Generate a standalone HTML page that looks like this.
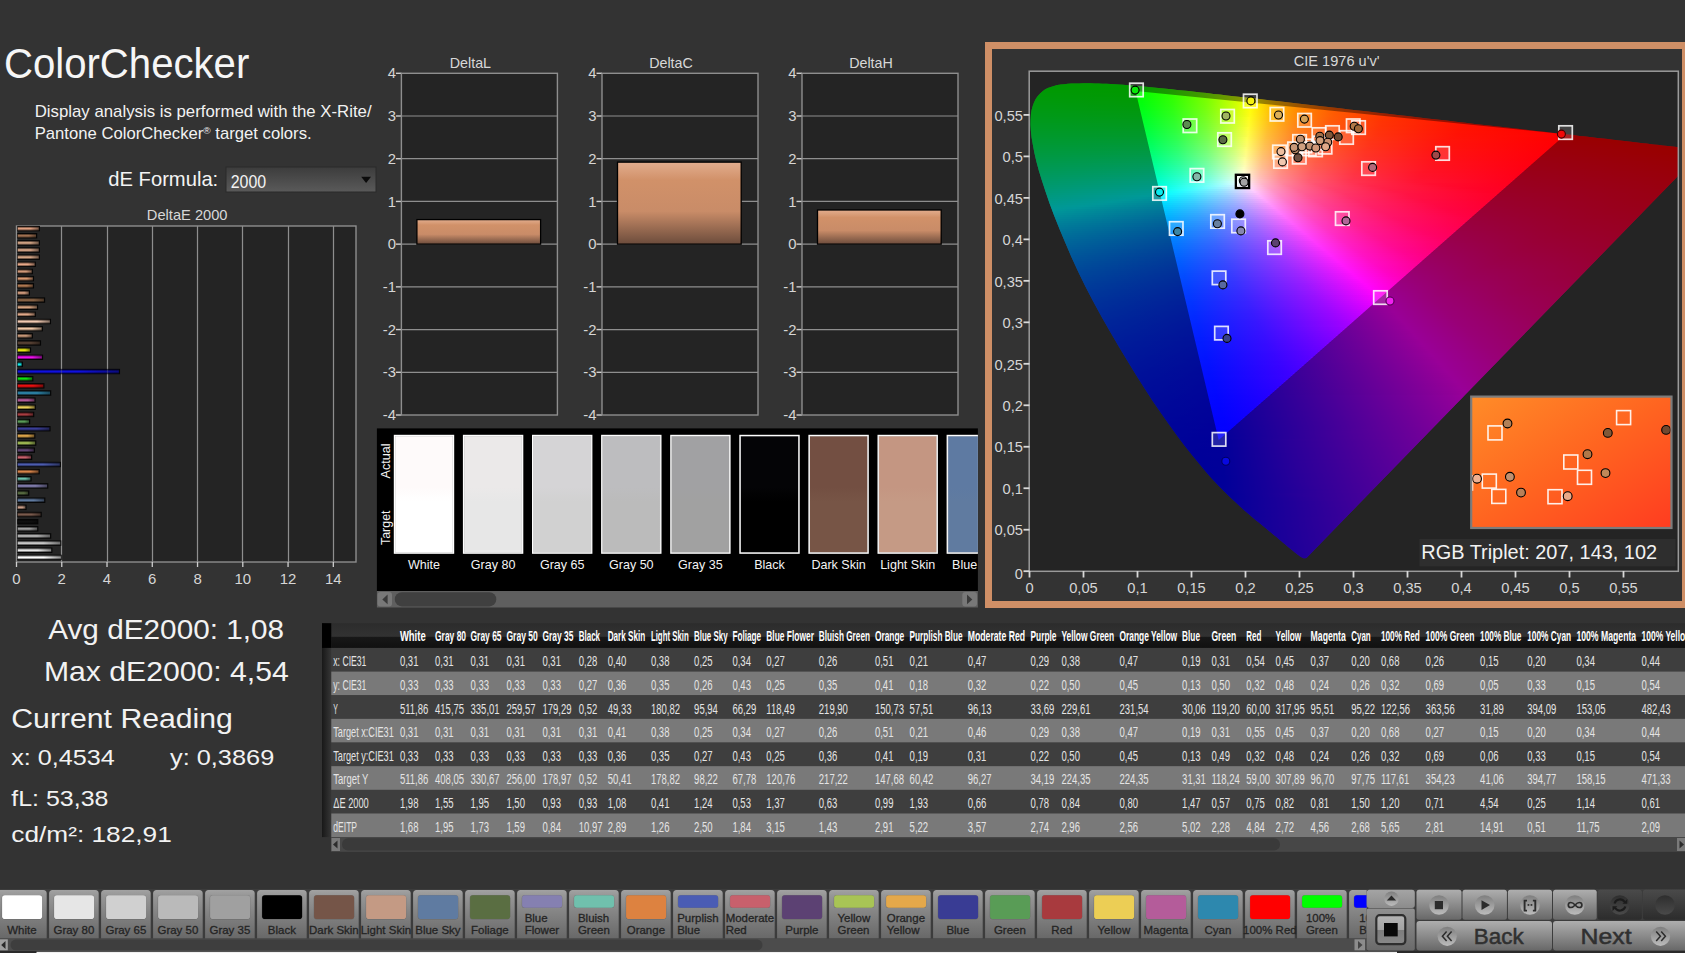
<!DOCTYPE html>
<html><head><meta charset="utf-8"><title>ColorChecker</title>
<style>html,body{margin:0;padding:0;background:#333333;overflow:hidden}svg{display:block}text{font-family:"Liberation Sans",sans-serif}</style>
</head><body>
<svg width="1685" height="953" viewBox="0 0 1685 953">
<defs><linearGradient id="dd" x1="0" y1="0" x2="0" y2="1"><stop offset="0" stop-color="#3c3c3c"/><stop offset="1" stop-color="#5a5a5a"/></linearGradient>
<linearGradient id="cyl" x1="0" y1="0" x2="0" y2="1"><stop offset="0" stop-color="#000" stop-opacity="0.6"/><stop offset="0.42" stop-color="#000" stop-opacity="0"/><stop offset="0.58" stop-color="#000" stop-opacity="0"/><stop offset="1" stop-color="#000" stop-opacity="0.6"/></linearGradient>
<linearGradient id="b0" x1="0" y1="0" x2="1" y2="0"><stop offset="0" stop-color="#ffffff"/><stop offset="0.6" stop-color="#ffffff"/><stop offset="1" stop-color="#ffffff" stop-opacity="0.55"/></linearGradient>
<linearGradient id="b1" x1="0" y1="0" x2="1" y2="0"><stop offset="0" stop-color="#e8e8e8"/><stop offset="0.6" stop-color="#e8e8e8"/><stop offset="1" stop-color="#e8e8e8" stop-opacity="0.55"/></linearGradient>
<linearGradient id="b2" x1="0" y1="0" x2="1" y2="0"><stop offset="0" stop-color="#d2d2d2"/><stop offset="0.6" stop-color="#d2d2d2"/><stop offset="1" stop-color="#d2d2d2" stop-opacity="0.55"/></linearGradient>
<linearGradient id="b3" x1="0" y1="0" x2="1" y2="0"><stop offset="0" stop-color="#bcbcbc"/><stop offset="0.6" stop-color="#bcbcbc"/><stop offset="1" stop-color="#bcbcbc" stop-opacity="0.55"/></linearGradient>
<linearGradient id="b4" x1="0" y1="0" x2="1" y2="0"><stop offset="0" stop-color="#a2a2a2"/><stop offset="0.6" stop-color="#a2a2a2"/><stop offset="1" stop-color="#a2a2a2" stop-opacity="0.55"/></linearGradient>
<linearGradient id="b5" x1="0" y1="0" x2="1" y2="0"><stop offset="0" stop-color="#101010"/><stop offset="0.6" stop-color="#101010"/><stop offset="1" stop-color="#101010" stop-opacity="0.55"/></linearGradient>
<linearGradient id="b6" x1="0" y1="0" x2="1" y2="0"><stop offset="0" stop-color="#7a5a4c"/><stop offset="0.6" stop-color="#7a5a4c"/><stop offset="1" stop-color="#7a5a4c" stop-opacity="0.55"/></linearGradient>
<linearGradient id="b7" x1="0" y1="0" x2="1" y2="0"><stop offset="0" stop-color="#c89c86"/><stop offset="0.6" stop-color="#c89c86"/><stop offset="1" stop-color="#c89c86" stop-opacity="0.55"/></linearGradient>
<linearGradient id="b8" x1="0" y1="0" x2="1" y2="0"><stop offset="0" stop-color="#607aa0"/><stop offset="0.6" stop-color="#607aa0"/><stop offset="1" stop-color="#607aa0" stop-opacity="0.55"/></linearGradient>
<linearGradient id="b9" x1="0" y1="0" x2="1" y2="0"><stop offset="0" stop-color="#5c7044"/><stop offset="0.6" stop-color="#5c7044"/><stop offset="1" stop-color="#5c7044" stop-opacity="0.55"/></linearGradient>
<linearGradient id="b10" x1="0" y1="0" x2="1" y2="0"><stop offset="0" stop-color="#8682b4"/><stop offset="0.6" stop-color="#8682b4"/><stop offset="1" stop-color="#8682b4" stop-opacity="0.55"/></linearGradient>
<linearGradient id="b11" x1="0" y1="0" x2="1" y2="0"><stop offset="0" stop-color="#6cc0ac"/><stop offset="0.6" stop-color="#6cc0ac"/><stop offset="1" stop-color="#6cc0ac" stop-opacity="0.55"/></linearGradient>
<linearGradient id="b12" x1="0" y1="0" x2="1" y2="0"><stop offset="0" stop-color="#d8844a"/><stop offset="0.6" stop-color="#d8844a"/><stop offset="1" stop-color="#d8844a" stop-opacity="0.55"/></linearGradient>
<linearGradient id="b13" x1="0" y1="0" x2="1" y2="0"><stop offset="0" stop-color="#4c5cb0"/><stop offset="0.6" stop-color="#4c5cb0"/><stop offset="1" stop-color="#4c5cb0" stop-opacity="0.55"/></linearGradient>
<linearGradient id="b14" x1="0" y1="0" x2="1" y2="0"><stop offset="0" stop-color="#c8606c"/><stop offset="0.6" stop-color="#c8606c"/><stop offset="1" stop-color="#c8606c" stop-opacity="0.55"/></linearGradient>
<linearGradient id="b15" x1="0" y1="0" x2="1" y2="0"><stop offset="0" stop-color="#644878"/><stop offset="0.6" stop-color="#644878"/><stop offset="1" stop-color="#644878" stop-opacity="0.55"/></linearGradient>
<linearGradient id="b16" x1="0" y1="0" x2="1" y2="0"><stop offset="0" stop-color="#a8c458"/><stop offset="0.6" stop-color="#a8c458"/><stop offset="1" stop-color="#a8c458" stop-opacity="0.55"/></linearGradient>
<linearGradient id="b17" x1="0" y1="0" x2="1" y2="0"><stop offset="0" stop-color="#e4aa4c"/><stop offset="0.6" stop-color="#e4aa4c"/><stop offset="1" stop-color="#e4aa4c" stop-opacity="0.55"/></linearGradient>
<linearGradient id="b18" x1="0" y1="0" x2="1" y2="0"><stop offset="0" stop-color="#3a3e98"/><stop offset="0.6" stop-color="#3a3e98"/><stop offset="1" stop-color="#3a3e98" stop-opacity="0.55"/></linearGradient>
<linearGradient id="b19" x1="0" y1="0" x2="1" y2="0"><stop offset="0" stop-color="#5a9c58"/><stop offset="0.6" stop-color="#5a9c58"/><stop offset="1" stop-color="#5a9c58" stop-opacity="0.55"/></linearGradient>
<linearGradient id="b20" x1="0" y1="0" x2="1" y2="0"><stop offset="0" stop-color="#a83c40"/><stop offset="0.6" stop-color="#a83c40"/><stop offset="1" stop-color="#a83c40" stop-opacity="0.55"/></linearGradient>
<linearGradient id="b21" x1="0" y1="0" x2="1" y2="0"><stop offset="0" stop-color="#ecd058"/><stop offset="0.6" stop-color="#ecd058"/><stop offset="1" stop-color="#ecd058" stop-opacity="0.55"/></linearGradient>
<linearGradient id="b22" x1="0" y1="0" x2="1" y2="0"><stop offset="0" stop-color="#b85c9c"/><stop offset="0.6" stop-color="#b85c9c"/><stop offset="1" stop-color="#b85c9c" stop-opacity="0.55"/></linearGradient>
<linearGradient id="b23" x1="0" y1="0" x2="1" y2="0"><stop offset="0" stop-color="#2e8ab0"/><stop offset="0.6" stop-color="#2e8ab0"/><stop offset="1" stop-color="#2e8ab0" stop-opacity="0.55"/></linearGradient>
<linearGradient id="b24" x1="0" y1="0" x2="1" y2="0"><stop offset="0" stop-color="#f01010"/><stop offset="0.6" stop-color="#f01010"/><stop offset="1" stop-color="#f01010" stop-opacity="0.55"/></linearGradient>
<linearGradient id="b25" x1="0" y1="0" x2="1" y2="0"><stop offset="0" stop-color="#10e010"/><stop offset="0.6" stop-color="#10e010"/><stop offset="1" stop-color="#10e010" stop-opacity="0.55"/></linearGradient>
<linearGradient id="b26" x1="0" y1="0" x2="1" y2="0"><stop offset="0" stop-color="#1010e0"/><stop offset="0.6" stop-color="#1010e0"/><stop offset="1" stop-color="#1010e0" stop-opacity="0.55"/></linearGradient>
<linearGradient id="b27" x1="0" y1="0" x2="1" y2="0"><stop offset="0" stop-color="#10f0f0"/><stop offset="0.6" stop-color="#10f0f0"/><stop offset="1" stop-color="#10f0f0" stop-opacity="0.55"/></linearGradient>
<linearGradient id="b28" x1="0" y1="0" x2="1" y2="0"><stop offset="0" stop-color="#f010f0"/><stop offset="0.6" stop-color="#f010f0"/><stop offset="1" stop-color="#f010f0" stop-opacity="0.55"/></linearGradient>
<linearGradient id="b29" x1="0" y1="0" x2="1" y2="0"><stop offset="0" stop-color="#f0f010"/><stop offset="0.6" stop-color="#f0f010"/><stop offset="1" stop-color="#f0f010" stop-opacity="0.55"/></linearGradient>
<linearGradient id="b30" x1="0" y1="0" x2="1" y2="0"><stop offset="0" stop-color="#5c4436"/><stop offset="0.6" stop-color="#5c4436"/><stop offset="1" stop-color="#5c4436" stop-opacity="0.55"/></linearGradient>
<linearGradient id="b31" x1="0" y1="0" x2="1" y2="0"><stop offset="0" stop-color="#c89878"/><stop offset="0.6" stop-color="#c89878"/><stop offset="1" stop-color="#c89878" stop-opacity="0.55"/></linearGradient>
<linearGradient id="b32" x1="0" y1="0" x2="1" y2="0"><stop offset="0" stop-color="#f0c8a8"/><stop offset="0.6" stop-color="#f0c8a8"/><stop offset="1" stop-color="#f0c8a8" stop-opacity="0.55"/></linearGradient>
<linearGradient id="b33" x1="0" y1="0" x2="1" y2="0"><stop offset="0" stop-color="#f2cab2"/><stop offset="0.6" stop-color="#f2cab2"/><stop offset="1" stop-color="#f2cab2" stop-opacity="0.55"/></linearGradient>
<linearGradient id="b34" x1="0" y1="0" x2="1" y2="0"><stop offset="0" stop-color="#e0a888"/><stop offset="0.6" stop-color="#e0a888"/><stop offset="1" stop-color="#e0a888" stop-opacity="0.55"/></linearGradient>
<linearGradient id="b35" x1="0" y1="0" x2="1" y2="0"><stop offset="0" stop-color="#d8a480"/><stop offset="0.6" stop-color="#d8a480"/><stop offset="1" stop-color="#d8a480" stop-opacity="0.55"/></linearGradient>
<linearGradient id="b36" x1="0" y1="0" x2="1" y2="0"><stop offset="0" stop-color="#906848"/><stop offset="0.6" stop-color="#906848"/><stop offset="1" stop-color="#906848" stop-opacity="0.55"/></linearGradient>
<linearGradient id="b37" x1="0" y1="0" x2="1" y2="0"><stop offset="0" stop-color="#d8a080"/><stop offset="0.6" stop-color="#d8a080"/><stop offset="1" stop-color="#d8a080" stop-opacity="0.55"/></linearGradient>
<linearGradient id="b38" x1="0" y1="0" x2="1" y2="0"><stop offset="0" stop-color="#b07850"/><stop offset="0.6" stop-color="#b07850"/><stop offset="1" stop-color="#b07850" stop-opacity="0.55"/></linearGradient>
<linearGradient id="b39" x1="0" y1="0" x2="1" y2="0"><stop offset="0" stop-color="#d89870"/><stop offset="0.6" stop-color="#d89870"/><stop offset="1" stop-color="#d89870" stop-opacity="0.55"/></linearGradient>
<linearGradient id="b40" x1="0" y1="0" x2="1" y2="0"><stop offset="0" stop-color="#d09878"/><stop offset="0.6" stop-color="#d09878"/><stop offset="1" stop-color="#d09878" stop-opacity="0.55"/></linearGradient>
<linearGradient id="b41" x1="0" y1="0" x2="1" y2="0"><stop offset="0" stop-color="#e8a888"/><stop offset="0.6" stop-color="#e8a888"/><stop offset="1" stop-color="#e8a888" stop-opacity="0.55"/></linearGradient>
<linearGradient id="b42" x1="0" y1="0" x2="1" y2="0"><stop offset="0" stop-color="#d8a888"/><stop offset="0.6" stop-color="#d8a888"/><stop offset="1" stop-color="#d8a888" stop-opacity="0.55"/></linearGradient>
<linearGradient id="b43" x1="0" y1="0" x2="1" y2="0"><stop offset="0" stop-color="#dcaa8c"/><stop offset="0.6" stop-color="#dcaa8c"/><stop offset="1" stop-color="#dcaa8c" stop-opacity="0.55"/></linearGradient>
<linearGradient id="b44" x1="0" y1="0" x2="1" y2="0"><stop offset="0" stop-color="#d8a888"/><stop offset="0.6" stop-color="#d8a888"/><stop offset="1" stop-color="#d8a888" stop-opacity="0.55"/></linearGradient>
<linearGradient id="b45" x1="0" y1="0" x2="1" y2="0"><stop offset="0" stop-color="#a07050"/><stop offset="0.6" stop-color="#a07050"/><stop offset="1" stop-color="#a07050" stop-opacity="0.55"/></linearGradient>
<linearGradient id="b46" x1="0" y1="0" x2="1" y2="0"><stop offset="0" stop-color="#e0a080"/><stop offset="0.6" stop-color="#e0a080"/><stop offset="1" stop-color="#e0a080" stop-opacity="0.55"/></linearGradient>
<linearGradient id="sal" x1="0" y1="0" x2="0" y2="1"><stop offset="0" stop-color="#e2ad8e"/><stop offset="0.22" stop-color="#d19169"/><stop offset="0.6" stop-color="#c98c68"/><stop offset="1" stop-color="#6c4c3c"/></linearGradient>
<linearGradient id="sw0" x1="0" y1="0" x2="0" y2="1"><stop offset="0.44" stop-color="#fefafa"/><stop offset="0.56" stop-color="#ffffff"/></linearGradient>
<linearGradient id="sw1" x1="0" y1="0" x2="0" y2="1"><stop offset="0.44" stop-color="#ebe9e9"/><stop offset="0.56" stop-color="#e7e7e7"/></linearGradient>
<linearGradient id="sw2" x1="0" y1="0" x2="0" y2="1"><stop offset="0.44" stop-color="#d5d4d6"/><stop offset="0.56" stop-color="#d1d1d1"/></linearGradient>
<linearGradient id="sw3" x1="0" y1="0" x2="0" y2="1"><stop offset="0.44" stop-color="#bdbdbf"/><stop offset="0.56" stop-color="#bbbbbb"/></linearGradient>
<linearGradient id="sw4" x1="0" y1="0" x2="0" y2="1"><stop offset="0.44" stop-color="#a1a1a3"/><stop offset="0.56" stop-color="#a1a1a1"/></linearGradient>
<linearGradient id="sw5" x1="0" y1="0" x2="0" y2="1"><stop offset="0.44" stop-color="#040406"/><stop offset="0.56" stop-color="#000000"/></linearGradient>
<linearGradient id="sw6" x1="0" y1="0" x2="0" y2="1"><stop offset="0.44" stop-color="#734f42"/><stop offset="0.56" stop-color="#775546"/></linearGradient>
<linearGradient id="sw7" x1="0" y1="0" x2="0" y2="1"><stop offset="0.44" stop-color="#c49682"/><stop offset="0.56" stop-color="#c59a85"/></linearGradient>
<linearGradient id="sw8" x1="0" y1="0" x2="0" y2="1"><stop offset="0.44" stop-color="#5e7aa2"/><stop offset="0.56" stop-color="#607ba0"/></linearGradient>
<clipPath id="loc"><path d="M1306.7 557.7 L1306.7 557.7 L1306.7 557.7 L1306.6 557.7 L1306.6 557.7 L1306.5 557.7 L1306.4 557.8 L1306.4 557.9 L1306.3 558.0 L1306.2 558.0 L1306.1 558.0 L1306.1 558.0 L1306.0 558.0 L1305.9 558.0 L1305.8 558.1 L1305.7 558.2 L1305.5 558.2 L1305.4 558.3 L1305.3 558.3 L1305.1 558.3 L1305.0 558.2 L1304.8 558.2 L1304.7 558.2 L1304.5 558.2 L1304.3 558.2 L1304.1 558.3 L1303.9 558.3 L1303.7 558.3 L1303.4 558.3 L1303.1 558.1 L1302.7 558.0 L1302.3 557.7 L1301.8 557.5 L1301.2 557.1 L1300.5 556.7 L1299.8 556.2 L1299.0 555.6 L1298.1 555.0 L1297.2 554.3 L1296.3 553.5 L1295.2 552.7 L1294.0 551.7 L1292.6 550.6 L1291.2 549.5 L1289.7 548.2 L1288.1 546.9 L1286.5 545.5 L1284.7 544.0 L1282.8 542.4 L1280.8 540.7 L1278.7 539.0 L1276.5 537.1 L1274.1 535.2 L1271.5 533.0 L1268.7 530.7 L1265.8 528.3 L1262.7 525.8 L1259.5 523.1 L1256.1 520.4 L1252.6 517.5 L1248.9 514.3 L1245.0 510.9 L1240.9 507.2 L1236.6 503.3 L1232.0 499.0 L1227.3 494.5 L1222.5 489.8 L1217.4 484.5 L1211.7 478.4 L1205.6 471.4 L1199.0 463.6 L1192.0 455.1 L1184.8 445.9 L1177.3 435.9 L1169.4 425.1 L1161.3 413.6 L1153.0 401.5 L1144.6 388.5 L1135.9 374.8 L1127.2 360.6 L1118.6 346.2 L1110.0 331.5 L1101.4 316.4 L1093.1 301.3 L1085.4 286.4 L1078.2 271.7 L1071.4 257.0 L1065.2 242.6 L1059.5 229.0 L1054.3 216.0 L1049.6 203.4 L1045.5 191.6 L1041.9 180.6 L1038.8 170.5 L1036.3 161.2 L1034.3 152.6 L1032.8 144.6 L1031.6 137.4 L1030.9 130.9 L1030.5 125.0 L1030.6 119.6 L1030.9 114.6 L1031.6 110.1 L1032.7 106.1 L1034.0 102.4 L1035.7 99.1 L1037.6 96.2 L1039.9 93.7 L1042.3 91.5 L1044.9 89.6 L1047.8 88.1 L1050.8 86.9 L1054.0 85.9 L1057.3 85.1 L1060.8 84.5 L1064.3 84.2 L1067.9 83.8 L1071.6 83.6 L1075.4 83.4 L1079.3 83.4 L1083.1 83.3 L1087.0 83.3 L1090.8 83.3 L1094.7 83.4 L1098.6 83.5 L1102.5 83.7 L1106.5 83.8 L1110.6 84.0 L1114.7 84.3 L1118.9 84.5 L1123.2 84.8 L1127.6 85.2 L1132.0 85.5 L1136.6 85.9 L1141.2 86.3 L1146.0 86.8 L1150.9 87.2 L1155.9 87.7 L1161.0 88.2 L1166.2 88.8 L1171.6 89.3 L1177.1 89.9 L1182.8 90.5 L1188.6 91.1 L1194.6 91.8 L1200.7 92.5 L1207.0 93.1 L1213.4 93.9 L1220.0 94.6 L1226.8 95.4 L1233.7 96.2 L1240.8 97.0 L1248.1 97.8 L1255.6 98.6 L1263.2 99.5 L1271.0 100.4 L1279.0 101.3 L1287.2 102.3 L1295.5 103.2 L1304.0 104.2 L1312.7 105.2 L1321.6 106.2 L1330.6 107.3 L1339.8 108.3 L1349.1 109.4 L1358.5 110.5 L1368.1 111.6 L1377.8 112.7 L1387.5 113.8 L1397.4 114.9 L1407.3 116.1 L1417.2 117.2 L1427.1 118.4 L1436.7 119.5 L1446.3 120.6 L1455.9 121.7 L1465.4 122.8 L1474.8 123.9 L1484.3 124.9 L1493.6 126.0 L1502.6 127.1 L1511.4 128.1 L1520.0 129.0 L1528.3 130.0 L1536.4 130.9 L1544.2 131.8 L1551.9 132.7 L1559.2 133.5 L1566.3 134.4 L1573.0 135.1 L1579.5 135.9 L1585.7 136.6 L1591.7 137.3 L1597.3 137.9 L1602.8 138.6 L1607.9 139.1 L1612.9 139.7 L1617.7 140.3 L1622.2 140.8 L1626.6 141.3 L1630.9 141.8 L1635.0 142.3 L1638.9 142.7 L1642.7 143.2 L1646.4 143.6 L1649.9 144.0 L1653.3 144.4 L1656.5 144.7 L1659.6 145.1 L1662.4 145.4 L1665.2 145.7 L1667.8 146.0 L1670.2 146.3 L1672.5 146.5 L1674.6 146.8 L1676.6 147.0 L1678.4 147.2 L1680.2 147.4 L1681.9 147.6 L1683.4 147.8 L1684.9 148.0 L1686.2 148.1 L1687.5 148.3 L1688.6 148.4 L1689.7 148.5 L1690.6 148.6 L1691.4 148.7 L1692.1 148.8 L1692.8 148.9 L1693.5 149.0 L1694.2 149.1 L1694.8 149.1 L1695.4 149.2 L1695.9 149.3 L1696.4 149.3 L1696.9 149.4 L1697.4 149.4 L1697.9 149.5 L1698.4 149.5 L1698.9 149.6 L1699.4 149.7 L1699.9 149.7 L1700.3 149.8 L1700.8 149.8 L1701.2 149.9 L1701.5 149.9 L1701.8 149.9 L1702.1 150.0 L1702.3 150.0 L1702.5 150.0 L1702.7 150.0 L1702.8 150.1 L1702.9 150.1 L1703.0 150.1 L1703.1 150.1 L1703.2 150.1 L1703.2 150.1Z"/></clipPath><clipPath id="plot"><rect x="1029.5" y="71.5" width="648.5" height="499.5"/></clipPath><linearGradient id="g0" gradientUnits="userSpaceOnUse" x1="1056" x2="1127" y1="0" y2="0"><stop offset="0" stop-color="#00ff01"/><stop offset="1" stop-color="#00ff00"/></linearGradient><linearGradient id="g1" gradientUnits="userSpaceOnUse" x1="1049" x2="1150" y1="0" y2="0"><stop offset="0" stop-color="#00ff03"/><stop offset="0.8812" stop-color="#03ff00"/><stop offset="1" stop-color="#11ff00"/></linearGradient><linearGradient id="g2" gradientUnits="userSpaceOnUse" x1="1045" x2="1170" y1="0" y2="0"><stop offset="0" stop-color="#00ff05"/><stop offset="0.744" stop-color="#02ff00"/><stop offset="0.992" stop-color="#2dff00"/><stop offset="1" stop-color="#2fff00"/></linearGradient><linearGradient id="g3" gradientUnits="userSpaceOnUse" x1="1041" x2="1189" y1="0" y2="0"><stop offset="0" stop-color="#00ff07"/><stop offset="0.6622" stop-color="#03ff00"/><stop offset="0.8784" stop-color="#31ff00"/><stop offset="1" stop-color="#53ff00"/></linearGradient><linearGradient id="g4" gradientUnits="userSpaceOnUse" x1="1039" x2="1207" y1="0" y2="0"><stop offset="0" stop-color="#00ff09"/><stop offset="0.5952" stop-color="#02ff01"/><stop offset="0.7798" stop-color="#2eff00"/><stop offset="0.9881" stop-color="#77ff00"/><stop offset="1" stop-color="#7cff00"/></linearGradient><linearGradient id="g5" gradientUnits="userSpaceOnUse" x1="1037" x2="1225" y1="0" y2="0"><stop offset="0" stop-color="#00ff0c"/><stop offset="0.5479" stop-color="#03ff02"/><stop offset="0.7128" stop-color="#30ff00"/><stop offset="0.8989" stop-color="#79ff00"/><stop offset="1" stop-color="#acff00"/></linearGradient><linearGradient id="g6" gradientUnits="userSpaceOnUse" x1="1036" x2="1243" y1="0" y2="0"><stop offset="0" stop-color="#00ff0e"/><stop offset="0.5024" stop-color="#02ff04"/><stop offset="0.6522" stop-color="#2fff01"/><stop offset="0.8213" stop-color="#79ff00"/><stop offset="0.9758" stop-color="#d3ff00"/><stop offset="1" stop-color="#e4ff00"/></linearGradient><linearGradient id="g7" gradientUnits="userSpaceOnUse" x1="1034" x2="1260" y1="0" y2="0"><stop offset="0" stop-color="#00ff10"/><stop offset="0.4735" stop-color="#03ff07"/><stop offset="0.6106" stop-color="#30ff03"/><stop offset="0.7611" stop-color="#79ff00"/><stop offset="0.9027" stop-color="#d4ff00"/><stop offset="0.9602" stop-color="#fffe00"/><stop offset="1" stop-color="#ffe100"/></linearGradient><linearGradient id="g8" gradientUnits="userSpaceOnUse" x1="1033" x2="1278" y1="0" y2="0"><stop offset="0" stop-color="#00ff13"/><stop offset="0.4408" stop-color="#03ff09"/><stop offset="0.5673" stop-color="#30ff06"/><stop offset="0.7061" stop-color="#79ff02"/><stop offset="0.8367" stop-color="#d4ff00"/><stop offset="0.8898" stop-color="#fffe00"/><stop offset="0.9755" stop-color="#ffc000"/><stop offset="1" stop-color="#ffb200"/></linearGradient><linearGradient id="g9" gradientUnits="userSpaceOnUse" x1="1032" x2="1295" y1="0" y2="0"><stop offset="0" stop-color="#00ff15"/><stop offset="0.4183" stop-color="#03ff0c"/><stop offset="0.5361" stop-color="#31ff08"/><stop offset="0.6654" stop-color="#7bff04"/><stop offset="0.7833" stop-color="#d4ff01"/><stop offset="0.8327" stop-color="#fffd00"/><stop offset="0.9125" stop-color="#ffbf00"/><stop offset="1" stop-color="#ff9100"/></linearGradient><linearGradient id="g10" gradientUnits="userSpaceOnUse" x1="1032" x2="1312" y1="0" y2="0"><stop offset="0" stop-color="#00ff18"/><stop offset="0.3929" stop-color="#03ff0e"/><stop offset="0.5" stop-color="#2fff0b"/><stop offset="0.6214" stop-color="#78ff07"/><stop offset="0.7321" stop-color="#d2ff03"/><stop offset="0.7821" stop-color="#fffc02"/><stop offset="0.8536" stop-color="#ffc100"/><stop offset="0.95" stop-color="#ff8b00"/><stop offset="1" stop-color="#ff7700"/></linearGradient><linearGradient id="g11" gradientUnits="userSpaceOnUse" x1="1031" x2="1330" y1="0" y2="0"><stop offset="0" stop-color="#00ff1b"/><stop offset="0.3712" stop-color="#02ff11"/><stop offset="0.4716" stop-color="#2eff0e"/><stop offset="0.5853" stop-color="#78ff0a"/><stop offset="0.689" stop-color="#d2ff06"/><stop offset="0.7324" stop-color="#ffff05"/><stop offset="0.8027" stop-color="#ffc001"/><stop offset="0.893" stop-color="#ff8b00"/><stop offset="1" stop-color="#ff6100"/></linearGradient><linearGradient id="g12" gradientUnits="userSpaceOnUse" x1="1030" x2="1347" y1="0" y2="0"><stop offset="0" stop-color="#00ff1d"/><stop offset="0.3565" stop-color="#03ff14"/><stop offset="0.4511" stop-color="#30ff11"/><stop offset="0.5552" stop-color="#78ff0d"/><stop offset="0.653" stop-color="#d2ff0a"/><stop offset="0.694" stop-color="#ffff08"/><stop offset="0.7571" stop-color="#ffc204"/><stop offset="0.8423" stop-color="#ff8c01"/><stop offset="0.959" stop-color="#ff5c00"/><stop offset="1" stop-color="#ff5000"/></linearGradient><linearGradient id="g13" gradientUnits="userSpaceOnUse" x1="1030" x2="1365" y1="0" y2="0"><stop offset="0" stop-color="#00ff20"/><stop offset="0.3373" stop-color="#02ff17"/><stop offset="0.4239" stop-color="#2dff15"/><stop offset="0.5224" stop-color="#75ff11"/><stop offset="0.6149" stop-color="#cfff0d"/><stop offset="0.6567" stop-color="#fffe0b"/><stop offset="0.7164" stop-color="#ffc106"/><stop offset="0.797" stop-color="#ff8b02"/><stop offset="0.9075" stop-color="#ff5c00"/><stop offset="1" stop-color="#ff4200"/></linearGradient><linearGradient id="g14" gradientUnits="userSpaceOnUse" x1="1030" x2="1382" y1="0" y2="0"><stop offset="0" stop-color="#00ff23"/><stop offset="0.3239" stop-color="#03ff1b"/><stop offset="0.4091" stop-color="#31ff18"/><stop offset="0.5028" stop-color="#7aff14"/><stop offset="0.5881" stop-color="#d3ff11"/><stop offset="0.625" stop-color="#fffd0f"/><stop offset="0.6818" stop-color="#ffc009"/><stop offset="0.7585" stop-color="#ff8a04"/><stop offset="0.8636" stop-color="#ff5b01"/><stop offset="1" stop-color="#ff3600"/></linearGradient><linearGradient id="g15" gradientUnits="userSpaceOnUse" x1="1029" x2="1399" y1="0" y2="0"><stop offset="0" stop-color="#00ff26"/><stop offset="0.3108" stop-color="#02ff1e"/><stop offset="0.3892" stop-color="#2eff1b"/><stop offset="0.4784" stop-color="#77ff18"/><stop offset="0.5595" stop-color="#d0ff15"/><stop offset="0.5973" stop-color="#fffc13"/><stop offset="0.6514" stop-color="#ffc00c"/><stop offset="0.7243" stop-color="#ff8907"/><stop offset="0.8243" stop-color="#ff5a02"/><stop offset="0.9703" stop-color="#ff3200"/><stop offset="1" stop-color="#ff2d00"/></linearGradient><linearGradient id="g16" gradientUnits="userSpaceOnUse" x1="1029" x2="1417" y1="0" y2="0"><stop offset="0" stop-color="#00ff28"/><stop offset="0.299" stop-color="#03ff21"/><stop offset="0.3737" stop-color="#2fff1f"/><stop offset="0.4588" stop-color="#7aff1c"/><stop offset="0.5361" stop-color="#d4ff19"/><stop offset="0.5696" stop-color="#fffc17"/><stop offset="0.6211" stop-color="#ffbf0f"/><stop offset="0.6907" stop-color="#ff8809"/><stop offset="0.7861" stop-color="#ff5a04"/><stop offset="0.9253" stop-color="#ff3200"/><stop offset="1" stop-color="#ff2400"/></linearGradient><linearGradient id="g17" gradientUnits="userSpaceOnUse" x1="1029" x2="1434" y1="0" y2="0"><stop offset="0" stop-color="#00ff2b"/><stop offset="0.2864" stop-color="#02ff25"/><stop offset="0.358" stop-color="#2fff23"/><stop offset="0.437" stop-color="#77ff20"/><stop offset="0.5111" stop-color="#d1ff1d"/><stop offset="0.5432" stop-color="#ffff1c"/><stop offset="0.5901" stop-color="#ffc313"/><stop offset="0.6543" stop-color="#ff8d0c"/><stop offset="0.7432" stop-color="#ff5d06"/><stop offset="0.8716" stop-color="#ff3501"/><stop offset="1" stop-color="#ff1d00"/></linearGradient><linearGradient id="g18" gradientUnits="userSpaceOnUse" x1="1029" x2="1451" y1="0" y2="0"><stop offset="0" stop-color="#00ff2e"/><stop offset="0.2773" stop-color="#03ff29"/><stop offset="0.346" stop-color="#30ff27"/><stop offset="0.4218" stop-color="#7aff24"/><stop offset="0.4929" stop-color="#d4ff21"/><stop offset="0.5213" stop-color="#fffe20"/><stop offset="0.5664" stop-color="#ffc217"/><stop offset="0.628" stop-color="#ff8c0f"/><stop offset="0.7133" stop-color="#ff5c08"/><stop offset="0.8365" stop-color="#ff3402"/><stop offset="1" stop-color="#ff1700"/></linearGradient><linearGradient id="g19" gradientUnits="userSpaceOnUse" x1="1029" x2="1469" y1="0" y2="0"><stop offset="0" stop-color="#00ff31"/><stop offset="0.2659" stop-color="#03ff2c"/><stop offset="0.3318" stop-color="#30ff2b"/><stop offset="0.4045" stop-color="#79ff28"/><stop offset="0.4727" stop-color="#d5ff26"/><stop offset="0.5" stop-color="#fffd25"/><stop offset="0.5432" stop-color="#ffc21b"/><stop offset="0.6023" stop-color="#ff8b12"/><stop offset="0.6841" stop-color="#ff5b0a"/><stop offset="0.8023" stop-color="#ff3304"/><stop offset="0.9864" stop-color="#ff1300"/><stop offset="1" stop-color="#ff1200"/></linearGradient><linearGradient id="g20" gradientUnits="userSpaceOnUse" x1="1029" x2="1486" y1="0" y2="0"><stop offset="0" stop-color="#00ff35"/><stop offset="0.2582" stop-color="#03ff30"/><stop offset="0.3217" stop-color="#31ff2f"/><stop offset="0.3917" stop-color="#7cff2d"/><stop offset="0.4551" stop-color="#d5ff2b"/><stop offset="0.4814" stop-color="#fffd29"/><stop offset="0.523" stop-color="#ffc11e"/><stop offset="0.5799" stop-color="#ff8a14"/><stop offset="0.6586" stop-color="#ff5b0c"/><stop offset="0.7724" stop-color="#ff3305"/><stop offset="0.9497" stop-color="#ff1300"/><stop offset="1" stop-color="#ff0d00"/></linearGradient><linearGradient id="g21" gradientUnits="userSpaceOnUse" x1="1029" x2="1504" y1="0" y2="0"><stop offset="0" stop-color="#00ff38"/><stop offset="0.2484" stop-color="#03ff34"/><stop offset="0.3074" stop-color="#2fff33"/><stop offset="0.3747" stop-color="#79ff31"/><stop offset="0.4358" stop-color="#d2ff30"/><stop offset="0.4632" stop-color="#fffc2e"/><stop offset="0.5032" stop-color="#ffc022"/><stop offset="0.5579" stop-color="#ff8917"/><stop offset="0.6337" stop-color="#ff5a0e"/><stop offset="0.7432" stop-color="#ff3206"/><stop offset="0.9137" stop-color="#ff1201"/><stop offset="1" stop-color="#ff0900"/></linearGradient><linearGradient id="g22" gradientUnits="userSpaceOnUse" x1="1029" x2="1521" y1="0" y2="0"><stop offset="0" stop-color="#00ff3b"/><stop offset="0.2398" stop-color="#02ff38"/><stop offset="0.2967" stop-color="#2eff37"/><stop offset="0.3598" stop-color="#76ff36"/><stop offset="0.4187" stop-color="#cfff35"/><stop offset="0.4451" stop-color="#ffff34"/><stop offset="0.4837" stop-color="#ffc227"/><stop offset="0.5346" stop-color="#ff8c1b"/><stop offset="0.6057" stop-color="#ff5c11"/><stop offset="0.7093" stop-color="#ff3408"/><stop offset="0.8699" stop-color="#ff1402"/><stop offset="1" stop-color="#ff0600"/></linearGradient><linearGradient id="g23" gradientUnits="userSpaceOnUse" x1="1029" x2="1539" y1="0" y2="0"><stop offset="0" stop-color="#00ff3e"/><stop offset="0.2333" stop-color="#03ff3c"/><stop offset="0.2882" stop-color="#30ff3c"/><stop offset="0.349" stop-color="#79ff3b"/><stop offset="0.4059" stop-color="#d3ff3a"/><stop offset="0.4294" stop-color="#fffe39"/><stop offset="0.4667" stop-color="#ffc12b"/><stop offset="0.5157" stop-color="#ff8b1e"/><stop offset="0.5843" stop-color="#ff5c13"/><stop offset="0.6843" stop-color="#ff330a"/><stop offset="0.8392" stop-color="#ff1303"/><stop offset="1" stop-color="#ff0300"/></linearGradient><linearGradient id="g24" gradientUnits="userSpaceOnUse" x1="1029" x2="1556" y1="0" y2="0"><stop offset="0" stop-color="#00ff42"/><stop offset="0.2258" stop-color="#02ff41"/><stop offset="0.277" stop-color="#2dff40"/><stop offset="0.3359" stop-color="#76ff40"/><stop offset="0.3909" stop-color="#d0ff3f"/><stop offset="0.4156" stop-color="#fffe3f"/><stop offset="0.4516" stop-color="#ffc02f"/><stop offset="0.4991" stop-color="#ff8a22"/><stop offset="0.5655" stop-color="#ff5b16"/><stop offset="0.6622" stop-color="#ff330c"/><stop offset="0.8121" stop-color="#ff1304"/><stop offset="1" stop-color="#ff0100"/></linearGradient><linearGradient id="g25" gradientUnits="userSpaceOnUse" x1="1030" x2="1573" y1="0" y2="0"><stop offset="0" stop-color="#00ff45"/><stop offset="0.2192" stop-color="#03ff45"/><stop offset="0.2707" stop-color="#31ff45"/><stop offset="0.3278" stop-color="#7bff45"/><stop offset="0.3794" stop-color="#d4ff45"/><stop offset="0.4015" stop-color="#fffd44"/><stop offset="0.4365" stop-color="#ffbf34"/><stop offset="0.4825" stop-color="#ff8a25"/><stop offset="0.547" stop-color="#ff5a18"/><stop offset="0.6409" stop-color="#ff320d"/><stop offset="0.7864" stop-color="#ff1205"/><stop offset="0.9945" stop-color="#ff0000"/><stop offset="1" stop-color="#ff0000"/></linearGradient><linearGradient id="g26" gradientUnits="userSpaceOnUse" x1="1030" x2="1591" y1="0" y2="0"><stop offset="0" stop-color="#00ff48"/><stop offset="0.2121" stop-color="#02ff49"/><stop offset="0.2602" stop-color="#2eff4a"/><stop offset="0.3155" stop-color="#78ff4a"/><stop offset="0.3654" stop-color="#d1ff4a"/><stop offset="0.3886" stop-color="#fffc4a"/><stop offset="0.4225" stop-color="#ffbe38"/><stop offset="0.467" stop-color="#ff8928"/><stop offset="0.5294" stop-color="#ff591b"/><stop offset="0.6203" stop-color="#ff320f"/><stop offset="0.7611" stop-color="#ff1206"/><stop offset="0.9608" stop-color="#ff0002"/><stop offset="1" stop-color="#ff0000"/></linearGradient><linearGradient id="g27" gradientUnits="userSpaceOnUse" x1="1030" x2="1608" y1="0" y2="0"><stop offset="0" stop-color="#00ff4c"/><stop offset="0.2076" stop-color="#03ff4e"/><stop offset="0.2543" stop-color="#2fff4e"/><stop offset="0.3062" stop-color="#78ff4f"/><stop offset="0.3547" stop-color="#d1ff50"/><stop offset="0.3754" stop-color="#ffff51"/><stop offset="0.4083" stop-color="#ffc03d"/><stop offset="0.4516" stop-color="#ff8a2c"/><stop offset="0.5104" stop-color="#ff5b1e"/><stop offset="0.5969" stop-color="#ff3312"/><stop offset="0.7301" stop-color="#ff1308"/><stop offset="0.9187" stop-color="#ff0001"/><stop offset="0.9239" stop-color="#ff0005"/><stop offset="1" stop-color="#ff0000"/></linearGradient><linearGradient id="g28" gradientUnits="userSpaceOnUse" x1="1030" x2="1626" y1="0" y2="0"><stop offset="0" stop-color="#00ff50"/><stop offset="0.2013" stop-color="#02ff53"/><stop offset="0.2466" stop-color="#2fff53"/><stop offset="0.297" stop-color="#77ff55"/><stop offset="0.344" stop-color="#d1ff56"/><stop offset="0.3641" stop-color="#ffff57"/><stop offset="0.3943" stop-color="#ffc243"/><stop offset="0.4346" stop-color="#ff8c31"/><stop offset="0.4899" stop-color="#ff5d22"/><stop offset="0.5705" stop-color="#ff3514"/><stop offset="0.6946" stop-color="#ff150a"/><stop offset="0.8842" stop-color="#ff0002"/><stop offset="0.8876" stop-color="#ff0002"/><stop offset="0.8893" stop-color="#ff0008"/><stop offset="1" stop-color="#ff0000"/></linearGradient><linearGradient id="g29" gradientUnits="userSpaceOnUse" x1="1031" x2="1643" y1="0" y2="0"><stop offset="0" stop-color="#00ff53"/><stop offset="0.1961" stop-color="#03ff57"/><stop offset="0.2402" stop-color="#30ff59"/><stop offset="0.2892" stop-color="#7aff5a"/><stop offset="0.335" stop-color="#d5ff5c"/><stop offset="0.3529" stop-color="#fffe5d"/><stop offset="0.3824" stop-color="#ffc148"/><stop offset="0.4216" stop-color="#ff8b35"/><stop offset="0.4755" stop-color="#ff5d25"/><stop offset="0.5539" stop-color="#ff3517"/><stop offset="0.6765" stop-color="#ff140b"/><stop offset="0.8595" stop-color="#ff0003"/><stop offset="0.8611" stop-color="#ff000a"/><stop offset="0.9886" stop-color="#ff0000"/><stop offset="1" stop-color="#ff0000"/></linearGradient><linearGradient id="g30" gradientUnits="userSpaceOnUse" x1="1031" x2="1660" y1="0" y2="0"><stop offset="0" stop-color="#00ff57"/><stop offset="0.1908" stop-color="#02ff5c"/><stop offset="0.2337" stop-color="#30ff5e"/><stop offset="0.2814" stop-color="#7aff60"/><stop offset="0.3243" stop-color="#d2ff62"/><stop offset="0.3434" stop-color="#fffd63"/><stop offset="0.372" stop-color="#ffc04d"/><stop offset="0.4102" stop-color="#ff8b39"/><stop offset="0.4626" stop-color="#ff5c27"/><stop offset="0.5405" stop-color="#ff3318"/><stop offset="0.6598" stop-color="#ff130c"/><stop offset="0.8315" stop-color="#ff0004"/><stop offset="0.8331" stop-color="#ff000c"/><stop offset="0.9793" stop-color="#ff0000"/><stop offset="1" stop-color="#ff0000"/></linearGradient><linearGradient id="g31" gradientUnits="userSpaceOnUse" x1="1031" x2="1678" y1="0" y2="0"><stop offset="0" stop-color="#00ff5b"/><stop offset="0.1855" stop-color="#02ff61"/><stop offset="0.2257" stop-color="#2dff63"/><stop offset="0.272" stop-color="#77ff66"/><stop offset="0.3138" stop-color="#cfff69"/><stop offset="0.3338" stop-color="#fffc69"/><stop offset="0.3617" stop-color="#ffc052"/><stop offset="0.3988" stop-color="#ff8a3d"/><stop offset="0.4498" stop-color="#ff5b2a"/><stop offset="0.5255" stop-color="#ff331a"/><stop offset="0.6414" stop-color="#ff130d"/><stop offset="0.8053" stop-color="#ff0005"/><stop offset="0.8068" stop-color="#ff000f"/><stop offset="0.9691" stop-color="#ff0000"/><stop offset="1" stop-color="#ff0000"/></linearGradient><linearGradient id="g32" gradientUnits="userSpaceOnUse" x1="1032" x2="1679" y1="0" y2="0"><stop offset="0" stop-color="#00ff5f"/><stop offset="0.1855" stop-color="#03ff66"/><stop offset="0.2257" stop-color="#2fff69"/><stop offset="0.2705" stop-color="#77ff6c"/><stop offset="0.3122" stop-color="#cfff6f"/><stop offset="0.3308" stop-color="#feff71"/><stop offset="0.3586" stop-color="#ffc258"/><stop offset="0.3957" stop-color="#ff8b41"/><stop offset="0.4467" stop-color="#ff5b2e"/><stop offset="0.5209" stop-color="#ff331d"/><stop offset="0.6352" stop-color="#ff130f"/><stop offset="0.8006" stop-color="#ff0006"/><stop offset="0.8022" stop-color="#ff0011"/><stop offset="0.9861" stop-color="#ff0000"/><stop offset="1" stop-color="#ff0000"/></linearGradient><linearGradient id="g33" gradientUnits="userSpaceOnUse" x1="1032" x2="1679" y1="0" y2="0"><stop offset="0" stop-color="#00ff62"/><stop offset="0.1855" stop-color="#02ff6b"/><stop offset="0.2257" stop-color="#2eff6e"/><stop offset="0.2705" stop-color="#76ff72"/><stop offset="0.3122" stop-color="#d0ff76"/><stop offset="0.3308" stop-color="#ffff78"/><stop offset="0.357" stop-color="#ffc45e"/><stop offset="0.3926" stop-color="#ff8e47"/><stop offset="0.442" stop-color="#ff5e32"/><stop offset="0.5147" stop-color="#ff3520"/><stop offset="0.626" stop-color="#ff1511"/><stop offset="0.796" stop-color="#ff0007"/><stop offset="0.7975" stop-color="#ff0013"/><stop offset="1" stop-color="#ff0000"/></linearGradient><linearGradient id="g34" gradientUnits="userSpaceOnUse" x1="1033" x2="1679" y1="0" y2="0"><stop offset="0" stop-color="#00ff66"/><stop offset="0.1858" stop-color="#03ff71"/><stop offset="0.226" stop-color="#30ff74"/><stop offset="0.2709" stop-color="#79ff78"/><stop offset="0.3127" stop-color="#d4ff7d"/><stop offset="0.3297" stop-color="#fffe7f"/><stop offset="0.356" stop-color="#ffc364"/><stop offset="0.3916" stop-color="#ff8d4b"/><stop offset="0.4412" stop-color="#ff5d35"/><stop offset="0.5139" stop-color="#ff3523"/><stop offset="0.6254" stop-color="#ff1413"/><stop offset="0.7926" stop-color="#ff0008"/><stop offset="0.7941" stop-color="#ff0015"/><stop offset="1" stop-color="#ff0000"/></linearGradient><linearGradient id="g35" gradientUnits="userSpaceOnUse" x1="1033" x2="1679" y1="0" y2="0"><stop offset="0" stop-color="#00ff6a"/><stop offset="0.1858" stop-color="#02ff76"/><stop offset="0.2245" stop-color="#2dff7a"/><stop offset="0.2693" stop-color="#76ff7f"/><stop offset="0.3111" stop-color="#d0ff84"/><stop offset="0.3297" stop-color="#fffd85"/><stop offset="0.356" stop-color="#ffc269"/><stop offset="0.3916" stop-color="#ff8c50"/><stop offset="0.4412" stop-color="#ff5c39"/><stop offset="0.5139" stop-color="#ff3425"/><stop offset="0.6254" stop-color="#ff1414"/><stop offset="0.7895" stop-color="#ff0009"/><stop offset="0.791" stop-color="#ff0017"/><stop offset="1" stop-color="#ff0001"/></linearGradient><linearGradient id="g36" gradientUnits="userSpaceOnUse" x1="1033" x2="1679" y1="0" y2="0"><stop offset="0" stop-color="#00ff6e"/><stop offset="0.1873" stop-color="#03ff7c"/><stop offset="0.2276" stop-color="#31ff80"/><stop offset="0.2724" stop-color="#7cff85"/><stop offset="0.3127" stop-color="#d5ff8b"/><stop offset="0.3297" stop-color="#fffc8c"/><stop offset="0.356" stop-color="#ffc16f"/><stop offset="0.3916" stop-color="#ff8b54"/><stop offset="0.4412" stop-color="#ff5c3c"/><stop offset="0.5139" stop-color="#ff3327"/><stop offset="0.6254" stop-color="#ff1316"/><stop offset="0.7864" stop-color="#ff000a"/><stop offset="0.7879" stop-color="#ff0019"/><stop offset="1" stop-color="#ff0003"/></linearGradient><linearGradient id="g37" gradientUnits="userSpaceOnUse" x1="1034" x2="1679" y1="0" y2="0"><stop offset="0" stop-color="#00ff73"/><stop offset="0.186" stop-color="#02ff82"/><stop offset="0.2248" stop-color="#2eff86"/><stop offset="0.2682" stop-color="#75ff8c"/><stop offset="0.3085" stop-color="#cdff92"/><stop offset="0.3271" stop-color="#feff95"/><stop offset="0.355" stop-color="#ffc075"/><stop offset="0.3907" stop-color="#ff8a58"/><stop offset="0.4403" stop-color="#ff5b3f"/><stop offset="0.5132" stop-color="#ff332a"/><stop offset="0.6248" stop-color="#ff1318"/><stop offset="0.7814" stop-color="#ff000b"/><stop offset="0.7829" stop-color="#ff001c"/><stop offset="1" stop-color="#ff0005"/></linearGradient><linearGradient id="g38" gradientUnits="userSpaceOnUse" x1="1034" x2="1679" y1="0" y2="0"><stop offset="0" stop-color="#00ff77"/><stop offset="0.1876" stop-color="#03ff87"/><stop offset="0.2264" stop-color="#2fff8c"/><stop offset="0.2698" stop-color="#78ff93"/><stop offset="0.3101" stop-color="#d2ff9a"/><stop offset="0.3271" stop-color="#ffff9d"/><stop offset="0.3535" stop-color="#ffc27c"/><stop offset="0.3891" stop-color="#ff8b5e"/><stop offset="0.4388" stop-color="#ff5b43"/><stop offset="0.5101" stop-color="#ff332d"/><stop offset="0.6202" stop-color="#ff131a"/><stop offset="0.7783" stop-color="#ff000c"/><stop offset="0.7798" stop-color="#ff001e"/><stop offset="1" stop-color="#ff0006"/></linearGradient><linearGradient id="g39" gradientUnits="userSpaceOnUse" x1="1035" x2="1679" y1="0" y2="0"><stop offset="0" stop-color="#00ff7b"/><stop offset="0.1863" stop-color="#02ff8d"/><stop offset="0.2252" stop-color="#2fff93"/><stop offset="0.2686" stop-color="#78ff9a"/><stop offset="0.309" stop-color="#d2ffa2"/><stop offset="0.3261" stop-color="#fffea5"/><stop offset="0.3525" stop-color="#ffc182"/><stop offset="0.3882" stop-color="#ff8a62"/><stop offset="0.4363" stop-color="#ff5b47"/><stop offset="0.5078" stop-color="#ff332f"/><stop offset="0.618" stop-color="#ff131c"/><stop offset="0.7748" stop-color="#ff000e"/><stop offset="0.7764" stop-color="#ff0020"/><stop offset="1" stop-color="#ff0008"/></linearGradient><linearGradient id="g40" gradientUnits="userSpaceOnUse" x1="1035" x2="1679" y1="0" y2="0"><stop offset="0" stop-color="#00ff80"/><stop offset="0.1879" stop-color="#03ff94"/><stop offset="0.2267" stop-color="#30ff99"/><stop offset="0.2702" stop-color="#7bffa1"/><stop offset="0.3106" stop-color="#d7ffaa"/><stop offset="0.3261" stop-color="#fffdac"/><stop offset="0.3525" stop-color="#ffc088"/><stop offset="0.3866" stop-color="#ff8b68"/><stop offset="0.4348" stop-color="#ff5c4c"/><stop offset="0.5047" stop-color="#ff3433"/><stop offset="0.6134" stop-color="#ff141e"/><stop offset="0.7717" stop-color="#ff000f"/><stop offset="0.7733" stop-color="#ff0022"/><stop offset="1" stop-color="#ff0009"/></linearGradient><linearGradient id="g41" gradientUnits="userSpaceOnUse" x1="1036" x2="1679" y1="0" y2="0"><stop offset="0" stop-color="#00ff84"/><stop offset="0.1866" stop-color="#02ff9a"/><stop offset="0.224" stop-color="#2dffa0"/><stop offset="0.2675" stop-color="#77ffa8"/><stop offset="0.3064" stop-color="#cfffb1"/><stop offset="0.325" stop-color="#fffdb4"/><stop offset="0.3515" stop-color="#ffbf8e"/><stop offset="0.3857" stop-color="#ff8a6d"/><stop offset="0.4339" stop-color="#ff5b4f"/><stop offset="0.5039" stop-color="#ff3335"/><stop offset="0.6128" stop-color="#ff1320"/><stop offset="0.7667" stop-color="#ff0010"/><stop offset="0.7683" stop-color="#ff0024"/><stop offset="1" stop-color="#ff000b"/></linearGradient><linearGradient id="g42" gradientUnits="userSpaceOnUse" x1="1036" x2="1679" y1="0" y2="0"><stop offset="0" stop-color="#00ff89"/><stop offset="0.1866" stop-color="#02ffa0"/><stop offset="0.224" stop-color="#2dffa7"/><stop offset="0.2659" stop-color="#74ffaf"/><stop offset="0.3048" stop-color="#cbffb9"/><stop offset="0.3235" stop-color="#feffbe"/><stop offset="0.3515" stop-color="#ffbe94"/><stop offset="0.3857" stop-color="#ff8972"/><stop offset="0.4339" stop-color="#ff5a53"/><stop offset="0.5039" stop-color="#ff3238"/><stop offset="0.6128" stop-color="#ff1321"/><stop offset="0.7636" stop-color="#ff0012"/><stop offset="0.7652" stop-color="#ff0026"/><stop offset="1" stop-color="#ff000c"/></linearGradient><linearGradient id="g43" gradientUnits="userSpaceOnUse" x1="1037" x2="1679" y1="0" y2="0"><stop offset="0" stop-color="#00ff8d"/><stop offset="0.1869" stop-color="#03ffa6"/><stop offset="0.2243" stop-color="#2effae"/><stop offset="0.2664" stop-color="#77ffb7"/><stop offset="0.3053" stop-color="#d0ffc2"/><stop offset="0.3224" stop-color="#ffffc7"/><stop offset="0.3489" stop-color="#ffc09d"/><stop offset="0.3832" stop-color="#ff8a78"/><stop offset="0.4315" stop-color="#ff5b57"/><stop offset="0.5016" stop-color="#ff323b"/><stop offset="0.609" stop-color="#ff1324"/><stop offset="0.7601" stop-color="#ff0013"/><stop offset="0.7617" stop-color="#ff0028"/><stop offset="1" stop-color="#ff000d"/></linearGradient><linearGradient id="g44" gradientUnits="userSpaceOnUse" x1="1037" x2="1679" y1="0" y2="0"><stop offset="0" stop-color="#00ff92"/><stop offset="0.1869" stop-color="#02ffad"/><stop offset="0.2243" stop-color="#2effb5"/><stop offset="0.2664" stop-color="#77ffbf"/><stop offset="0.3053" stop-color="#d0ffca"/><stop offset="0.3224" stop-color="#fffed0"/><stop offset="0.3474" stop-color="#ffc2a6"/><stop offset="0.3816" stop-color="#ff8b7f"/><stop offset="0.4283" stop-color="#ff5c5d"/><stop offset="0.4969" stop-color="#ff343f"/><stop offset="0.6028" stop-color="#ff1326"/><stop offset="0.7555" stop-color="#ff0015"/><stop offset="0.757" stop-color="#ff002b"/><stop offset="1" stop-color="#ff000f"/></linearGradient><linearGradient id="g45" gradientUnits="userSpaceOnUse" x1="1038" x2="1679" y1="0" y2="0"><stop offset="0" stop-color="#00ff97"/><stop offset="0.1872" stop-color="#03ffb4"/><stop offset="0.2246" stop-color="#2fffbc"/><stop offset="0.2668" stop-color="#7affc7"/><stop offset="0.3058" stop-color="#d5ffd4"/><stop offset="0.3214" stop-color="#fffed8"/><stop offset="0.3463" stop-color="#ffc1ac"/><stop offset="0.3791" stop-color="#ff8c85"/><stop offset="0.4259" stop-color="#ff5c62"/><stop offset="0.493" stop-color="#ff3443"/><stop offset="0.5975" stop-color="#ff1429"/><stop offset="0.752" stop-color="#ff0016"/><stop offset="0.7535" stop-color="#ff002d"/><stop offset="1" stop-color="#ff0010"/></linearGradient><linearGradient id="g46" gradientUnits="userSpaceOnUse" x1="1039" x2="1679" y1="0" y2="0"><stop offset="0" stop-color="#00ff9c"/><stop offset="0.1859" stop-color="#02ffbb"/><stop offset="0.2219" stop-color="#2dffc3"/><stop offset="0.2641" stop-color="#76ffcf"/><stop offset="0.3031" stop-color="#d1ffdc"/><stop offset="0.3203" stop-color="#fffde1"/><stop offset="0.3453" stop-color="#ffc0b3"/><stop offset="0.3781" stop-color="#ff8b8b"/><stop offset="0.425" stop-color="#ff5c66"/><stop offset="0.4922" stop-color="#ff3446"/><stop offset="0.5969" stop-color="#ff132b"/><stop offset="0.7484" stop-color="#ff0018"/><stop offset="0.75" stop-color="#ff002f"/><stop offset="1" stop-color="#ff0011"/></linearGradient><linearGradient id="g47" gradientUnits="userSpaceOnUse" x1="1039" x2="1679" y1="0" y2="0"><stop offset="0" stop-color="#00ffa1"/><stop offset="0.1875" stop-color="#03ffc2"/><stop offset="0.225" stop-color="#31ffcc"/><stop offset="0.2656" stop-color="#79ffd8"/><stop offset="0.3031" stop-color="#d2ffe5"/><stop offset="0.3203" stop-color="#fffcea"/><stop offset="0.3453" stop-color="#ffbfba"/><stop offset="0.3781" stop-color="#ff8a90"/><stop offset="0.425" stop-color="#ff5b6a"/><stop offset="0.4922" stop-color="#ff3349"/><stop offset="0.5969" stop-color="#ff132d"/><stop offset="0.7453" stop-color="#ff0019"/><stop offset="0.7469" stop-color="#ff0031"/><stop offset="1" stop-color="#ff0013"/></linearGradient><linearGradient id="g48" gradientUnits="userSpaceOnUse" x1="1040" x2="1677" y1="0" y2="0"><stop offset="0" stop-color="#00ffa6"/><stop offset="0.1868" stop-color="#02ffc9"/><stop offset="0.2229" stop-color="#2effd3"/><stop offset="0.2637" stop-color="#76ffe0"/><stop offset="0.3014" stop-color="#ceffee"/><stop offset="0.3187" stop-color="#fefff6"/><stop offset="0.3438" stop-color="#ffc2c4"/><stop offset="0.3768" stop-color="#ff8c97"/><stop offset="0.4223" stop-color="#ff5c70"/><stop offset="0.4882" stop-color="#ff344e"/><stop offset="0.5903" stop-color="#ff1431"/><stop offset="0.7425" stop-color="#ff001b"/><stop offset="0.7441" stop-color="#ff0034"/><stop offset="1" stop-color="#ff0014"/></linearGradient><linearGradient id="g49" gradientUnits="userSpaceOnUse" x1="1040" x2="1675" y1="0" y2="0"><stop offset="0" stop-color="#00ffab"/><stop offset="0.189" stop-color="#03ffd1"/><stop offset="0.2252" stop-color="#2fffdb"/><stop offset="0.2661" stop-color="#79ffe9"/><stop offset="0.3039" stop-color="#d3fff8"/><stop offset="0.3197" stop-color="#fffeff"/><stop offset="0.3449" stop-color="#ffc1cb"/><stop offset="0.378" stop-color="#ff8b9d"/><stop offset="0.4236" stop-color="#ff5c74"/><stop offset="0.4898" stop-color="#ff3451"/><stop offset="0.5921" stop-color="#ff1433"/><stop offset="0.7417" stop-color="#ff001c"/><stop offset="0.7433" stop-color="#ff0036"/><stop offset="1" stop-color="#ff0016"/></linearGradient><linearGradient id="g50" gradientUnits="userSpaceOnUse" x1="1041" x2="1673" y1="0" y2="0"><stop offset="0" stop-color="#00ffb0"/><stop offset="0.1867" stop-color="#01ffd7"/><stop offset="0.2215" stop-color="#2affe2"/><stop offset="0.2627" stop-color="#72fff1"/><stop offset="0.3038" stop-color="#d0fcff"/><stop offset="0.3244" stop-color="#fff0fd"/><stop offset="0.3497" stop-color="#ffb6ca"/><stop offset="0.3845" stop-color="#ff829b"/><stop offset="0.4335" stop-color="#ff5372"/><stop offset="0.5047" stop-color="#ff2d4e"/><stop offset="0.6171" stop-color="#ff0e30"/><stop offset="0.7405" stop-color="#ff001e"/><stop offset="0.7421" stop-color="#ff0038"/><stop offset="1" stop-color="#ff0017"/></linearGradient><linearGradient id="g51" gradientUnits="userSpaceOnUse" x1="1042" x2="1671" y1="0" y2="0"><stop offset="0" stop-color="#00ffb6"/><stop offset="0.1812" stop-color="#00ffdd"/><stop offset="0.2003" stop-color="#0effe3"/><stop offset="0.2401" stop-color="#48fff1"/><stop offset="0.283" stop-color="#9dfbff"/><stop offset="0.3275" stop-color="#ffe7fe"/><stop offset="0.3545" stop-color="#ffadca"/><stop offset="0.3911" stop-color="#ff799a"/><stop offset="0.4436" stop-color="#ff4c70"/><stop offset="0.5215" stop-color="#ff264b"/><stop offset="0.6439" stop-color="#ff0a2d"/><stop offset="0.7393" stop-color="#ff0020"/><stop offset="0.7409" stop-color="#ff003a"/><stop offset="1" stop-color="#ff0019"/></linearGradient><linearGradient id="g52" gradientUnits="userSpaceOnUse" x1="1042" x2="1669" y1="0" y2="0"><stop offset="0" stop-color="#00ffbb"/><stop offset="0.177" stop-color="#00ffe3"/><stop offset="0.193" stop-color="#05ffe8"/><stop offset="0.2297" stop-color="#35fff5"/><stop offset="0.2632" stop-color="#70fbff"/><stop offset="0.3206" stop-color="#e5e2ff"/><stop offset="0.3333" stop-color="#ffdafc"/><stop offset="0.362" stop-color="#ffa1c6"/><stop offset="0.4019" stop-color="#ff6e96"/><stop offset="0.4577" stop-color="#ff436c"/><stop offset="0.5423" stop-color="#ff2047"/><stop offset="0.6762" stop-color="#ff052a"/><stop offset="0.7368" stop-color="#ff0022"/><stop offset="0.7384" stop-color="#ff003d"/><stop offset="1" stop-color="#ff001a"/></linearGradient><linearGradient id="g53" gradientUnits="userSpaceOnUse" x1="1043" x2="1667" y1="0" y2="0"><stop offset="0" stop-color="#00ffc1"/><stop offset="0.1731" stop-color="#00ffea"/><stop offset="0.1907" stop-color="#03fff0"/><stop offset="0.2276" stop-color="#31fffd"/><stop offset="0.2853" stop-color="#95e9ff"/><stop offset="0.3365" stop-color="#ffd1fd"/><stop offset="0.367" stop-color="#ff98c6"/><stop offset="0.4087" stop-color="#ff6794"/><stop offset="0.4679" stop-color="#ff3d6a"/><stop offset="0.5577" stop-color="#ff1b45"/><stop offset="0.7003" stop-color="#ff0328"/><stop offset="0.7356" stop-color="#ff0024"/><stop offset="0.7372" stop-color="#ff003f"/><stop offset="0.9936" stop-color="#ff001d"/><stop offset="1" stop-color="#ff001c"/></linearGradient><linearGradient id="g54" gradientUnits="userSpaceOnUse" x1="1044" x2="1665" y1="0" y2="0"><stop offset="0" stop-color="#00ffc6"/><stop offset="0.1707" stop-color="#00fff1"/><stop offset="0.1916" stop-color="#04fff8"/><stop offset="0.2222" stop-color="#29faff"/><stop offset="0.2786" stop-color="#84e3ff"/><stop offset="0.3398" stop-color="#ffc9ff"/><stop offset="0.3704" stop-color="#ff93c8"/><stop offset="0.4122" stop-color="#ff6396"/><stop offset="0.4734" stop-color="#ff3a6b"/><stop offset="0.5668" stop-color="#ff1846"/><stop offset="0.7134" stop-color="#ff0128"/><stop offset="0.7343" stop-color="#ff0025"/><stop offset="0.7359" stop-color="#ff0041"/><stop offset="0.9887" stop-color="#ff001f"/><stop offset="1" stop-color="#ff001d"/></linearGradient><linearGradient id="g55" gradientUnits="userSpaceOnUse" x1="1044" x2="1663" y1="0" y2="0"><stop offset="0" stop-color="#00ffcc"/><stop offset="0.1664" stop-color="#00fff7"/><stop offset="0.1922" stop-color="#03feff"/><stop offset="0.2359" stop-color="#39edff"/><stop offset="0.294" stop-color="#9ad6ff"/><stop offset="0.3457" stop-color="#ffbefc"/><stop offset="0.378" stop-color="#ff89c5"/><stop offset="0.4233" stop-color="#ff5a92"/><stop offset="0.4879" stop-color="#ff3367"/><stop offset="0.588" stop-color="#ff1343"/><stop offset="0.7334" stop-color="#ff0027"/><stop offset="0.7351" stop-color="#ff0044"/><stop offset="0.9838" stop-color="#ff0021"/><stop offset="1" stop-color="#ff001f"/></linearGradient><linearGradient id="g56" gradientUnits="userSpaceOnUse" x1="1045" x2="1661" y1="0" y2="0"><stop offset="0" stop-color="#00ffd2"/><stop offset="0.164" stop-color="#00fffe"/><stop offset="0.1916" stop-color="#03f6ff"/><stop offset="0.2354" stop-color="#36e5ff"/><stop offset="0.2955" stop-color="#97ceff"/><stop offset="0.349" stop-color="#ffb6fe"/><stop offset="0.3815" stop-color="#ff84c6"/><stop offset="0.4269" stop-color="#ff5694"/><stop offset="0.4919" stop-color="#ff3169"/><stop offset="0.5925" stop-color="#ff1244"/><stop offset="0.7305" stop-color="#ff0029"/><stop offset="0.7321" stop-color="#ff0046"/><stop offset="0.9756" stop-color="#ff0023"/><stop offset="1" stop-color="#ff0021"/></linearGradient><linearGradient id="g57" gradientUnits="userSpaceOnUse" x1="1046" x2="1659" y1="0" y2="0"><stop offset="0" stop-color="#00ffd8"/><stop offset="0.1517" stop-color="#00fcff"/><stop offset="0.1925" stop-color="#03edff"/><stop offset="0.2382" stop-color="#38ddff"/><stop offset="0.3002" stop-color="#9bc5ff"/><stop offset="0.3524" stop-color="#ffafff"/><stop offset="0.385" stop-color="#ff7ec8"/><stop offset="0.4307" stop-color="#ff5396"/><stop offset="0.4959" stop-color="#ff2e6b"/><stop offset="0.5971" stop-color="#ff1145"/><stop offset="0.7292" stop-color="#ff002b"/><stop offset="0.7308" stop-color="#ff0049"/><stop offset="0.969" stop-color="#ff0025"/><stop offset="1" stop-color="#ff0022"/></linearGradient><linearGradient id="g58" gradientUnits="userSpaceOnUse" x1="1047" x2="1657" y1="0" y2="0"><stop offset="0" stop-color="#00ffde"/><stop offset="0.1279" stop-color="#00fcff"/><stop offset="0.1918" stop-color="#02e6ff"/><stop offset="0.2377" stop-color="#36d6ff"/><stop offset="0.3" stop-color="#96beff"/><stop offset="0.3574" stop-color="#ffa5fd"/><stop offset="0.3918" stop-color="#ff76c5"/><stop offset="0.4393" stop-color="#ff4c94"/><stop offset="0.5082" stop-color="#ff2968"/><stop offset="0.6148" stop-color="#ff0d43"/><stop offset="0.7279" stop-color="#ff002d"/><stop offset="0.7295" stop-color="#ff004b"/><stop offset="0.9656" stop-color="#ff0027"/><stop offset="1" stop-color="#ff0024"/></linearGradient><linearGradient id="g59" gradientUnits="userSpaceOnUse" x1="1047" x2="1655" y1="0" y2="0"><stop offset="0" stop-color="#00ffe4"/><stop offset="0.1069" stop-color="#00fcff"/><stop offset="0.1941" stop-color="#03dfff"/><stop offset="0.2418" stop-color="#38ceff"/><stop offset="0.3059" stop-color="#99b6ff"/><stop offset="0.3618" stop-color="#ff9ffe"/><stop offset="0.3964" stop-color="#ff71c7"/><stop offset="0.4441" stop-color="#ff4995"/><stop offset="0.5132" stop-color="#ff276a"/><stop offset="0.6201" stop-color="#ff0c45"/><stop offset="0.7253" stop-color="#ff0030"/><stop offset="0.727" stop-color="#ff004e"/><stop offset="0.9572" stop-color="#ff002a"/><stop offset="1" stop-color="#ff0025"/></linearGradient><linearGradient id="g60" gradientUnits="userSpaceOnUse" x1="1048" x2="1653" y1="0" y2="0"><stop offset="0" stop-color="#00ffea"/><stop offset="0.0843" stop-color="#00fcff"/><stop offset="0.1934" stop-color="#02d8ff"/><stop offset="0.2413" stop-color="#36c7ff"/><stop offset="0.3074" stop-color="#97afff"/><stop offset="0.3669" stop-color="#ff96fc"/><stop offset="0.4033" stop-color="#ff69c4"/><stop offset="0.4529" stop-color="#ff4393"/><stop offset="0.5256" stop-color="#ff2368"/><stop offset="0.638" stop-color="#ff0943"/><stop offset="0.724" stop-color="#ff0032"/><stop offset="0.7256" stop-color="#ff0050"/><stop offset="0.9521" stop-color="#ff002c"/><stop offset="1" stop-color="#ff0027"/></linearGradient><linearGradient id="g61" gradientUnits="userSpaceOnUse" x1="1049" x2="1651" y1="0" y2="0"><stop offset="0" stop-color="#00fff1"/><stop offset="0.06146" stop-color="#00fcff"/><stop offset="0.1944" stop-color="#03d1ff"/><stop offset="0.2442" stop-color="#38c0ff"/><stop offset="0.3123" stop-color="#9ba7ff"/><stop offset="0.3704" stop-color="#ff90fd"/><stop offset="0.407" stop-color="#ff65c6"/><stop offset="0.4585" stop-color="#ff3f93"/><stop offset="0.5316" stop-color="#ff2068"/><stop offset="0.6445" stop-color="#ff0844"/><stop offset="0.7226" stop-color="#ff0034"/><stop offset="0.7243" stop-color="#ff0052"/><stop offset="0.9468" stop-color="#ff002e"/><stop offset="1" stop-color="#ff0028"/></linearGradient><linearGradient id="g62" gradientUnits="userSpaceOnUse" x1="1049" x2="1649" y1="0" y2="0"><stop offset="0" stop-color="#00fff7"/><stop offset="0.04333" stop-color="#00faff"/><stop offset="0.195" stop-color="#02cbff"/><stop offset="0.245" stop-color="#36baff"/><stop offset="0.3133" stop-color="#96a2ff"/><stop offset="0.375" stop-color="#ff8afe"/><stop offset="0.4133" stop-color="#ff60c5"/><stop offset="0.465" stop-color="#ff3c94"/><stop offset="0.54" stop-color="#ff1e68"/><stop offset="0.655" stop-color="#ff0644"/><stop offset="0.7217" stop-color="#ff0036"/><stop offset="0.7233" stop-color="#ff0055"/><stop offset="0.9433" stop-color="#ff0030"/><stop offset="1" stop-color="#ff002a"/></linearGradient><linearGradient id="g63" gradientUnits="userSpaceOnUse" x1="1050" x2="1647" y1="0" y2="0"><stop offset="0" stop-color="#00fffe"/><stop offset="0.196" stop-color="#03c4ff"/><stop offset="0.2479" stop-color="#38b3ff"/><stop offset="0.3183" stop-color="#999aff"/><stop offset="0.3802" stop-color="#ff82fc"/><stop offset="0.4188" stop-color="#ff5ac5"/><stop offset="0.4724" stop-color="#ff3793"/><stop offset="0.5494" stop-color="#ff1b68"/><stop offset="0.6683" stop-color="#ff0443"/><stop offset="0.7186" stop-color="#ff0039"/><stop offset="0.7203" stop-color="#ff0058"/><stop offset="0.9347" stop-color="#ff0033"/><stop offset="1" stop-color="#ff002b"/></linearGradient><linearGradient id="g64" gradientUnits="userSpaceOnUse" x1="1051" x2="1645" y1="0" y2="0"><stop offset="0" stop-color="#00f9ff"/><stop offset="0.1953" stop-color="#02bfff"/><stop offset="0.2475" stop-color="#36aeff"/><stop offset="0.3199" stop-color="#9895ff"/><stop offset="0.3838" stop-color="#ff7dfe"/><stop offset="0.4226" stop-color="#ff57c6"/><stop offset="0.4764" stop-color="#ff3595"/><stop offset="0.5539" stop-color="#ff1969"/><stop offset="0.6734" stop-color="#ff0444"/><stop offset="0.7172" stop-color="#ff003b"/><stop offset="0.7189" stop-color="#ff005a"/><stop offset="0.931" stop-color="#ff0035"/><stop offset="1" stop-color="#ff002d"/></linearGradient><linearGradient id="g65" gradientUnits="userSpaceOnUse" x1="1052" x2="1644" y1="0" y2="0"><stop offset="0" stop-color="#00f3ff"/><stop offset="0.1959" stop-color="#03b9ff"/><stop offset="0.25" stop-color="#38a7ff"/><stop offset="0.3226" stop-color="#988fff"/><stop offset="0.3868" stop-color="#ff78ff"/><stop offset="0.4274" stop-color="#ff52c6"/><stop offset="0.4831" stop-color="#ff3194"/><stop offset="0.5642" stop-color="#ff1668"/><stop offset="0.6875" stop-color="#ff0243"/><stop offset="0.7145" stop-color="#ff003e"/><stop offset="0.7162" stop-color="#ff005d"/><stop offset="0.924" stop-color="#ff0037"/><stop offset="1" stop-color="#ff002e"/></linearGradient><linearGradient id="g66" gradientUnits="userSpaceOnUse" x1="1052" x2="1642" y1="0" y2="0"><stop offset="0" stop-color="#00edff"/><stop offset="0.1966" stop-color="#02b4ff"/><stop offset="0.2508" stop-color="#36a2ff"/><stop offset="0.3254" stop-color="#968aff"/><stop offset="0.3932" stop-color="#ff71fd"/><stop offset="0.4339" stop-color="#ff4dc5"/><stop offset="0.4898" stop-color="#ff2e94"/><stop offset="0.5712" stop-color="#ff1469"/><stop offset="0.6966" stop-color="#ff0144"/><stop offset="0.7136" stop-color="#ff0040"/><stop offset="0.7153" stop-color="#ff005f"/><stop offset="0.9203" stop-color="#ff003a"/><stop offset="1" stop-color="#ff0030"/></linearGradient><linearGradient id="g67" gradientUnits="userSpaceOnUse" x1="1053" x2="1640" y1="0" y2="0"><stop offset="0" stop-color="#00e7ff"/><stop offset="0.1976" stop-color="#03aeff"/><stop offset="0.2538" stop-color="#379cff"/><stop offset="0.3305" stop-color="#9983ff"/><stop offset="0.3969" stop-color="#ff6cfe"/><stop offset="0.4395" stop-color="#ff49c5"/><stop offset="0.4974" stop-color="#ff2a93"/><stop offset="0.5809" stop-color="#ff1168"/><stop offset="0.7104" stop-color="#ff0043"/><stop offset="0.7121" stop-color="#ff0063"/><stop offset="0.9131" stop-color="#ff003c"/><stop offset="1" stop-color="#ff0031"/></linearGradient><linearGradient id="g68" gradientUnits="userSpaceOnUse" x1="1054" x2="1638" y1="0" y2="0"><stop offset="0" stop-color="#00e1ff"/><stop offset="0.1969" stop-color="#02a9ff"/><stop offset="0.2534" stop-color="#3698ff"/><stop offset="0.3305" stop-color="#957fff"/><stop offset="0.4024" stop-color="#ff66fc"/><stop offset="0.4452" stop-color="#ff44c4"/><stop offset="0.5051" stop-color="#ff2792"/><stop offset="0.5908" stop-color="#ff0f67"/><stop offset="0.7089" stop-color="#ff0046"/><stop offset="0.7106" stop-color="#ff0065"/><stop offset="0.9092" stop-color="#ff003f"/><stop offset="1" stop-color="#ff0033"/></linearGradient><linearGradient id="g69" gradientUnits="userSpaceOnUse" x1="1055" x2="1636" y1="0" y2="0"><stop offset="0" stop-color="#00dbff"/><stop offset="0.1979" stop-color="#03a4ff"/><stop offset="0.2565" stop-color="#3792ff"/><stop offset="0.3356" stop-color="#987aff"/><stop offset="0.4062" stop-color="#ff62fd"/><stop offset="0.4492" stop-color="#ff41c6"/><stop offset="0.5095" stop-color="#ff2594"/><stop offset="0.5972" stop-color="#ff0e68"/><stop offset="0.7074" stop-color="#ff0048"/><stop offset="0.7091" stop-color="#ff0068"/><stop offset="0.9036" stop-color="#ff0041"/><stop offset="1" stop-color="#ff0035"/></linearGradient><linearGradient id="g70" gradientUnits="userSpaceOnUse" x1="1056" x2="1634" y1="0" y2="0"><stop offset="0" stop-color="#00d5ff"/><stop offset="0.1972" stop-color="#029fff"/><stop offset="0.2561" stop-color="#358eff"/><stop offset="0.3374" stop-color="#9775ff"/><stop offset="0.41" stop-color="#ff5efe"/><stop offset="0.455" stop-color="#ff3dc5"/><stop offset="0.5173" stop-color="#ff2293"/><stop offset="0.6073" stop-color="#ff0c67"/><stop offset="0.7042" stop-color="#ff004b"/><stop offset="0.7059" stop-color="#ff006b"/><stop offset="0.8962" stop-color="#ff0044"/><stop offset="1" stop-color="#ff0036"/></linearGradient><linearGradient id="g71" gradientUnits="userSpaceOnUse" x1="1056" x2="1632" y1="0" y2="0"><stop offset="0" stop-color="#00d0ff"/><stop offset="0.1997" stop-color="#039bff"/><stop offset="0.2604" stop-color="#3789ff"/><stop offset="0.3438" stop-color="#9970ff"/><stop offset="0.4167" stop-color="#ff58fc"/><stop offset="0.4618" stop-color="#ff39c5"/><stop offset="0.5243" stop-color="#ff1f93"/><stop offset="0.6146" stop-color="#ff0a68"/><stop offset="0.7031" stop-color="#ff004e"/><stop offset="0.7049" stop-color="#ff006e"/><stop offset="0.8924" stop-color="#ff0047"/><stop offset="1" stop-color="#ff0038"/></linearGradient><linearGradient id="g72" gradientUnits="userSpaceOnUse" x1="1057" x2="1630" y1="0" y2="0"><stop offset="0" stop-color="#00cbff"/><stop offset="0.199" stop-color="#0296ff"/><stop offset="0.26" stop-color="#3585ff"/><stop offset="0.3438" stop-color="#956cff"/><stop offset="0.4206" stop-color="#ff54fd"/><stop offset="0.4677" stop-color="#ff36c4"/><stop offset="0.5323" stop-color="#ff1c93"/><stop offset="0.6248" stop-color="#ff0868"/><stop offset="0.7016" stop-color="#ff0051"/><stop offset="0.7033" stop-color="#ff0071"/><stop offset="0.8883" stop-color="#ff0049"/><stop offset="1" stop-color="#ff0039"/></linearGradient><linearGradient id="g73" gradientUnits="userSpaceOnUse" x1="1058" x2="1628" y1="0" y2="0"><stop offset="0" stop-color="#00c6ff"/><stop offset="0.2" stop-color="#0392ff"/><stop offset="0.2632" stop-color="#3780ff"/><stop offset="0.3491" stop-color="#9867ff"/><stop offset="0.4246" stop-color="#ff50fe"/><stop offset="0.4719" stop-color="#ff33c6"/><stop offset="0.5368" stop-color="#ff1b94"/><stop offset="0.6316" stop-color="#ff0768"/><stop offset="0.7" stop-color="#ff0054"/><stop offset="0.7018" stop-color="#ff0073"/><stop offset="0.8842" stop-color="#ff004b"/><stop offset="1" stop-color="#ff003b"/></linearGradient><linearGradient id="g74" gradientUnits="userSpaceOnUse" x1="1059" x2="1626" y1="0" y2="0"><stop offset="0" stop-color="#00c1ff"/><stop offset="0.1993" stop-color="#028eff"/><stop offset="0.2628" stop-color="#357cff"/><stop offset="0.351" stop-color="#9763ff"/><stop offset="0.4303" stop-color="#ff4bfd"/><stop offset="0.478" stop-color="#ff30c5"/><stop offset="0.545" stop-color="#ff1893"/><stop offset="0.642" stop-color="#ff0568"/><stop offset="0.6966" stop-color="#ff0057"/><stop offset="0.6984" stop-color="#ff0077"/><stop offset="0.8783" stop-color="#ff004e"/><stop offset="1" stop-color="#ff003d"/></linearGradient><linearGradient id="g75" gradientUnits="userSpaceOnUse" x1="1060" x2="1624" y1="0" y2="0"><stop offset="0" stop-color="#00bcff"/><stop offset="0.2004" stop-color="#038aff"/><stop offset="0.266" stop-color="#3778ff"/><stop offset="0.3564" stop-color="#995fff"/><stop offset="0.4344" stop-color="#ff48fe"/><stop offset="0.484" stop-color="#ff2cc5"/><stop offset="0.5514" stop-color="#ff1694"/><stop offset="0.6489" stop-color="#ff0468"/><stop offset="0.695" stop-color="#ff005a"/><stop offset="0.6968" stop-color="#ff007a"/><stop offset="0.8741" stop-color="#ff0051"/><stop offset="1" stop-color="#ff003e"/></linearGradient><linearGradient id="g76" gradientUnits="userSpaceOnUse" x1="1060" x2="1622" y1="0" y2="0"><stop offset="0" stop-color="#00b8ff"/><stop offset="0.2028" stop-color="#0386ff"/><stop offset="0.2705" stop-color="#3974ff"/><stop offset="0.3612" stop-color="#9a5bff"/><stop offset="0.4413" stop-color="#ff43fc"/><stop offset="0.4911" stop-color="#ff29c5"/><stop offset="0.5605" stop-color="#ff1393"/><stop offset="0.6619" stop-color="#ff0367"/><stop offset="0.694" stop-color="#ff005d"/><stop offset="0.6957" stop-color="#ff007d"/><stop offset="0.8701" stop-color="#ff0054"/><stop offset="1" stop-color="#ff0040"/></linearGradient><linearGradient id="g77" gradientUnits="userSpaceOnUse" x1="1061" x2="1620" y1="0" y2="0"><stop offset="0" stop-color="#00b4ff"/><stop offset="0.2021" stop-color="#0382ff"/><stop offset="0.2701" stop-color="#3770ff"/><stop offset="0.3631" stop-color="#9857ff"/><stop offset="0.4454" stop-color="#ff40fd"/><stop offset="0.4973" stop-color="#ff26c4"/><stop offset="0.5689" stop-color="#ff1192"/><stop offset="0.6726" stop-color="#ff0167"/><stop offset="0.6923" stop-color="#ff0061"/><stop offset="0.6941" stop-color="#ff0080"/><stop offset="0.8658" stop-color="#ff0056"/><stop offset="1" stop-color="#ff0042"/></linearGradient><linearGradient id="g78" gradientUnits="userSpaceOnUse" x1="1062" x2="1618" y1="0" y2="0"><stop offset="0" stop-color="#00afff"/><stop offset="0.2032" stop-color="#037eff"/><stop offset="0.2734" stop-color="#386cff"/><stop offset="0.3687" stop-color="#9b53ff"/><stop offset="0.4496" stop-color="#ff3dfe"/><stop offset="0.5018" stop-color="#ff24c5"/><stop offset="0.5737" stop-color="#ff1093"/><stop offset="0.6781" stop-color="#ff0168"/><stop offset="0.6888" stop-color="#ff0064"/><stop offset="0.6906" stop-color="#ff0083"/><stop offset="0.8579" stop-color="#ff005a"/><stop offset="1" stop-color="#ff0043"/></linearGradient><linearGradient id="g79" gradientUnits="userSpaceOnUse" x1="1063" x2="1616" y1="0" y2="0"><stop offset="0" stop-color="#00abff"/><stop offset="0.2025" stop-color="#037bff"/><stop offset="0.2731" stop-color="#3769ff"/><stop offset="0.3689" stop-color="#9750ff"/><stop offset="0.4557" stop-color="#ff39fc"/><stop offset="0.5081" stop-color="#ff21c5"/><stop offset="0.5823" stop-color="#ff0e93"/><stop offset="0.6872" stop-color="#ff0068"/><stop offset="0.689" stop-color="#ff0086"/><stop offset="0.8535" stop-color="#ff005c"/><stop offset="1" stop-color="#ff0045"/></linearGradient><linearGradient id="g80" gradientUnits="userSpaceOnUse" x1="1064" x2="1614" y1="0" y2="0"><stop offset="0" stop-color="#00a7ff"/><stop offset="0.2036" stop-color="#0377ff"/><stop offset="0.2764" stop-color="#3865ff"/><stop offset="0.3745" stop-color="#9a4cff"/><stop offset="0.46" stop-color="#ff36fd"/><stop offset="0.5145" stop-color="#ff1fc5"/><stop offset="0.5891" stop-color="#ff0c93"/><stop offset="0.6855" stop-color="#ff006b"/><stop offset="0.6873" stop-color="#ff008a"/><stop offset="0.8509" stop-color="#ff005f"/><stop offset="1" stop-color="#ff0047"/></linearGradient><linearGradient id="g81" gradientUnits="userSpaceOnUse" x1="1065" x2="1612" y1="0" y2="0"><stop offset="0" stop-color="#00a3ff"/><stop offset="0.2029" stop-color="#0374ff"/><stop offset="0.2761" stop-color="#3762ff"/><stop offset="0.3766" stop-color="#9849ff"/><stop offset="0.4644" stop-color="#ff33fe"/><stop offset="0.5192" stop-color="#ff1dc6"/><stop offset="0.5941" stop-color="#ff0b94"/><stop offset="0.6837" stop-color="#ff006f"/><stop offset="0.6856" stop-color="#ff008d"/><stop offset="0.8464" stop-color="#ff0062"/><stop offset="1" stop-color="#ff0048"/></linearGradient><linearGradient id="g82" gradientUnits="userSpaceOnUse" x1="1066" x2="1610" y1="0" y2="0"><stop offset="0" stop-color="#009fff"/><stop offset="0.204" stop-color="#0371ff"/><stop offset="0.2794" stop-color="#385fff"/><stop offset="0.3824" stop-color="#9b46ff"/><stop offset="0.4706" stop-color="#ff2ffd"/><stop offset="0.5276" stop-color="#ff1ac4"/><stop offset="0.6066" stop-color="#ff0892"/><stop offset="0.6801" stop-color="#ff0073"/><stop offset="0.682" stop-color="#ff0091"/><stop offset="0.8401" stop-color="#ff0065"/><stop offset="1" stop-color="#ff004a"/></linearGradient><linearGradient id="g83" gradientUnits="userSpaceOnUse" x1="1066" x2="1608" y1="0" y2="0"><stop offset="0" stop-color="#009bff"/><stop offset="0.2048" stop-color="#026eff"/><stop offset="0.2804" stop-color="#365cff"/><stop offset="0.3838" stop-color="#9743ff"/><stop offset="0.476" stop-color="#ff2dfd"/><stop offset="0.5332" stop-color="#ff18c5"/><stop offset="0.6125" stop-color="#ff0793"/><stop offset="0.679" stop-color="#ff0077"/><stop offset="0.6808" stop-color="#ff0094"/><stop offset="0.8358" stop-color="#ff0068"/><stop offset="1" stop-color="#ff004c"/></linearGradient><linearGradient id="g84" gradientUnits="userSpaceOnUse" x1="1067" x2="1607" y1="0" y2="0"><stop offset="0" stop-color="#0098ff"/><stop offset="0.2056" stop-color="#036bff"/><stop offset="0.2833" stop-color="#3859ff"/><stop offset="0.3889" stop-color="#9a40ff"/><stop offset="0.4815" stop-color="#ff29fc"/><stop offset="0.5407" stop-color="#ff15c3"/><stop offset="0.6222" stop-color="#ff0591"/><stop offset="0.6759" stop-color="#ff007b"/><stop offset="0.6778" stop-color="#ff0097"/><stop offset="0.8296" stop-color="#ff006b"/><stop offset="1" stop-color="#ff004d"/></linearGradient><linearGradient id="g85" gradientUnits="userSpaceOnUse" x1="1068" x2="1605" y1="0" y2="0"><stop offset="0" stop-color="#0094ff"/><stop offset="0.2048" stop-color="#0268ff"/><stop offset="0.2831" stop-color="#3656ff"/><stop offset="0.3911" stop-color="#983dff"/><stop offset="0.486" stop-color="#ff27fd"/><stop offset="0.5456" stop-color="#ff14c4"/><stop offset="0.6276" stop-color="#ff0493"/><stop offset="0.6723" stop-color="#ff007f"/><stop offset="0.6741" stop-color="#ff009b"/><stop offset="0.8231" stop-color="#ff006f"/><stop offset="1" stop-color="#ff004f"/></linearGradient><linearGradient id="g86" gradientUnits="userSpaceOnUse" x1="1069" x2="1603" y1="0" y2="0"><stop offset="0" stop-color="#0090ff"/><stop offset="0.206" stop-color="#0365ff"/><stop offset="0.2865" stop-color="#3853ff"/><stop offset="0.3951" stop-color="#993aff"/><stop offset="0.4906" stop-color="#ff24fe"/><stop offset="0.5506" stop-color="#ff12c5"/><stop offset="0.633" stop-color="#ff0494"/><stop offset="0.6704" stop-color="#ff0083"/><stop offset="0.6723" stop-color="#ff009f"/><stop offset="0.8184" stop-color="#ff0072"/><stop offset="1" stop-color="#ff0051"/></linearGradient><linearGradient id="g87" gradientUnits="userSpaceOnUse" x1="1070" x2="1601" y1="0" y2="0"><stop offset="0" stop-color="#008dff"/><stop offset="0.2053" stop-color="#0262ff"/><stop offset="0.2863" stop-color="#3651ff"/><stop offset="0.3974" stop-color="#9838ff"/><stop offset="0.4972" stop-color="#ff21fc"/><stop offset="0.5593" stop-color="#ff10c4"/><stop offset="0.6441" stop-color="#ff0292"/><stop offset="0.6685" stop-color="#ff0088"/><stop offset="0.6704" stop-color="#ff00a2"/><stop offset="0.8154" stop-color="#ff0075"/><stop offset="1" stop-color="#ff0053"/></linearGradient><linearGradient id="g88" gradientUnits="userSpaceOnUse" x1="1071" x2="1599" y1="0" y2="0"><stop offset="0" stop-color="#008aff"/><stop offset="0.2064" stop-color="#035fff"/><stop offset="0.2898" stop-color="#384dff"/><stop offset="0.4034" stop-color="#9a35ff"/><stop offset="0.5019" stop-color="#ff1ffd"/><stop offset="0.5644" stop-color="#ff0ec5"/><stop offset="0.6515" stop-color="#ff0192"/><stop offset="0.6667" stop-color="#ff008c"/><stop offset="0.6686" stop-color="#ff00a6"/><stop offset="0.8106" stop-color="#ff0078"/><stop offset="1" stop-color="#ff0054"/></linearGradient><linearGradient id="g89" gradientUnits="userSpaceOnUse" x1="1072" x2="1597" y1="0" y2="0"><stop offset="0" stop-color="#0086ff"/><stop offset="0.2057" stop-color="#025dff"/><stop offset="0.2895" stop-color="#364bff"/><stop offset="0.4038" stop-color="#9733ff"/><stop offset="0.5067" stop-color="#ff1dfe"/><stop offset="0.5695" stop-color="#ff0dc6"/><stop offset="0.6571" stop-color="#ff0094"/><stop offset="0.6629" stop-color="#ff0091"/><stop offset="0.6648" stop-color="#ff00aa"/><stop offset="0.8038" stop-color="#ff007c"/><stop offset="1" stop-color="#ff0056"/></linearGradient><linearGradient id="g90" gradientUnits="userSpaceOnUse" x1="1073" x2="1595" y1="0" y2="0"><stop offset="0" stop-color="#0083ff"/><stop offset="0.2069" stop-color="#035aff"/><stop offset="0.2931" stop-color="#3748ff"/><stop offset="0.41" stop-color="#9930ff"/><stop offset="0.5134" stop-color="#ff1afd"/><stop offset="0.5785" stop-color="#ff0bc4"/><stop offset="0.6609" stop-color="#ff0096"/><stop offset="0.6628" stop-color="#ff00ae"/><stop offset="0.8008" stop-color="#ff007f"/><stop offset="1" stop-color="#ff0058"/></linearGradient><linearGradient id="g91" gradientUnits="userSpaceOnUse" x1="1074" x2="1593" y1="0" y2="0"><stop offset="0" stop-color="#0080ff"/><stop offset="0.2062" stop-color="#0258ff"/><stop offset="0.2929" stop-color="#3646ff"/><stop offset="0.4123" stop-color="#982eff"/><stop offset="0.5183" stop-color="#ff18fd"/><stop offset="0.5838" stop-color="#ff09c5"/><stop offset="0.659" stop-color="#ff009a"/><stop offset="0.6609" stop-color="#ff00b2"/><stop offset="0.7958" stop-color="#ff0083"/><stop offset="1" stop-color="#ff005a"/></linearGradient><linearGradient id="g92" gradientUnits="userSpaceOnUse" x1="1075" x2="1591" y1="0" y2="0"><stop offset="0" stop-color="#007dff"/><stop offset="0.2074" stop-color="#0355ff"/><stop offset="0.2965" stop-color="#3744ff"/><stop offset="0.4186" stop-color="#9a2bff"/><stop offset="0.5252" stop-color="#ff16fc"/><stop offset="0.593" stop-color="#ff07c3"/><stop offset="0.657" stop-color="#ff009f"/><stop offset="0.6589" stop-color="#ff00b6"/><stop offset="0.7926" stop-color="#ff0086"/><stop offset="0.9961" stop-color="#ff005c"/><stop offset="1" stop-color="#ff005c"/></linearGradient><linearGradient id="g93" gradientUnits="userSpaceOnUse" x1="1075" x2="1589" y1="0" y2="0"><stop offset="0" stop-color="#007aff"/><stop offset="0.2101" stop-color="#0353ff"/><stop offset="0.3016" stop-color="#3941ff"/><stop offset="0.4261" stop-color="#9c28ff"/><stop offset="0.5311" stop-color="#ff14fd"/><stop offset="0.5992" stop-color="#ff06c4"/><stop offset="0.6537" stop-color="#ff00a5"/><stop offset="0.6556" stop-color="#ff00ba"/><stop offset="0.786" stop-color="#ff008b"/><stop offset="0.9844" stop-color="#ff0060"/><stop offset="1" stop-color="#ff005e"/></linearGradient><linearGradient id="g94" gradientUnits="userSpaceOnUse" x1="1076" x2="1587" y1="0" y2="0"><stop offset="0" stop-color="#0077ff"/><stop offset="0.2094" stop-color="#0351ff"/><stop offset="0.3014" stop-color="#373fff"/><stop offset="0.4266" stop-color="#9927ff"/><stop offset="0.5362" stop-color="#ff12fe"/><stop offset="0.6047" stop-color="#ff05c5"/><stop offset="0.6517" stop-color="#ff00aa"/><stop offset="0.6536" stop-color="#ff00be"/><stop offset="0.7828" stop-color="#ff008e"/><stop offset="0.9785" stop-color="#ff0063"/><stop offset="1" stop-color="#ff005f"/></linearGradient><linearGradient id="g95" gradientUnits="userSpaceOnUse" x1="1077" x2="1585" y1="0" y2="0"><stop offset="0" stop-color="#0075ff"/><stop offset="0.2106" stop-color="#034eff"/><stop offset="0.3051" stop-color="#393cff"/><stop offset="0.4331" stop-color="#9b24ff"/><stop offset="0.5433" stop-color="#ff10fc"/><stop offset="0.6142" stop-color="#ff03c4"/><stop offset="0.6496" stop-color="#ff00af"/><stop offset="0.6516" stop-color="#ff00c2"/><stop offset="0.7776" stop-color="#ff0092"/><stop offset="0.9685" stop-color="#ff0067"/><stop offset="1" stop-color="#ff0061"/></linearGradient><linearGradient id="g96" gradientUnits="userSpaceOnUse" x1="1078" x2="1583" y1="0" y2="0"><stop offset="0" stop-color="#0072ff"/><stop offset="0.2099" stop-color="#034cff"/><stop offset="0.305" stop-color="#373bff"/><stop offset="0.4356" stop-color="#9a23ff"/><stop offset="0.5485" stop-color="#ff0efd"/><stop offset="0.6198" stop-color="#ff02c5"/><stop offset="0.6455" stop-color="#ff00b5"/><stop offset="0.6475" stop-color="#ff00c8"/><stop offset="0.7703" stop-color="#ff0097"/><stop offset="0.9545" stop-color="#ff006b"/><stop offset="1" stop-color="#ff0063"/></linearGradient><linearGradient id="g97" gradientUnits="userSpaceOnUse" x1="1079" x2="1581" y1="0" y2="0"><stop offset="0" stop-color="#006fff"/><stop offset="0.2112" stop-color="#034aff"/><stop offset="0.3088" stop-color="#3838ff"/><stop offset="0.4402" stop-color="#9a20ff"/><stop offset="0.5538" stop-color="#ff0dfe"/><stop offset="0.6255" stop-color="#ff02c6"/><stop offset="0.6434" stop-color="#ff00bb"/><stop offset="0.6454" stop-color="#ff00cc"/><stop offset="0.7669" stop-color="#ff009a"/><stop offset="0.9482" stop-color="#ff006e"/><stop offset="1" stop-color="#ff0065"/></linearGradient><linearGradient id="g98" gradientUnits="userSpaceOnUse" x1="1080" x2="1579" y1="0" y2="0"><stop offset="0" stop-color="#006dff"/><stop offset="0.2104" stop-color="#0348ff"/><stop offset="0.3086" stop-color="#3737ff"/><stop offset="0.4429" stop-color="#991fff"/><stop offset="0.5611" stop-color="#ff0bfd"/><stop offset="0.6353" stop-color="#ff00c4"/><stop offset="0.6413" stop-color="#ff00c1"/><stop offset="0.6433" stop-color="#ff00d0"/><stop offset="0.7635" stop-color="#ff009e"/><stop offset="0.9419" stop-color="#ff0071"/><stop offset="1" stop-color="#ff0067"/></linearGradient><linearGradient id="g99" gradientUnits="userSpaceOnUse" x1="1081" x2="1577" y1="0" y2="0"><stop offset="0" stop-color="#006aff"/><stop offset="0.2117" stop-color="#0346ff"/><stop offset="0.3125" stop-color="#3834ff"/><stop offset="0.4496" stop-color="#9b1dff"/><stop offset="0.5665" stop-color="#ff09fd"/><stop offset="0.6391" stop-color="#ff00c6"/><stop offset="0.6411" stop-color="#ff00d4"/><stop offset="0.7581" stop-color="#ff00a3"/><stop offset="0.9315" stop-color="#ff0076"/><stop offset="1" stop-color="#ff0069"/></linearGradient><linearGradient id="g100" gradientUnits="userSpaceOnUse" x1="1082" x2="1575" y1="0" y2="0"><stop offset="0" stop-color="#0067ff"/><stop offset="0.211" stop-color="#0344ff"/><stop offset="0.3124" stop-color="#3733ff"/><stop offset="0.4503" stop-color="#981bff"/><stop offset="0.574" stop-color="#ff08fc"/><stop offset="0.6349" stop-color="#ff00ce"/><stop offset="0.6369" stop-color="#ff00da"/><stop offset="0.7525" stop-color="#ff00a7"/><stop offset="0.9229" stop-color="#ff0079"/><stop offset="1" stop-color="#ff006b"/></linearGradient><linearGradient id="g101" gradientUnits="userSpaceOnUse" x1="1083" x2="1573" y1="0" y2="0"><stop offset="0" stop-color="#0065ff"/><stop offset="0.2122" stop-color="#0342ff"/><stop offset="0.3163" stop-color="#3831ff"/><stop offset="0.4571" stop-color="#9a19ff"/><stop offset="0.5796" stop-color="#ff06fd"/><stop offset="0.6327" stop-color="#ff00d4"/><stop offset="0.6347" stop-color="#ff00df"/><stop offset="0.7469" stop-color="#ff00ac"/><stop offset="0.9122" stop-color="#ff007e"/><stop offset="1" stop-color="#ff006d"/></linearGradient><linearGradient id="g102" gradientUnits="userSpaceOnUse" x1="1084" x2="1572" y1="0" y2="0"><stop offset="0" stop-color="#0063ff"/><stop offset="0.2111" stop-color="#0340ff"/><stop offset="0.3156" stop-color="#372fff"/><stop offset="0.459" stop-color="#9918ff"/><stop offset="0.584" stop-color="#ff05fd"/><stop offset="0.6291" stop-color="#ff00da"/><stop offset="0.6311" stop-color="#ff00e3"/><stop offset="0.7418" stop-color="#ff00b0"/><stop offset="0.9037" stop-color="#ff0082"/><stop offset="1" stop-color="#ff006f"/></linearGradient><linearGradient id="g103" gradientUnits="userSpaceOnUse" x1="1085" x2="1570" y1="0" y2="0"><stop offset="0" stop-color="#0060ff"/><stop offset="0.2124" stop-color="#033eff"/><stop offset="0.3196" stop-color="#382dff"/><stop offset="0.466" stop-color="#9b16ff"/><stop offset="0.5918" stop-color="#ff04fc"/><stop offset="0.6268" stop-color="#ff00e1"/><stop offset="0.6289" stop-color="#ff00e8"/><stop offset="0.7381" stop-color="#ff00b4"/><stop offset="0.8969" stop-color="#ff0085"/><stop offset="1" stop-color="#ff0071"/></linearGradient><linearGradient id="g104" gradientUnits="userSpaceOnUse" x1="1086" x2="1568" y1="0" y2="0"><stop offset="0" stop-color="#005eff"/><stop offset="0.2116" stop-color="#033dff"/><stop offset="0.3195" stop-color="#372cff"/><stop offset="0.4668" stop-color="#9815ff"/><stop offset="0.5975" stop-color="#ff03fd"/><stop offset="0.6224" stop-color="#ff00e9"/><stop offset="0.6245" stop-color="#ff00ee"/><stop offset="0.7303" stop-color="#ff00ba"/><stop offset="0.8859" stop-color="#ff008a"/><stop offset="1" stop-color="#ff0073"/></linearGradient><linearGradient id="g105" gradientUnits="userSpaceOnUse" x1="1087" x2="1566" y1="0" y2="0"><stop offset="0" stop-color="#005cff"/><stop offset="0.2129" stop-color="#033bff"/><stop offset="0.3236" stop-color="#382aff"/><stop offset="0.4739" stop-color="#9a13ff"/><stop offset="0.6033" stop-color="#ff02fe"/><stop offset="0.62" stop-color="#ff00f0"/><stop offset="0.6263" stop-color="#ff00f1"/><stop offset="0.7328" stop-color="#ff00bc"/><stop offset="0.8873" stop-color="#ff008c"/><stop offset="1" stop-color="#ff0075"/></linearGradient><linearGradient id="g106" gradientUnits="userSpaceOnUse" x1="1088" x2="1564" y1="0" y2="0"><stop offset="0" stop-color="#005aff"/><stop offset="0.2122" stop-color="#0339ff"/><stop offset="0.3235" stop-color="#3728ff"/><stop offset="0.4769" stop-color="#9911ff"/><stop offset="0.6113" stop-color="#ff00fd"/><stop offset="0.7248" stop-color="#ff00c2"/><stop offset="0.8739" stop-color="#ff0092"/><stop offset="1" stop-color="#ff0077"/></linearGradient><linearGradient id="g107" gradientUnits="userSpaceOnUse" x1="1089" x2="1562" y1="0" y2="0"><stop offset="0" stop-color="#0057ff"/><stop offset="0.2135" stop-color="#0338ff"/><stop offset="0.3277" stop-color="#3826ff"/><stop offset="0.482" stop-color="#9910ff"/><stop offset="0.6173" stop-color="#ff00fe"/><stop offset="0.7188" stop-color="#ff00c8"/><stop offset="0.8647" stop-color="#ff0097"/><stop offset="1" stop-color="#ff0079"/></linearGradient><linearGradient id="g108" gradientUnits="userSpaceOnUse" x1="1090" x2="1560" y1="0" y2="0"><stop offset="0" stop-color="#0055ff"/><stop offset="0.2149" stop-color="#0336ff"/><stop offset="0.3319" stop-color="#3925ff"/><stop offset="0.4894" stop-color="#9b0eff"/><stop offset="0.6234" stop-color="#ff00fd"/><stop offset="0.7277" stop-color="#ff00c7"/><stop offset="0.8766" stop-color="#ff0096"/><stop offset="1" stop-color="#ff007b"/></linearGradient><linearGradient id="g109" gradientUnits="userSpaceOnUse" x1="1091" x2="1558" y1="0" y2="0"><stop offset="0" stop-color="#0053ff"/><stop offset="0.2141" stop-color="#0334ff"/><stop offset="0.3319" stop-color="#3823ff"/><stop offset="0.4925" stop-color="#9a0dff"/><stop offset="0.6081" stop-color="#ef00ff"/><stop offset="0.6124" stop-color="#f600ff"/><stop offset="0.6338" stop-color="#ff00fa"/><stop offset="0.7409" stop-color="#ff00c4"/><stop offset="0.8951" stop-color="#ff0094"/><stop offset="1" stop-color="#ff007d"/></linearGradient><linearGradient id="g110" gradientUnits="userSpaceOnUse" x1="1093" x2="1556" y1="0" y2="0"><stop offset="0" stop-color="#0051ff"/><stop offset="0.2138" stop-color="#0333ff"/><stop offset="0.3348" stop-color="#3922ff"/><stop offset="0.4989" stop-color="#9c0bff"/><stop offset="0.6048" stop-color="#e800ff"/><stop offset="0.6069" stop-color="#f000ff"/><stop offset="0.635" stop-color="#ff00fd"/><stop offset="0.743" stop-color="#ff00c6"/><stop offset="0.8985" stop-color="#ff0095"/><stop offset="1" stop-color="#ff007f"/></linearGradient><linearGradient id="g111" gradientUnits="userSpaceOnUse" x1="1094" x2="1554" y1="0" y2="0"><stop offset="0" stop-color="#004fff"/><stop offset="0.213" stop-color="#0331ff"/><stop offset="0.3348" stop-color="#3821ff"/><stop offset="0.5" stop-color="#990bff"/><stop offset="0.6" stop-color="#df00ff"/><stop offset="0.6022" stop-color="#e900ff"/><stop offset="0.6413" stop-color="#ff00fc"/><stop offset="0.75" stop-color="#ff00c6"/><stop offset="0.9065" stop-color="#ff0096"/><stop offset="1" stop-color="#ff0081"/></linearGradient><linearGradient id="g112" gradientUnits="userSpaceOnUse" x1="1095" x2="1552" y1="0" y2="0"><stop offset="0" stop-color="#004dff"/><stop offset="0.2144" stop-color="#0330ff"/><stop offset="0.3392" stop-color="#391fff"/><stop offset="0.5077" stop-color="#9b09ff"/><stop offset="0.5974" stop-color="#d900ff"/><stop offset="0.5996" stop-color="#e400ff"/><stop offset="0.6477" stop-color="#ff00fc"/><stop offset="0.7593" stop-color="#ff00c6"/><stop offset="0.919" stop-color="#ff0095"/><stop offset="1" stop-color="#ff0083"/></linearGradient><linearGradient id="g113" gradientUnits="userSpaceOnUse" x1="1096" x2="1550" y1="0" y2="0"><stop offset="0" stop-color="#004bff"/><stop offset="0.2137" stop-color="#032fff"/><stop offset="0.3392" stop-color="#371eff"/><stop offset="0.511" stop-color="#9a08ff"/><stop offset="0.5947" stop-color="#d200ff"/><stop offset="0.5969" stop-color="#e000ff"/><stop offset="0.6542" stop-color="#ff00fc"/><stop offset="0.7665" stop-color="#ff00c6"/><stop offset="0.9295" stop-color="#ff0095"/><stop offset="1" stop-color="#ff0086"/></linearGradient><linearGradient id="g114" gradientUnits="userSpaceOnUse" x1="1097" x2="1548" y1="0" y2="0"><stop offset="0" stop-color="#0049ff"/><stop offset="0.2151" stop-color="#032dff"/><stop offset="0.3437" stop-color="#391cff"/><stop offset="0.5188" stop-color="#9c07ff"/><stop offset="0.592" stop-color="#cc00ff"/><stop offset="0.5942" stop-color="#db00ff"/><stop offset="0.6585" stop-color="#ff00fd"/><stop offset="0.7716" stop-color="#ff00c7"/><stop offset="0.9357" stop-color="#ff0096"/><stop offset="1" stop-color="#ff0088"/></linearGradient><linearGradient id="g115" gradientUnits="userSpaceOnUse" x1="1098" x2="1546" y1="0" y2="0"><stop offset="0" stop-color="#0048ff"/><stop offset="0.2143" stop-color="#032cff"/><stop offset="0.3438" stop-color="#371bff"/><stop offset="0.5201" stop-color="#9906ff"/><stop offset="0.5871" stop-color="#c400ff"/><stop offset="0.5893" stop-color="#d500ff"/><stop offset="0.6652" stop-color="#ff00fc"/><stop offset="0.7812" stop-color="#ff00c6"/><stop offset="0.9487" stop-color="#ff0095"/><stop offset="1" stop-color="#ff008a"/></linearGradient><linearGradient id="g116" gradientUnits="userSpaceOnUse" x1="1099" x2="1544" y1="0" y2="0"><stop offset="0" stop-color="#0046ff"/><stop offset="0.2157" stop-color="#032aff"/><stop offset="0.3483" stop-color="#381aff"/><stop offset="0.5281" stop-color="#9b05ff"/><stop offset="0.5843" stop-color="#be00ff"/><stop offset="0.5865" stop-color="#d100ff"/><stop offset="0.6719" stop-color="#ff00fc"/><stop offset="0.7888" stop-color="#ff00c6"/><stop offset="0.9573" stop-color="#ff0096"/><stop offset="1" stop-color="#ff008c"/></linearGradient><linearGradient id="g117" gradientUnits="userSpaceOnUse" x1="1100" x2="1542" y1="0" y2="0"><stop offset="0" stop-color="#0044ff"/><stop offset="0.2149" stop-color="#0329ff"/><stop offset="0.3484" stop-color="#3719ff"/><stop offset="0.5317" stop-color="#9a04ff"/><stop offset="0.5814" stop-color="#b900ff"/><stop offset="0.5837" stop-color="#cc00ff"/><stop offset="0.6765" stop-color="#ff00fd"/><stop offset="0.7941" stop-color="#ff00c7"/><stop offset="0.9638" stop-color="#ff0097"/><stop offset="1" stop-color="#ff008f"/></linearGradient><linearGradient id="g118" gradientUnits="userSpaceOnUse" x1="1101" x2="1540" y1="0" y2="0"><stop offset="0" stop-color="#0042ff"/><stop offset="0.2164" stop-color="#0328ff"/><stop offset="0.3531" stop-color="#3817ff"/><stop offset="0.5376" stop-color="#9a03ff"/><stop offset="0.5786" stop-color="#b300ff"/><stop offset="0.5809" stop-color="#c800ff"/><stop offset="0.6834" stop-color="#ff00fd"/><stop offset="0.8041" stop-color="#ff00c7"/><stop offset="0.9772" stop-color="#ff0096"/><stop offset="1" stop-color="#ff0091"/></linearGradient><linearGradient id="g119" gradientUnits="userSpaceOnUse" x1="1103" x2="1538" y1="0" y2="0"><stop offset="0" stop-color="#0040ff"/><stop offset="0.2138" stop-color="#0327ff"/><stop offset="0.3517" stop-color="#3716ff"/><stop offset="0.5402" stop-color="#9902ff"/><stop offset="0.5724" stop-color="#ac00ff"/><stop offset="0.5747" stop-color="#c200ff"/><stop offset="0.6897" stop-color="#ff00fc"/><stop offset="0.8115" stop-color="#ff00c7"/><stop offset="0.9885" stop-color="#ff0096"/><stop offset="1" stop-color="#ff0093"/></linearGradient><linearGradient id="g120" gradientUnits="userSpaceOnUse" x1="1104" x2="1537" y1="0" y2="0"><stop offset="0" stop-color="#003fff"/><stop offset="0.2148" stop-color="#0325ff"/><stop offset="0.3557" stop-color="#3815ff"/><stop offset="0.5473" stop-color="#9b01ff"/><stop offset="0.5681" stop-color="#a700ff"/><stop offset="0.5704" stop-color="#be00ff"/><stop offset="0.6952" stop-color="#ff00fc"/><stop offset="0.8199" stop-color="#ff00c6"/><stop offset="1" stop-color="#ff0095"/></linearGradient><linearGradient id="g121" gradientUnits="userSpaceOnUse" x1="1105" x2="1535" y1="0" y2="0"><stop offset="0" stop-color="#003dff"/><stop offset="0.2163" stop-color="#0324ff"/><stop offset="0.3605" stop-color="#3914ff"/><stop offset="0.5558" stop-color="#9d01ff"/><stop offset="0.5651" stop-color="#a200ff"/><stop offset="0.5674" stop-color="#ba00ff"/><stop offset="0.7023" stop-color="#ff00fc"/><stop offset="0.8279" stop-color="#ff00c6"/><stop offset="1" stop-color="#ff0098"/></linearGradient><linearGradient id="g122" gradientUnits="userSpaceOnUse" x1="1106" x2="1533" y1="0" y2="0"><stop offset="0" stop-color="#003cff"/><stop offset="0.2155" stop-color="#0323ff"/><stop offset="0.3607" stop-color="#3813ff"/><stop offset="0.5574" stop-color="#9a00ff"/><stop offset="0.5597" stop-color="#9c00ff"/><stop offset="0.5621" stop-color="#b500ff"/><stop offset="0.7073" stop-color="#ff00fd"/><stop offset="0.8361" stop-color="#ff00c7"/><stop offset="1" stop-color="#ff009a"/></linearGradient><linearGradient id="g123" gradientUnits="userSpaceOnUse" x1="1107" x2="1531" y1="0" y2="0"><stop offset="0" stop-color="#003aff"/><stop offset="0.217" stop-color="#0322ff"/><stop offset="0.3656" stop-color="#3912ff"/><stop offset="0.5566" stop-color="#9700ff"/><stop offset="0.559" stop-color="#b100ff"/><stop offset="0.7146" stop-color="#ff00fd"/><stop offset="0.8443" stop-color="#ff00c7"/><stop offset="1" stop-color="#ff009c"/></linearGradient><linearGradient id="g124" gradientUnits="userSpaceOnUse" x1="1108" x2="1529" y1="0" y2="0"><stop offset="0" stop-color="#0039ff"/><stop offset="0.2162" stop-color="#0321ff"/><stop offset="0.3658" stop-color="#3811ff"/><stop offset="0.5534" stop-color="#9200ff"/><stop offset="0.5558" stop-color="#ad00ff"/><stop offset="0.7221" stop-color="#ff00fc"/><stop offset="0.8551" stop-color="#ff00c6"/><stop offset="1" stop-color="#ff009f"/></linearGradient><linearGradient id="g125" gradientUnits="userSpaceOnUse" x1="1109" x2="1527" y1="0" y2="0"><stop offset="0" stop-color="#0037ff"/><stop offset="0.2177" stop-color="#0320ff"/><stop offset="0.3708" stop-color="#3910ff"/><stop offset="0.5502" stop-color="#8d00ff"/><stop offset="0.5526" stop-color="#a900ff"/><stop offset="0.7297" stop-color="#ff00fc"/><stop offset="0.8636" stop-color="#ff00c6"/><stop offset="1" stop-color="#ff00a1"/></linearGradient><linearGradient id="g126" gradientUnits="userSpaceOnUse" x1="1111" x2="1525" y1="0" y2="0"><stop offset="0" stop-color="#0035ff"/><stop offset="0.215" stop-color="#031fff"/><stop offset="0.3696" stop-color="#380fff"/><stop offset="0.5435" stop-color="#8800ff"/><stop offset="0.5459" stop-color="#a400ff"/><stop offset="0.7343" stop-color="#ff00fd"/><stop offset="0.8696" stop-color="#ff00c7"/><stop offset="1" stop-color="#ff00a4"/></linearGradient><linearGradient id="g127" gradientUnits="userSpaceOnUse" x1="1112" x2="1523" y1="0" y2="0"><stop offset="0" stop-color="#0034ff"/><stop offset="0.2165" stop-color="#031dff"/><stop offset="0.3747" stop-color="#390eff"/><stop offset="0.5401" stop-color="#8300ff"/><stop offset="0.5426" stop-color="#a000ff"/><stop offset="0.7421" stop-color="#ff00fd"/><stop offset="0.8808" stop-color="#ff00c7"/><stop offset="1" stop-color="#ff00a6"/></linearGradient><linearGradient id="g128" gradientUnits="userSpaceOnUse" x1="1113" x2="1521" y1="0" y2="0"><stop offset="0" stop-color="#0033ff"/><stop offset="0.2157" stop-color="#031dff"/><stop offset="0.375" stop-color="#380dff"/><stop offset="0.5368" stop-color="#7f00ff"/><stop offset="0.5392" stop-color="#9d00ff"/><stop offset="0.75" stop-color="#ff00fc"/><stop offset="0.8897" stop-color="#ff00c7"/><stop offset="1" stop-color="#ff00a9"/></linearGradient><linearGradient id="g129" gradientUnits="userSpaceOnUse" x1="1114" x2="1519" y1="0" y2="0"><stop offset="0" stop-color="#0031ff"/><stop offset="0.2173" stop-color="#031bff"/><stop offset="0.3802" stop-color="#390cff"/><stop offset="0.5333" stop-color="#7b00ff"/><stop offset="0.5358" stop-color="#9900ff"/><stop offset="0.758" stop-color="#ff00fc"/><stop offset="0.9012" stop-color="#ff00c6"/><stop offset="1" stop-color="#ff00ac"/></linearGradient><linearGradient id="g130" gradientUnits="userSpaceOnUse" x1="1115" x2="1517" y1="0" y2="0"><stop offset="0" stop-color="#0030ff"/><stop offset="0.2164" stop-color="#031bff"/><stop offset="0.3806" stop-color="#380bff"/><stop offset="0.5274" stop-color="#7600ff"/><stop offset="0.5299" stop-color="#9400ff"/><stop offset="0.7637" stop-color="#ff00fd"/><stop offset="0.908" stop-color="#ff00c7"/><stop offset="1" stop-color="#ff00ae"/></linearGradient><linearGradient id="g131" gradientUnits="userSpaceOnUse" x1="1116" x2="1515" y1="0" y2="0"><stop offset="0" stop-color="#002fff"/><stop offset="0.218" stop-color="#031aff"/><stop offset="0.386" stop-color="#390aff"/><stop offset="0.5238" stop-color="#7200ff"/><stop offset="0.5263" stop-color="#9100ff"/><stop offset="0.7719" stop-color="#ff00fd"/><stop offset="0.9173" stop-color="#ff00c7"/><stop offset="1" stop-color="#ff00b1"/></linearGradient><linearGradient id="g132" gradientUnits="userSpaceOnUse" x1="1118" x2="1513" y1="0" y2="0"><stop offset="0" stop-color="#002dff"/><stop offset="0.2152" stop-color="#0319ff"/><stop offset="0.3848" stop-color="#380aff"/><stop offset="0.519" stop-color="#6e00ff"/><stop offset="0.5215" stop-color="#8e00ff"/><stop offset="0.7797" stop-color="#ff00fc"/><stop offset="0.9291" stop-color="#ff00c6"/><stop offset="1" stop-color="#ff00b4"/></linearGradient><linearGradient id="g133" gradientUnits="userSpaceOnUse" x1="1119" x2="1511" y1="0" y2="0"><stop offset="0" stop-color="#002cff"/><stop offset="0.2168" stop-color="#0318ff"/><stop offset="0.3903" stop-color="#3909ff"/><stop offset="0.5153" stop-color="#6a00ff"/><stop offset="0.5179" stop-color="#8a00ff"/><stop offset="0.7883" stop-color="#ff00fc"/><stop offset="0.9413" stop-color="#ff00c6"/><stop offset="1" stop-color="#ff00b6"/></linearGradient><linearGradient id="g134" gradientUnits="userSpaceOnUse" x1="1120" x2="1509" y1="0" y2="0"><stop offset="0" stop-color="#002bff"/><stop offset="0.2185" stop-color="#0317ff"/><stop offset="0.3959" stop-color="#3908ff"/><stop offset="0.509" stop-color="#6500ff"/><stop offset="0.5116" stop-color="#8600ff"/><stop offset="0.7969" stop-color="#ff00fc"/><stop offset="0.9512" stop-color="#ff00c6"/><stop offset="1" stop-color="#ff00b9"/></linearGradient><linearGradient id="g135" gradientUnits="userSpaceOnUse" x1="1121" x2="1507" y1="0" y2="0"><stop offset="0" stop-color="#002aff"/><stop offset="0.2176" stop-color="#0316ff"/><stop offset="0.3964" stop-color="#3807ff"/><stop offset="0.5052" stop-color="#6200ff"/><stop offset="0.5078" stop-color="#8200ff"/><stop offset="0.8031" stop-color="#ff00fd"/><stop offset="0.9585" stop-color="#ff00c7"/><stop offset="1" stop-color="#ff00bc"/></linearGradient><linearGradient id="g136" gradientUnits="userSpaceOnUse" x1="1122" x2="1505" y1="0" y2="0"><stop offset="0" stop-color="#0028ff"/><stop offset="0.2193" stop-color="#0315ff"/><stop offset="0.4021" stop-color="#3906ff"/><stop offset="0.5013" stop-color="#5e00ff"/><stop offset="0.5039" stop-color="#7f00ff"/><stop offset="0.812" stop-color="#ff00fd"/><stop offset="0.9713" stop-color="#ff00c6"/><stop offset="1" stop-color="#ff00bf"/></linearGradient><linearGradient id="g137" gradientUnits="userSpaceOnUse" x1="1124" x2="1503" y1="0" y2="0"><stop offset="0" stop-color="#0027ff"/><stop offset="0.2164" stop-color="#0314ff"/><stop offset="0.4011" stop-color="#3806ff"/><stop offset="0.4934" stop-color="#5a00ff"/><stop offset="0.496" stop-color="#7b00ff"/><stop offset="0.8206" stop-color="#ff00fc"/><stop offset="0.9815" stop-color="#ff00c6"/><stop offset="1" stop-color="#ff00c2"/></linearGradient><linearGradient id="g138" gradientUnits="userSpaceOnUse" x1="1125" x2="1502" y1="0" y2="0"><stop offset="0" stop-color="#0026ff"/><stop offset="0.2175" stop-color="#0313ff"/><stop offset="0.4058" stop-color="#3905ff"/><stop offset="0.4881" stop-color="#5700ff"/><stop offset="0.4907" stop-color="#7800ff"/><stop offset="0.8276" stop-color="#ff00fc"/><stop offset="0.992" stop-color="#ff00c6"/><stop offset="1" stop-color="#ff00c4"/></linearGradient><linearGradient id="g139" gradientUnits="userSpaceOnUse" x1="1126" x2="1500" y1="0" y2="0"><stop offset="0" stop-color="#0025ff"/><stop offset="0.2166" stop-color="#0313ff"/><stop offset="0.4064" stop-color="#3804ff"/><stop offset="0.484" stop-color="#5300ff"/><stop offset="0.4866" stop-color="#7500ff"/><stop offset="0.8342" stop-color="#ff00fd"/><stop offset="1" stop-color="#ff00c7"/></linearGradient><linearGradient id="g140" gradientUnits="userSpaceOnUse" x1="1127" x2="1498" y1="0" y2="0"><stop offset="0" stop-color="#0024ff"/><stop offset="0.2183" stop-color="#0312ff"/><stop offset="0.4124" stop-color="#3904ff"/><stop offset="0.4798" stop-color="#5000ff"/><stop offset="0.4825" stop-color="#7100ff"/><stop offset="0.8437" stop-color="#ff00fd"/><stop offset="1" stop-color="#ff00ca"/></linearGradient><linearGradient id="g141" gradientUnits="userSpaceOnUse" x1="1128" x2="1496" y1="0" y2="0"><stop offset="0" stop-color="#0023ff"/><stop offset="0.2174" stop-color="#0311ff"/><stop offset="0.413" stop-color="#3803ff"/><stop offset="0.4728" stop-color="#4c00ff"/><stop offset="0.4755" stop-color="#6d00ff"/><stop offset="0.8533" stop-color="#ff00fc"/><stop offset="1" stop-color="#ff00cd"/></linearGradient><linearGradient id="g142" gradientUnits="userSpaceOnUse" x1="1130" x2="1494" y1="0" y2="0"><stop offset="0" stop-color="#0021ff"/><stop offset="0.217" stop-color="#0310ff"/><stop offset="0.4176" stop-color="#3902ff"/><stop offset="0.467" stop-color="#4900ff"/><stop offset="0.4698" stop-color="#6a00ff"/><stop offset="0.8626" stop-color="#ff00fc"/><stop offset="1" stop-color="#ff00d0"/></linearGradient><linearGradient id="g143" gradientUnits="userSpaceOnUse" x1="1131" x2="1492" y1="0" y2="0"><stop offset="0" stop-color="#0020ff"/><stop offset="0.2161" stop-color="#0310ff"/><stop offset="0.4183" stop-color="#3802ff"/><stop offset="0.4626" stop-color="#4600ff"/><stop offset="0.4654" stop-color="#6700ff"/><stop offset="0.8698" stop-color="#ff00fd"/><stop offset="1" stop-color="#ff00d3"/></linearGradient><linearGradient id="g144" gradientUnits="userSpaceOnUse" x1="1132" x2="1490" y1="0" y2="0"><stop offset="0" stop-color="#001fff"/><stop offset="0.2179" stop-color="#030fff"/><stop offset="0.4246" stop-color="#3901ff"/><stop offset="0.4581" stop-color="#4300ff"/><stop offset="0.4609" stop-color="#6400ff"/><stop offset="0.8799" stop-color="#ff00fd"/><stop offset="1" stop-color="#ff00d6"/></linearGradient><linearGradient id="g145" gradientUnits="userSpaceOnUse" x1="1133" x2="1488" y1="0" y2="0"><stop offset="0" stop-color="#001eff"/><stop offset="0.2169" stop-color="#030eff"/><stop offset="0.4254" stop-color="#3801ff"/><stop offset="0.4507" stop-color="#4000ff"/><stop offset="0.4535" stop-color="#6100ff"/><stop offset="0.8901" stop-color="#ff00fc"/><stop offset="1" stop-color="#ff00d9"/></linearGradient><linearGradient id="g146" gradientUnits="userSpaceOnUse" x1="1135" x2="1486" y1="0" y2="0"><stop offset="0" stop-color="#001dff"/><stop offset="0.2165" stop-color="#030eff"/><stop offset="0.4302" stop-color="#3901ff"/><stop offset="0.4444" stop-color="#3d00ff"/><stop offset="0.4473" stop-color="#5e00ff"/><stop offset="0.9003" stop-color="#ff00fc"/><stop offset="1" stop-color="#ff00dc"/></linearGradient><linearGradient id="g147" gradientUnits="userSpaceOnUse" x1="1136" x2="1484" y1="0" y2="0"><stop offset="0" stop-color="#001cff"/><stop offset="0.2184" stop-color="#030dff"/><stop offset="0.4368" stop-color="#3a00ff"/><stop offset="0.4397" stop-color="#3a00ff"/><stop offset="0.4425" stop-color="#5b00ff"/><stop offset="0.9109" stop-color="#ff00fc"/><stop offset="1" stop-color="#ff00e0"/></linearGradient><linearGradient id="g148" gradientUnits="userSpaceOnUse" x1="1137" x2="1482" y1="0" y2="0"><stop offset="0" stop-color="#001bff"/><stop offset="0.2174" stop-color="#030cff"/><stop offset="0.4319" stop-color="#3700ff"/><stop offset="0.4348" stop-color="#5700ff"/><stop offset="0.9188" stop-color="#ff00fd"/><stop offset="1" stop-color="#ff00e3"/></linearGradient><linearGradient id="g149" gradientUnits="userSpaceOnUse" x1="1138" x2="1480" y1="0" y2="0"><stop offset="0" stop-color="#001aff"/><stop offset="0.2193" stop-color="#030bff"/><stop offset="0.4269" stop-color="#3500ff"/><stop offset="0.4298" stop-color="#5400ff"/><stop offset="0.9298" stop-color="#ff00fd"/><stop offset="1" stop-color="#ff00e6"/></linearGradient><linearGradient id="g150" gradientUnits="userSpaceOnUse" x1="1140" x2="1478" y1="0" y2="0"><stop offset="0" stop-color="#0019ff"/><stop offset="0.216" stop-color="#030bff"/><stop offset="0.4201" stop-color="#3200ff"/><stop offset="0.4231" stop-color="#5100ff"/><stop offset="0.9408" stop-color="#ff00fc"/><stop offset="1" stop-color="#ff00ea"/></linearGradient><linearGradient id="g151" gradientUnits="userSpaceOnUse" x1="1141" x2="1476" y1="0" y2="0"><stop offset="0" stop-color="#0018ff"/><stop offset="0.2179" stop-color="#030aff"/><stop offset="0.4149" stop-color="#3000ff"/><stop offset="0.4179" stop-color="#4f00ff"/><stop offset="0.9522" stop-color="#ff00fc"/><stop offset="1" stop-color="#ff00ed"/></linearGradient><linearGradient id="g152" gradientUnits="userSpaceOnUse" x1="1142" x2="1474" y1="0" y2="0"><stop offset="0" stop-color="#0017ff"/><stop offset="0.2169" stop-color="#030aff"/><stop offset="0.4066" stop-color="#2d00ff"/><stop offset="0.4096" stop-color="#4b00ff"/><stop offset="0.9608" stop-color="#ff00fd"/><stop offset="1" stop-color="#ff00f0"/></linearGradient><linearGradient id="g153" gradientUnits="userSpaceOnUse" x1="1143" x2="1472" y1="0" y2="0"><stop offset="0" stop-color="#0017ff"/><stop offset="0.2188" stop-color="#0309ff"/><stop offset="0.4012" stop-color="#2a00ff"/><stop offset="0.4043" stop-color="#4800ff"/><stop offset="0.9726" stop-color="#ff00fd"/><stop offset="1" stop-color="#ff00f4"/></linearGradient><linearGradient id="g154" gradientUnits="userSpaceOnUse" x1="1145" x2="1470" y1="0" y2="0"><stop offset="0" stop-color="#0016ff"/><stop offset="0.2154" stop-color="#0309ff"/><stop offset="0.3938" stop-color="#2800ff"/><stop offset="0.3969" stop-color="#4600ff"/><stop offset="0.9846" stop-color="#ff00fc"/><stop offset="1" stop-color="#ff00f8"/></linearGradient><linearGradient id="g155" gradientUnits="userSpaceOnUse" x1="1146" x2="1468" y1="0" y2="0"><stop offset="0" stop-color="#0015ff"/><stop offset="0.2174" stop-color="#0308ff"/><stop offset="0.3882" stop-color="#2600ff"/><stop offset="0.3913" stop-color="#4300ff"/><stop offset="0.9969" stop-color="#ff00fc"/><stop offset="1" stop-color="#ff00fb"/></linearGradient><linearGradient id="g156" gradientUnits="userSpaceOnUse" x1="1147" x2="1466" y1="0" y2="0"><stop offset="0" stop-color="#0014ff"/><stop offset="0.2194" stop-color="#0307ff"/><stop offset="0.3793" stop-color="#2300ff"/><stop offset="0.3824" stop-color="#4000ff"/><stop offset="1" stop-color="#ff00ff"/></linearGradient><linearGradient id="g157" gradientUnits="userSpaceOnUse" x1="1149" x2="1465" y1="0" y2="0"><stop offset="0" stop-color="#0013ff"/><stop offset="0.2152" stop-color="#0307ff"/><stop offset="0.3703" stop-color="#2100ff"/><stop offset="0.3734" stop-color="#3d00ff"/><stop offset="1" stop-color="#fc00ff"/></linearGradient><linearGradient id="g158" gradientUnits="userSpaceOnUse" x1="1150" x2="1463" y1="0" y2="0"><stop offset="0" stop-color="#0012ff"/><stop offset="0.2173" stop-color="#0306ff"/><stop offset="0.3642" stop-color="#1f00ff"/><stop offset="0.3674" stop-color="#3a00ff"/><stop offset="1" stop-color="#f900ff"/></linearGradient><linearGradient id="g159" gradientUnits="userSpaceOnUse" x1="1151" x2="1461" y1="0" y2="0"><stop offset="0" stop-color="#0011ff"/><stop offset="0.2161" stop-color="#0306ff"/><stop offset="0.3581" stop-color="#1d00ff"/><stop offset="0.3613" stop-color="#3800ff"/><stop offset="1" stop-color="#f500ff"/></linearGradient><linearGradient id="g160" gradientUnits="userSpaceOnUse" x1="1153" x2="1459" y1="0" y2="0"><stop offset="0" stop-color="#0011ff"/><stop offset="0.2157" stop-color="#0305ff"/><stop offset="0.3464" stop-color="#1b00ff"/><stop offset="0.3497" stop-color="#3400ff"/><stop offset="1" stop-color="#f200ff"/></linearGradient><linearGradient id="g161" gradientUnits="userSpaceOnUse" x1="1154" x2="1457" y1="0" y2="0"><stop offset="0" stop-color="#0010ff"/><stop offset="0.2145" stop-color="#0305ff"/><stop offset="0.3399" stop-color="#1900ff"/><stop offset="0.3432" stop-color="#3200ff"/><stop offset="1" stop-color="#ee00ff"/></linearGradient><linearGradient id="g162" gradientUnits="userSpaceOnUse" x1="1155" x2="1455" y1="0" y2="0"><stop offset="0" stop-color="#000fff"/><stop offset="0.2167" stop-color="#0304ff"/><stop offset="0.3333" stop-color="#1700ff"/><stop offset="0.3367" stop-color="#2f00ff"/><stop offset="1" stop-color="#eb00ff"/></linearGradient><linearGradient id="g163" gradientUnits="userSpaceOnUse" x1="1157" x2="1453" y1="0" y2="0"><stop offset="0" stop-color="#000eff"/><stop offset="0.2128" stop-color="#0304ff"/><stop offset="0.3209" stop-color="#1500ff"/><stop offset="0.3243" stop-color="#2c00ff"/><stop offset="1" stop-color="#e700ff"/></linearGradient><linearGradient id="g164" gradientUnits="userSpaceOnUse" x1="1158" x2="1451" y1="0" y2="0"><stop offset="0" stop-color="#000eff"/><stop offset="0.215" stop-color="#0304ff"/><stop offset="0.314" stop-color="#1300ff"/><stop offset="0.3174" stop-color="#2900ff"/><stop offset="1" stop-color="#e400ff"/></linearGradient><linearGradient id="g165" gradientUnits="userSpaceOnUse" x1="1159" x2="1449" y1="0" y2="0"><stop offset="0" stop-color="#000dff"/><stop offset="0.2172" stop-color="#0403ff"/><stop offset="0.3069" stop-color="#1100ff"/><stop offset="0.3103" stop-color="#2700ff"/><stop offset="1" stop-color="#e100ff"/></linearGradient><linearGradient id="g166" gradientUnits="userSpaceOnUse" x1="1161" x2="1447" y1="0" y2="0"><stop offset="0" stop-color="#000cff"/><stop offset="0.2133" stop-color="#0303ff"/><stop offset="0.2972" stop-color="#1000ff"/><stop offset="0.3007" stop-color="#2500ff"/><stop offset="1" stop-color="#dd00ff"/></linearGradient><linearGradient id="g167" gradientUnits="userSpaceOnUse" x1="1162" x2="1445" y1="0" y2="0"><stop offset="0" stop-color="#000bff"/><stop offset="0.2155" stop-color="#0302ff"/><stop offset="0.2862" stop-color="#0e00ff"/><stop offset="0.2898" stop-color="#2100ff"/><stop offset="1" stop-color="#da00ff"/></linearGradient><linearGradient id="g168" gradientUnits="userSpaceOnUse" x1="1164" x2="1443" y1="0" y2="0"><stop offset="0" stop-color="#000bff"/><stop offset="0.2115" stop-color="#0302ff"/><stop offset="0.276" stop-color="#0c00ff"/><stop offset="0.2796" stop-color="#1f00ff"/><stop offset="1" stop-color="#d700ff"/></linearGradient><linearGradient id="g169" gradientUnits="userSpaceOnUse" x1="1165" x2="1441" y1="0" y2="0"><stop offset="0" stop-color="#000aff"/><stop offset="0.2138" stop-color="#0302ff"/><stop offset="0.2681" stop-color="#0b00ff"/><stop offset="0.2717" stop-color="#1c00ff"/><stop offset="1" stop-color="#d400ff"/></linearGradient><linearGradient id="g170" gradientUnits="userSpaceOnUse" x1="1166" x2="1439" y1="0" y2="0"><stop offset="0" stop-color="#0009ff"/><stop offset="0.2125" stop-color="#0301ff"/><stop offset="0.2601" stop-color="#0900ff"/><stop offset="0.2637" stop-color="#1a00ff"/><stop offset="1" stop-color="#d100ff"/></linearGradient><linearGradient id="g171" gradientUnits="userSpaceOnUse" x1="1168" x2="1437" y1="0" y2="0"><stop offset="0" stop-color="#0009ff"/><stop offset="0.2119" stop-color="#0301ff"/><stop offset="0.2454" stop-color="#0800ff"/><stop offset="0.2491" stop-color="#1600ff"/><stop offset="0.8885" stop-color="#b300ff"/><stop offset="1" stop-color="#ce00ff"/></linearGradient><linearGradient id="g172" gradientUnits="userSpaceOnUse" x1="1169" x2="1435" y1="0" y2="0"><stop offset="0" stop-color="#0008ff"/><stop offset="0.2143" stop-color="#0401ff"/><stop offset="0.2368" stop-color="#0600ff"/><stop offset="0.2406" stop-color="#1400ff"/><stop offset="0.8158" stop-color="#9f00ff"/><stop offset="1" stop-color="#ca00ff"/></linearGradient><linearGradient id="g173" gradientUnits="userSpaceOnUse" x1="1171" x2="1433" y1="0" y2="0"><stop offset="0" stop-color="#0007ff"/><stop offset="0.2099" stop-color="#0300ff"/><stop offset="0.2252" stop-color="#0500ff"/><stop offset="0.229" stop-color="#1100ff"/><stop offset="0.7519" stop-color="#8f00ff"/><stop offset="1" stop-color="#c700ff"/></linearGradient><linearGradient id="g174" gradientUnits="userSpaceOnUse" x1="1172" x2="1431" y1="0" y2="0"><stop offset="0" stop-color="#0007ff"/><stop offset="0.2124" stop-color="#0400ff"/><stop offset="0.2162" stop-color="#0e00ff"/><stop offset="0.6757" stop-color="#7c00ff"/><stop offset="1" stop-color="#c400ff"/></linearGradient><linearGradient id="g175" gradientUnits="userSpaceOnUse" x1="1174" x2="1430" y1="0" y2="0"><stop offset="0" stop-color="#0006ff"/><stop offset="0.1992" stop-color="#0300ff"/><stop offset="0.2031" stop-color="#0b00ff"/><stop offset="0.6211" stop-color="#6f00ff"/><stop offset="1" stop-color="#c200ff"/></linearGradient><linearGradient id="g176" gradientUnits="userSpaceOnUse" x1="1175" x2="1428" y1="0" y2="0"><stop offset="0" stop-color="#0006ff"/><stop offset="0.1897" stop-color="#0200ff"/><stop offset="0.1976" stop-color="#0900ff"/><stop offset="0.5929" stop-color="#6700ff"/><stop offset="1" stop-color="#c000ff"/></linearGradient><linearGradient id="g177" gradientUnits="userSpaceOnUse" x1="1177" x2="1426" y1="0" y2="0"><stop offset="0" stop-color="#0005ff"/><stop offset="0.1767" stop-color="#0100ff"/><stop offset="0.2048" stop-color="#0d00ff"/><stop offset="0.6707" stop-color="#7700ff"/><stop offset="1" stop-color="#bd00ff"/></linearGradient><linearGradient id="g178" gradientUnits="userSpaceOnUse" x1="1178" x2="1424" y1="0" y2="0"><stop offset="0" stop-color="#0005ff"/><stop offset="0.1707" stop-color="#0200ff"/><stop offset="0.4472" stop-color="#4600ff"/><stop offset="1" stop-color="#ba00ff"/></linearGradient><linearGradient id="g179" gradientUnits="userSpaceOnUse" x1="1180" x2="1422" y1="0" y2="0"><stop offset="0" stop-color="#0004ff"/><stop offset="0.1653" stop-color="#0200ff"/><stop offset="0.438" stop-color="#4300ff"/><stop offset="1" stop-color="#b700ff"/></linearGradient><linearGradient id="g180" gradientUnits="userSpaceOnUse" x1="1181" x2="1420" y1="0" y2="0"><stop offset="0" stop-color="#0004ff"/><stop offset="0.1674" stop-color="#0300ff"/><stop offset="0.4728" stop-color="#4a00ff"/><stop offset="1" stop-color="#b400ff"/></linearGradient><linearGradient id="g181" gradientUnits="userSpaceOnUse" x1="1183" x2="1418" y1="0" y2="0"><stop offset="0" stop-color="#0003ff"/><stop offset="0.1617" stop-color="#0300ff"/><stop offset="0.4638" stop-color="#4800ff"/><stop offset="1" stop-color="#b200ff"/></linearGradient><linearGradient id="g182" gradientUnits="userSpaceOnUse" x1="1184" x2="1416" y1="0" y2="0"><stop offset="0" stop-color="#0003ff"/><stop offset="0.1595" stop-color="#0200ff"/><stop offset="0.4612" stop-color="#4600ff"/><stop offset="1" stop-color="#af00ff"/></linearGradient><linearGradient id="g183" gradientUnits="userSpaceOnUse" x1="1186" x2="1414" y1="0" y2="0"><stop offset="0" stop-color="#0002ff"/><stop offset="0.1535" stop-color="#0200ff"/><stop offset="0.4561" stop-color="#4500ff"/><stop offset="1" stop-color="#ac00ff"/></linearGradient><linearGradient id="g184" gradientUnits="userSpaceOnUse" x1="1187" x2="1412" y1="0" y2="0"><stop offset="0" stop-color="#0002ff"/><stop offset="0.1511" stop-color="#0200ff"/><stop offset="0.4489" stop-color="#4300ff"/><stop offset="1" stop-color="#a900ff"/></linearGradient><linearGradient id="g185" gradientUnits="userSpaceOnUse" x1="1189" x2="1410" y1="0" y2="0"><stop offset="0" stop-color="#0001ff"/><stop offset="0.1493" stop-color="#0300ff"/><stop offset="0.4842" stop-color="#4900ff"/><stop offset="1" stop-color="#a700ff"/></linearGradient><linearGradient id="g186" gradientUnits="userSpaceOnUse" x1="1190" x2="1408" y1="0" y2="0"><stop offset="0" stop-color="#0001ff"/><stop offset="0.1468" stop-color="#0300ff"/><stop offset="0.4817" stop-color="#4800ff"/><stop offset="1" stop-color="#a400ff"/></linearGradient><linearGradient id="g187" gradientUnits="userSpaceOnUse" x1="1192" x2="1406" y1="0" y2="0"><stop offset="0" stop-color="#0000ff"/><stop offset="0.1402" stop-color="#0200ff"/><stop offset="0.472" stop-color="#4600ff"/><stop offset="1" stop-color="#a200ff"/></linearGradient><linearGradient id="g188" gradientUnits="userSpaceOnUse" x1="1194" x2="1404" y1="0" y2="0"><stop offset="0" stop-color="#0000ff"/><stop offset="0.1333" stop-color="#0200ff"/><stop offset="0.4667" stop-color="#4400ff"/><stop offset="1" stop-color="#9f00ff"/></linearGradient><linearGradient id="g189" gradientUnits="userSpaceOnUse" x1="1195" x2="1402" y1="0" y2="0"><stop offset="0" stop-color="#0000ff"/><stop offset="0.1353" stop-color="#0300ff"/><stop offset="0.5024" stop-color="#4a00ff"/><stop offset="1" stop-color="#9d00ff"/></linearGradient><linearGradient id="g190" gradientUnits="userSpaceOnUse" x1="1197" x2="1400" y1="0" y2="0"><stop offset="0" stop-color="#0000ff"/><stop offset="0.1281" stop-color="#0300ff"/><stop offset="0.4975" stop-color="#4800ff"/><stop offset="1" stop-color="#9a00ff"/></linearGradient><linearGradient id="g191" gradientUnits="userSpaceOnUse" x1="1199" x2="1398" y1="0" y2="0"><stop offset="0" stop-color="#0000ff"/><stop offset="0.1206" stop-color="#0300ff"/><stop offset="0.4925" stop-color="#4700ff"/><stop offset="1" stop-color="#9800ff"/></linearGradient><linearGradient id="g192" gradientUnits="userSpaceOnUse" x1="1200" x2="1396" y1="0" y2="0"><stop offset="0" stop-color="#0000ff"/><stop offset="0.1173" stop-color="#0200ff"/><stop offset="0.4847" stop-color="#4500ff"/><stop offset="1" stop-color="#9500ff"/></linearGradient><linearGradient id="g193" gradientUnits="userSpaceOnUse" x1="1202" x2="1395" y1="0" y2="0"><stop offset="0" stop-color="#0000ff"/><stop offset="0.114" stop-color="#0300ff"/><stop offset="0.5233" stop-color="#4b00ff"/><stop offset="1" stop-color="#9400ff"/></linearGradient><linearGradient id="g194" gradientUnits="userSpaceOnUse" x1="1204" x2="1393" y1="0" y2="0"><stop offset="0" stop-color="#0000ff"/><stop offset="0.1058" stop-color="#0300ff"/><stop offset="0.5185" stop-color="#4a00ff"/><stop offset="1" stop-color="#9100ff"/></linearGradient><linearGradient id="g195" gradientUnits="userSpaceOnUse" x1="1206" x2="1391" y1="0" y2="0"><stop offset="0" stop-color="#0000ff"/><stop offset="0.0973" stop-color="#0300ff"/><stop offset="0.5081" stop-color="#4700ff"/><stop offset="1" stop-color="#8f00ff"/></linearGradient><linearGradient id="g196" gradientUnits="userSpaceOnUse" x1="1207" x2="1389" y1="0" y2="0"><stop offset="0" stop-color="#0000ff"/><stop offset="0.09341" stop-color="#0200ff"/><stop offset="0.5055" stop-color="#4600ff"/><stop offset="1" stop-color="#8d00ff"/></linearGradient><linearGradient id="g197" gradientUnits="userSpaceOnUse" x1="1209" x2="1387" y1="0" y2="0"><stop offset="0" stop-color="#0000ff"/><stop offset="0.08989" stop-color="#0300ff"/><stop offset="0.5449" stop-color="#4b00ff"/><stop offset="1" stop-color="#8a00ff"/></linearGradient><linearGradient id="g198" gradientUnits="userSpaceOnUse" x1="1211" x2="1385" y1="0" y2="0"><stop offset="0" stop-color="#0000ff"/><stop offset="0.08046" stop-color="#0300ff"/><stop offset="0.5402" stop-color="#4a00ff"/><stop offset="1" stop-color="#8800ff"/></linearGradient><linearGradient id="g199" gradientUnits="userSpaceOnUse" x1="1213" x2="1383" y1="0" y2="0"><stop offset="0" stop-color="#0000ff"/><stop offset="0.07059" stop-color="#0300ff"/><stop offset="0.5353" stop-color="#4900ff"/><stop offset="1" stop-color="#8600ff"/></linearGradient><linearGradient id="g200" gradientUnits="userSpaceOnUse" x1="1214" x2="1381" y1="0" y2="0"><stop offset="0" stop-color="#0000ff"/><stop offset="0.07186" stop-color="#0400ff"/><stop offset="0.5808" stop-color="#4e00ff"/><stop offset="1" stop-color="#8300ff"/></linearGradient><linearGradient id="g201" gradientUnits="userSpaceOnUse" x1="1216" x2="1379" y1="0" y2="0"><stop offset="0" stop-color="#0000ff"/><stop offset="0.06135" stop-color="#0400ff"/><stop offset="0.5767" stop-color="#4c00ff"/><stop offset="1" stop-color="#8100ff"/></linearGradient><linearGradient id="g202" gradientUnits="userSpaceOnUse" x1="1218" x2="1377" y1="0" y2="0"><stop offset="0" stop-color="#0000ff"/><stop offset="0.06289" stop-color="#0600ff"/><stop offset="0.6604" stop-color="#5600ff"/><stop offset="1" stop-color="#7f00ff"/></linearGradient><linearGradient id="g203" gradientUnits="userSpaceOnUse" x1="1220" x2="1375" y1="0" y2="0"><stop offset="0" stop-color="#0000ff"/><stop offset="0.06452" stop-color="#0800ff"/><stop offset="0.7484" stop-color="#5f00ff"/><stop offset="1" stop-color="#7d00ff"/></linearGradient><linearGradient id="g204" gradientUnits="userSpaceOnUse" x1="1222" x2="1373" y1="0" y2="0"><stop offset="0" stop-color="#0000ff"/><stop offset="0.6424" stop-color="#5200ff"/><stop offset="1" stop-color="#7b00ff"/></linearGradient><linearGradient id="g205" gradientUnits="userSpaceOnUse" x1="1224" x2="1371" y1="0" y2="0"><stop offset="0" stop-color="#0000ff"/><stop offset="0.4558" stop-color="#3c00ff"/><stop offset="1" stop-color="#7800ff"/></linearGradient><linearGradient id="g206" gradientUnits="userSpaceOnUse" x1="1226" x2="1369" y1="0" y2="0"><stop offset="0" stop-color="#0200ff"/><stop offset="0.5385" stop-color="#4500ff"/><stop offset="1" stop-color="#7600ff"/></linearGradient><linearGradient id="g207" gradientUnits="userSpaceOnUse" x1="1228" x2="1367" y1="0" y2="0"><stop offset="0" stop-color="#0400ff"/><stop offset="0.6547" stop-color="#5000ff"/><stop offset="1" stop-color="#7400ff"/></linearGradient><linearGradient id="g208" gradientUnits="userSpaceOnUse" x1="1230" x2="1365" y1="0" y2="0"><stop offset="0" stop-color="#0600ff"/><stop offset="0.7556" stop-color="#5a00ff"/><stop offset="1" stop-color="#7200ff"/></linearGradient><linearGradient id="g209" gradientUnits="userSpaceOnUse" x1="1233" x2="1363" y1="0" y2="0"><stop offset="0" stop-color="#0900ff"/><stop offset="0.9077" stop-color="#6700ff"/><stop offset="1" stop-color="#7000ff"/></linearGradient><linearGradient id="g210" gradientUnits="userSpaceOnUse" x1="1235" x2="1361" y1="0" y2="0"><stop offset="0" stop-color="#0b00ff"/><stop offset="1" stop-color="#6e00ff"/></linearGradient><linearGradient id="g211" gradientUnits="userSpaceOnUse" x1="1237" x2="1359" y1="0" y2="0"><stop offset="0" stop-color="#0d00ff"/><stop offset="1" stop-color="#6c00ff"/></linearGradient><linearGradient id="g212" gradientUnits="userSpaceOnUse" x1="1239" x2="1358" y1="0" y2="0"><stop offset="0" stop-color="#0e00ff"/><stop offset="1" stop-color="#6a00ff"/></linearGradient><linearGradient id="g213" gradientUnits="userSpaceOnUse" x1="1241" x2="1356" y1="0" y2="0"><stop offset="0" stop-color="#1000ff"/><stop offset="1" stop-color="#6800ff"/></linearGradient><linearGradient id="g214" gradientUnits="userSpaceOnUse" x1="1244" x2="1354" y1="0" y2="0"><stop offset="0" stop-color="#1200ff"/><stop offset="1" stop-color="#6600ff"/></linearGradient><linearGradient id="g215" gradientUnits="userSpaceOnUse" x1="1246" x2="1352" y1="0" y2="0"><stop offset="0" stop-color="#1400ff"/><stop offset="1" stop-color="#6400ff"/></linearGradient><linearGradient id="g216" gradientUnits="userSpaceOnUse" x1="1248" x2="1350" y1="0" y2="0"><stop offset="0" stop-color="#1500ff"/><stop offset="1" stop-color="#6200ff"/></linearGradient><linearGradient id="g217" gradientUnits="userSpaceOnUse" x1="1251" x2="1348" y1="0" y2="0"><stop offset="0" stop-color="#1800ff"/><stop offset="1" stop-color="#6100ff"/></linearGradient><linearGradient id="g218" gradientUnits="userSpaceOnUse" x1="1253" x2="1346" y1="0" y2="0"><stop offset="0" stop-color="#1900ff"/><stop offset="1" stop-color="#5f00ff"/></linearGradient><linearGradient id="g219" gradientUnits="userSpaceOnUse" x1="1255" x2="1344" y1="0" y2="0"><stop offset="0" stop-color="#1a00ff"/><stop offset="1" stop-color="#5d00ff"/></linearGradient><linearGradient id="g220" gradientUnits="userSpaceOnUse" x1="1258" x2="1342" y1="0" y2="0"><stop offset="0" stop-color="#1d00ff"/><stop offset="1" stop-color="#5b00ff"/></linearGradient><linearGradient id="g221" gradientUnits="userSpaceOnUse" x1="1260" x2="1340" y1="0" y2="0"><stop offset="0" stop-color="#1e00ff"/><stop offset="1" stop-color="#5900ff"/></linearGradient><linearGradient id="g222" gradientUnits="userSpaceOnUse" x1="1263" x2="1338" y1="0" y2="0"><stop offset="0" stop-color="#2000ff"/><stop offset="1" stop-color="#5700ff"/></linearGradient><linearGradient id="g223" gradientUnits="userSpaceOnUse" x1="1265" x2="1336" y1="0" y2="0"><stop offset="0" stop-color="#2100ff"/><stop offset="1" stop-color="#5500ff"/></linearGradient><linearGradient id="g224" gradientUnits="userSpaceOnUse" x1="1268" x2="1334" y1="0" y2="0"><stop offset="0" stop-color="#2300ff"/><stop offset="1" stop-color="#5300ff"/></linearGradient><linearGradient id="g225" gradientUnits="userSpaceOnUse" x1="1270" x2="1332" y1="0" y2="0"><stop offset="0" stop-color="#2500ff"/><stop offset="1" stop-color="#5100ff"/></linearGradient><linearGradient id="g226" gradientUnits="userSpaceOnUse" x1="1272" x2="1330" y1="0" y2="0"><stop offset="0" stop-color="#2600ff"/><stop offset="1" stop-color="#4f00ff"/></linearGradient><linearGradient id="g227" gradientUnits="userSpaceOnUse" x1="1275" x2="1328" y1="0" y2="0"><stop offset="0" stop-color="#2800ff"/><stop offset="1" stop-color="#4e00ff"/></linearGradient><linearGradient id="g228" gradientUnits="userSpaceOnUse" x1="1277" x2="1326" y1="0" y2="0"><stop offset="0" stop-color="#2900ff"/><stop offset="1" stop-color="#4c00ff"/></linearGradient><linearGradient id="g229" gradientUnits="userSpaceOnUse" x1="1280" x2="1324" y1="0" y2="0"><stop offset="0" stop-color="#2b00ff"/><stop offset="1" stop-color="#4a00ff"/></linearGradient><linearGradient id="g230" gradientUnits="userSpaceOnUse" x1="1282" x2="1323" y1="0" y2="0"><stop offset="0" stop-color="#2c00ff"/><stop offset="1" stop-color="#4900ff"/></linearGradient><linearGradient id="g231" gradientUnits="userSpaceOnUse" x1="1284" x2="1321" y1="0" y2="0"><stop offset="0" stop-color="#2d00ff"/><stop offset="1" stop-color="#4700ff"/></linearGradient><linearGradient id="g232" gradientUnits="userSpaceOnUse" x1="1287" x2="1319" y1="0" y2="0"><stop offset="0" stop-color="#2f00ff"/><stop offset="1" stop-color="#4500ff"/></linearGradient><linearGradient id="g233" gradientUnits="userSpaceOnUse" x1="1289" x2="1317" y1="0" y2="0"><stop offset="0" stop-color="#3000ff"/><stop offset="1" stop-color="#4400ff"/></linearGradient><linearGradient id="g234" gradientUnits="userSpaceOnUse" x1="1292" x2="1315" y1="0" y2="0"><stop offset="0" stop-color="#3200ff"/><stop offset="1" stop-color="#4200ff"/></linearGradient><linearGradient id="g235" gradientUnits="userSpaceOnUse" x1="1294" x2="1313" y1="0" y2="0"><stop offset="0" stop-color="#3300ff"/><stop offset="1" stop-color="#4000ff"/></linearGradient><linearGradient id="g236" gradientUnits="userSpaceOnUse" x1="1297" x2="1311" y1="0" y2="0"><stop offset="0" stop-color="#3500ff"/><stop offset="1" stop-color="#3e00ff"/></linearGradient><linearGradient id="g237" gradientUnits="userSpaceOnUse" x1="1300" x2="1309" y1="0" y2="0"><stop offset="0" stop-color="#3700ff"/><stop offset="1" stop-color="#3d00ff"/></linearGradient>
<linearGradient id="ins" x1="0" y1="0" x2="1" y2="1"><stop offset="0" stop-color="#ff8c28"/><stop offset="0.5" stop-color="#ff6420"/><stop offset="1" stop-color="#ff3c20"/></linearGradient>
<linearGradient id="thd" x1="0" y1="0" x2="0" y2="1"><stop offset="0" stop-color="#2c2c2c"/><stop offset="0.53" stop-color="#323232"/><stop offset="0.55" stop-color="#181818"/><stop offset="1" stop-color="#101010"/></linearGradient>
<linearGradient id="tls" x1="0" y1="0" x2="1" y2="0"><stop offset="0" stop-color="#181818"/><stop offset="1" stop-color="#363636"/></linearGradient>
<linearGradient id="tile" x1="0" y1="0" x2="0" y2="1"><stop offset="0" stop-color="#a2a2a2"/><stop offset="0.12" stop-color="#969696"/><stop offset="1" stop-color="#686868"/></linearGradient>
<linearGradient id="btn" x1="0" y1="0" x2="0" y2="1"><stop offset="0" stop-color="#aeaeae"/><stop offset="1" stop-color="#686868"/></linearGradient>
<linearGradient id="btd" x1="0" y1="0" x2="0" y2="1"><stop offset="0" stop-color="#4a4a4a"/><stop offset="1" stop-color="#2c2c2c"/></linearGradient>
<linearGradient id="cir" x1="0" y1="0" x2="0" y2="1"><stop offset="0" stop-color="#7e7e7e"/><stop offset="1" stop-color="#bcbcbc"/></linearGradient>
<linearGradient id="cird" x1="0" y1="0" x2="0" y2="1"><stop offset="0" stop-color="#2e2e2e"/><stop offset="1" stop-color="#4a4a4a"/></linearGradient>
<linearGradient id="up" x1="0" y1="0" x2="0" y2="1"><stop offset="0" stop-color="#a4a4a4"/><stop offset="1" stop-color="#8c8c8c"/></linearGradient>
<linearGradient id="big" x1="0" y1="0" x2="0" y2="1"><stop offset="0" stop-color="#909090"/><stop offset="1" stop-color="#6a6a6a"/></linearGradient>
<linearGradient id="bigi" x1="0" y1="0" x2="0" y2="1"><stop offset="0" stop-color="#b4b4b4"/><stop offset="0.5" stop-color="#a4a4a4"/><stop offset="0.5" stop-color="#7c7c7c"/><stop offset="1" stop-color="#888"/></linearGradient></defs>
<rect width="1685" height="953" fill="#333333"/>
<text transform="translate(3.90 77.80) scale(0.9429 1)" font-size="42.59" fill="#f6f6f6">ColorChecker</text>
<text transform="translate(34.70 117.20) scale(1.0700 1)" font-size="15.70" fill="#f2f2f2">Display analysis is performed with the X-Rite/</text>
<text transform="translate(34.7 138.8) scale(1.0619 1)" font-size="15.70" fill="#f2f2f2">Pantone ColorChecker<tspan font-size="9.42" dy="-4.6">®</tspan><tspan dy="4.6"> target colors.</tspan></text>
<text transform="translate(108.30 186.40) scale(0.9997 1)" font-size="20.20" fill="#f4f4f4">dE Formula:</text>
<rect x="226.00" y="167.00" width="150.00" height="25.00" fill="url(#dd)" stroke="#2a2a2a" stroke-width="1"/>
<text transform="translate(230.70 187.60) scale(0.8999 1)" font-size="17.73" fill="#f4f4f4">2000</text>
<path d="M361.2 176.7 L371 176.7 L366.1 183Z" fill="#0c0c0c"/>
<text transform="translate(146.85 219.60) scale(0.9516 1)" font-size="15.41" fill="#d8d8d8">DeltaE 2000</text>
<rect x="16.50" y="226.00" width="339.50" height="336.00" fill="#242424"/>
<line x1="61.50" y1="226.00" x2="61.50" y2="562.00" stroke="#8e8e8e" stroke-width="1.2"/>
<line x1="107.50" y1="226.00" x2="107.50" y2="562.00" stroke="#8e8e8e" stroke-width="1.2"/>
<line x1="152.50" y1="226.00" x2="152.50" y2="562.00" stroke="#8e8e8e" stroke-width="1.2"/>
<line x1="197.50" y1="226.00" x2="197.50" y2="562.00" stroke="#8e8e8e" stroke-width="1.2"/>
<line x1="242.50" y1="226.00" x2="242.50" y2="562.00" stroke="#8e8e8e" stroke-width="1.2"/>
<line x1="288.50" y1="226.00" x2="288.50" y2="562.00" stroke="#8e8e8e" stroke-width="1.2"/>
<line x1="333.50" y1="226.00" x2="333.50" y2="562.00" stroke="#8e8e8e" stroke-width="1.2"/>
<rect x="16.50" y="226.00" width="339.50" height="336.00" fill="none" stroke="#8e8e8e" stroke-width="1.4"/>
<line x1="16.50" y1="562.00" x2="16.50" y2="567.00" stroke="#cfcfcf" stroke-width="1.3"/>
<text transform="translate(12.34 583.80) scale(1.0000 1)" font-size="14.97" fill="#d6d6d6">0</text>
<line x1="61.76" y1="562.00" x2="61.76" y2="567.00" stroke="#cfcfcf" stroke-width="1.3"/>
<text transform="translate(57.60 583.80) scale(1.0000 1)" font-size="14.97" fill="#d6d6d6">2</text>
<line x1="107.02" y1="562.00" x2="107.02" y2="567.00" stroke="#cfcfcf" stroke-width="1.3"/>
<text transform="translate(102.86 583.80) scale(1.0000 1)" font-size="14.97" fill="#d6d6d6">4</text>
<line x1="152.28" y1="562.00" x2="152.28" y2="567.00" stroke="#cfcfcf" stroke-width="1.3"/>
<text transform="translate(148.12 583.80) scale(1.0000 1)" font-size="14.97" fill="#d6d6d6">6</text>
<line x1="197.54" y1="562.00" x2="197.54" y2="567.00" stroke="#cfcfcf" stroke-width="1.3"/>
<text transform="translate(193.38 583.80) scale(1.0000 1)" font-size="14.97" fill="#d6d6d6">8</text>
<line x1="242.80" y1="562.00" x2="242.80" y2="567.00" stroke="#cfcfcf" stroke-width="1.3"/>
<text transform="translate(234.47 583.80) scale(1.0000 1)" font-size="14.97" fill="#d6d6d6">10</text>
<line x1="288.06" y1="562.00" x2="288.06" y2="567.00" stroke="#cfcfcf" stroke-width="1.3"/>
<text transform="translate(279.73 583.80) scale(1.0000 1)" font-size="14.97" fill="#d6d6d6">12</text>
<line x1="333.32" y1="562.00" x2="333.32" y2="567.00" stroke="#cfcfcf" stroke-width="1.3"/>
<text transform="translate(324.99 583.80) scale(1.0000 1)" font-size="14.97" fill="#d6d6d6">14</text>
<rect x="17.30" y="554.70" width="44.81" height="5.40" fill="#050505"/>
<rect x="17.70" y="555.70" width="43.21" height="3.40" fill="url(#b0)"/>
<rect x="17.70" y="555.70" width="43.21" height="3.40" fill="url(#cyl)"/>
<rect x="17.30" y="547.55" width="35.08" height="5.40" fill="#050505"/>
<rect x="17.70" y="548.55" width="33.48" height="3.40" fill="url(#b1)"/>
<rect x="17.70" y="548.55" width="33.48" height="3.40" fill="url(#cyl)"/>
<rect x="17.30" y="540.40" width="44.13" height="5.40" fill="#050505"/>
<rect x="17.70" y="541.40" width="42.53" height="3.40" fill="url(#b2)"/>
<rect x="17.70" y="541.40" width="42.53" height="3.40" fill="url(#cyl)"/>
<rect x="17.30" y="533.26" width="33.95" height="5.40" fill="#050505"/>
<rect x="17.70" y="534.26" width="32.34" height="3.40" fill="url(#b3)"/>
<rect x="17.70" y="534.26" width="32.34" height="3.40" fill="url(#cyl)"/>
<rect x="17.30" y="526.11" width="21.05" height="5.40" fill="#050505"/>
<rect x="17.70" y="527.11" width="19.45" height="3.40" fill="url(#b4)"/>
<rect x="17.70" y="527.11" width="19.45" height="3.40" fill="url(#cyl)"/>
<rect x="17.30" y="518.96" width="21.05" height="5.40" fill="#050505"/>
<rect x="17.70" y="519.96" width="19.45" height="3.40" fill="url(#b5)"/>
<rect x="17.70" y="519.96" width="19.45" height="3.40" fill="url(#cyl)"/>
<rect x="17.30" y="511.81" width="24.44" height="5.40" fill="#050505"/>
<rect x="17.70" y="512.81" width="22.84" height="3.40" fill="url(#b6)"/>
<rect x="17.70" y="512.81" width="22.84" height="3.40" fill="url(#cyl)"/>
<rect x="17.30" y="504.66" width="9.28" height="5.40" fill="#050505"/>
<rect x="17.70" y="505.66" width="7.68" height="3.40" fill="url(#b7)"/>
<rect x="17.70" y="505.66" width="7.68" height="3.40" fill="url(#cyl)"/>
<rect x="17.30" y="497.52" width="28.06" height="5.40" fill="#050505"/>
<rect x="17.70" y="498.52" width="26.46" height="3.40" fill="url(#b8)"/>
<rect x="17.70" y="498.52" width="26.46" height="3.40" fill="url(#cyl)"/>
<rect x="17.30" y="490.37" width="11.99" height="5.40" fill="#050505"/>
<rect x="17.70" y="491.37" width="10.39" height="3.40" fill="url(#b9)"/>
<rect x="17.70" y="491.37" width="10.39" height="3.40" fill="url(#cyl)"/>
<rect x="17.30" y="483.22" width="31.00" height="5.40" fill="#050505"/>
<rect x="17.70" y="484.22" width="29.40" height="3.40" fill="url(#b10)"/>
<rect x="17.70" y="484.22" width="29.40" height="3.40" fill="url(#cyl)"/>
<rect x="17.30" y="476.07" width="14.26" height="5.40" fill="#050505"/>
<rect x="17.70" y="477.07" width="12.66" height="3.40" fill="url(#b11)"/>
<rect x="17.70" y="477.07" width="12.66" height="3.40" fill="url(#cyl)"/>
<rect x="17.30" y="468.92" width="22.40" height="5.40" fill="#050505"/>
<rect x="17.70" y="469.92" width="20.80" height="3.40" fill="url(#b12)"/>
<rect x="17.70" y="469.92" width="20.80" height="3.40" fill="url(#cyl)"/>
<rect x="17.30" y="461.78" width="43.68" height="5.40" fill="#050505"/>
<rect x="17.70" y="462.78" width="42.08" height="3.40" fill="url(#b13)"/>
<rect x="17.70" y="462.78" width="42.08" height="3.40" fill="url(#cyl)"/>
<rect x="17.30" y="454.63" width="14.94" height="5.40" fill="#050505"/>
<rect x="17.70" y="455.63" width="13.34" height="3.40" fill="url(#b14)"/>
<rect x="17.70" y="455.63" width="13.34" height="3.40" fill="url(#cyl)"/>
<rect x="17.30" y="447.48" width="17.65" height="5.40" fill="#050505"/>
<rect x="17.70" y="448.48" width="16.05" height="3.40" fill="url(#b15)"/>
<rect x="17.70" y="448.48" width="16.05" height="3.40" fill="url(#cyl)"/>
<rect x="17.30" y="440.33" width="19.01" height="5.40" fill="#050505"/>
<rect x="17.70" y="441.33" width="17.41" height="3.40" fill="url(#b16)"/>
<rect x="17.70" y="441.33" width="17.41" height="3.40" fill="url(#cyl)"/>
<rect x="17.30" y="433.18" width="18.10" height="5.40" fill="#050505"/>
<rect x="17.70" y="434.18" width="16.50" height="3.40" fill="url(#b17)"/>
<rect x="17.70" y="434.18" width="16.50" height="3.40" fill="url(#cyl)"/>
<rect x="17.30" y="426.04" width="33.27" height="5.40" fill="#050505"/>
<rect x="17.70" y="427.04" width="31.67" height="3.40" fill="url(#b18)"/>
<rect x="17.70" y="427.04" width="31.67" height="3.40" fill="url(#cyl)"/>
<rect x="17.30" y="418.89" width="12.90" height="5.40" fill="#050505"/>
<rect x="17.70" y="419.89" width="11.30" height="3.40" fill="url(#b19)"/>
<rect x="17.70" y="419.89" width="11.30" height="3.40" fill="url(#cyl)"/>
<rect x="17.30" y="411.74" width="16.97" height="5.40" fill="#050505"/>
<rect x="17.70" y="412.74" width="15.37" height="3.40" fill="url(#b20)"/>
<rect x="17.70" y="412.74" width="15.37" height="3.40" fill="url(#cyl)"/>
<rect x="17.30" y="404.59" width="18.56" height="5.40" fill="#050505"/>
<rect x="17.70" y="405.59" width="16.96" height="3.40" fill="url(#b21)"/>
<rect x="17.70" y="405.59" width="16.96" height="3.40" fill="url(#cyl)"/>
<rect x="17.30" y="397.44" width="18.33" height="5.40" fill="#050505"/>
<rect x="17.70" y="398.44" width="16.73" height="3.40" fill="url(#b22)"/>
<rect x="17.70" y="398.44" width="16.73" height="3.40" fill="url(#cyl)"/>
<rect x="17.30" y="390.30" width="33.95" height="5.40" fill="#050505"/>
<rect x="17.70" y="391.30" width="32.34" height="3.40" fill="url(#b23)"/>
<rect x="17.70" y="391.30" width="32.34" height="3.40" fill="url(#cyl)"/>
<rect x="17.30" y="383.15" width="27.16" height="5.40" fill="#050505"/>
<rect x="17.70" y="384.15" width="25.56" height="3.40" fill="url(#b24)"/>
<rect x="17.70" y="384.15" width="25.56" height="3.40" fill="url(#cyl)"/>
<rect x="17.30" y="376.00" width="16.07" height="5.40" fill="#050505"/>
<rect x="17.70" y="377.00" width="14.47" height="3.40" fill="url(#b25)"/>
<rect x="17.70" y="377.00" width="14.47" height="3.40" fill="url(#cyl)"/>
<rect x="17.30" y="368.85" width="102.74" height="5.40" fill="#050505"/>
<rect x="17.70" y="369.85" width="101.14" height="3.40" fill="url(#b26)"/>
<rect x="17.70" y="369.85" width="101.14" height="3.40" fill="url(#cyl)"/>
<rect x="17.30" y="361.70" width="5.66" height="5.40" fill="#050505"/>
<rect x="17.70" y="362.70" width="4.06" height="3.40" fill="url(#b27)"/>
<rect x="17.70" y="362.70" width="4.06" height="3.40" fill="url(#cyl)"/>
<rect x="17.30" y="354.56" width="25.80" height="5.40" fill="#050505"/>
<rect x="17.70" y="355.56" width="24.20" height="3.40" fill="url(#b28)"/>
<rect x="17.70" y="355.56" width="24.20" height="3.40" fill="url(#cyl)"/>
<rect x="17.30" y="347.41" width="13.80" height="5.40" fill="#050505"/>
<rect x="17.70" y="348.41" width="12.20" height="3.40" fill="url(#b29)"/>
<rect x="17.70" y="348.41" width="12.20" height="3.40" fill="url(#cyl)"/>
<rect x="17.30" y="340.26" width="23.76" height="5.40" fill="#050505"/>
<rect x="17.70" y="341.26" width="22.16" height="3.40" fill="url(#b30)"/>
<rect x="17.70" y="341.26" width="22.16" height="3.40" fill="url(#cyl)"/>
<rect x="17.30" y="333.11" width="15.61" height="5.40" fill="#050505"/>
<rect x="17.70" y="334.11" width="14.01" height="3.40" fill="url(#b31)"/>
<rect x="17.70" y="334.11" width="14.01" height="3.40" fill="url(#cyl)"/>
<rect x="17.30" y="325.96" width="25.57" height="5.40" fill="#050505"/>
<rect x="17.70" y="326.96" width="23.97" height="3.40" fill="url(#b32)"/>
<rect x="17.70" y="326.96" width="23.97" height="3.40" fill="url(#cyl)"/>
<rect x="17.30" y="318.82" width="33.72" height="5.40" fill="#050505"/>
<rect x="17.70" y="319.82" width="32.12" height="3.40" fill="url(#b33)"/>
<rect x="17.70" y="319.82" width="32.12" height="3.40" fill="url(#cyl)"/>
<rect x="17.30" y="311.67" width="18.56" height="5.40" fill="#050505"/>
<rect x="17.70" y="312.67" width="16.96" height="3.40" fill="url(#b34)"/>
<rect x="17.70" y="312.67" width="16.96" height="3.40" fill="url(#cyl)"/>
<rect x="17.30" y="304.52" width="20.82" height="5.40" fill="#050505"/>
<rect x="17.70" y="305.52" width="19.22" height="3.40" fill="url(#b35)"/>
<rect x="17.70" y="305.52" width="19.22" height="3.40" fill="url(#cyl)"/>
<rect x="17.30" y="297.37" width="27.83" height="5.40" fill="#050505"/>
<rect x="17.70" y="298.37" width="26.23" height="3.40" fill="url(#b36)"/>
<rect x="17.70" y="298.37" width="26.23" height="3.40" fill="url(#cyl)"/>
<rect x="17.30" y="290.22" width="12.67" height="5.40" fill="#050505"/>
<rect x="17.70" y="291.22" width="11.07" height="3.40" fill="url(#b37)"/>
<rect x="17.70" y="291.22" width="11.07" height="3.40" fill="url(#cyl)"/>
<rect x="17.30" y="283.08" width="16.75" height="5.40" fill="#050505"/>
<rect x="17.70" y="284.08" width="15.15" height="3.40" fill="url(#b38)"/>
<rect x="17.70" y="284.08" width="15.15" height="3.40" fill="url(#cyl)"/>
<rect x="17.30" y="275.93" width="16.75" height="5.40" fill="#050505"/>
<rect x="17.70" y="276.93" width="15.15" height="3.40" fill="url(#b39)"/>
<rect x="17.70" y="276.93" width="15.15" height="3.40" fill="url(#cyl)"/>
<rect x="17.30" y="268.78" width="15.61" height="5.40" fill="#050505"/>
<rect x="17.70" y="269.78" width="14.01" height="3.40" fill="url(#b40)"/>
<rect x="17.70" y="269.78" width="14.01" height="3.40" fill="url(#cyl)"/>
<rect x="17.30" y="261.63" width="18.56" height="5.40" fill="#050505"/>
<rect x="17.70" y="262.63" width="16.96" height="3.40" fill="url(#b41)"/>
<rect x="17.70" y="262.63" width="16.96" height="3.40" fill="url(#cyl)"/>
<rect x="17.30" y="254.48" width="22.63" height="5.40" fill="#050505"/>
<rect x="17.70" y="255.48" width="21.03" height="3.40" fill="url(#b42)"/>
<rect x="17.70" y="255.48" width="21.03" height="3.40" fill="url(#cyl)"/>
<rect x="17.30" y="247.34" width="22.63" height="5.40" fill="#050505"/>
<rect x="17.70" y="248.34" width="21.03" height="3.40" fill="url(#b43)"/>
<rect x="17.70" y="248.34" width="21.03" height="3.40" fill="url(#cyl)"/>
<rect x="17.30" y="240.19" width="22.63" height="5.40" fill="#050505"/>
<rect x="17.70" y="241.19" width="21.03" height="3.40" fill="url(#b44)"/>
<rect x="17.70" y="241.19" width="21.03" height="3.40" fill="url(#cyl)"/>
<rect x="17.30" y="233.04" width="19.91" height="5.40" fill="#050505"/>
<rect x="17.70" y="234.04" width="18.31" height="3.40" fill="url(#b45)"/>
<rect x="17.70" y="234.04" width="18.31" height="3.40" fill="url(#cyl)"/>
<rect x="17.30" y="225.89" width="22.63" height="5.40" fill="#050505"/>
<rect x="17.70" y="226.89" width="21.03" height="3.40" fill="url(#b46)"/>
<rect x="17.70" y="226.89" width="21.03" height="3.40" fill="url(#cyl)"/>
<line x1="61.50" y1="226.00" x2="61.50" y2="562.00" stroke="#8e8e8e" stroke-width="1.2" stroke-opacity="0.3"/>
<line x1="107.50" y1="226.00" x2="107.50" y2="562.00" stroke="#8e8e8e" stroke-width="1.2" stroke-opacity="0.3"/>
<line x1="152.50" y1="226.00" x2="152.50" y2="562.00" stroke="#8e8e8e" stroke-width="1.2" stroke-opacity="0.3"/>
<line x1="197.50" y1="226.00" x2="197.50" y2="562.00" stroke="#8e8e8e" stroke-width="1.2" stroke-opacity="0.3"/>
<line x1="242.50" y1="226.00" x2="242.50" y2="562.00" stroke="#8e8e8e" stroke-width="1.2" stroke-opacity="0.3"/>
<line x1="288.50" y1="226.00" x2="288.50" y2="562.00" stroke="#8e8e8e" stroke-width="1.2" stroke-opacity="0.3"/>
<line x1="333.50" y1="226.00" x2="333.50" y2="562.00" stroke="#8e8e8e" stroke-width="1.2" stroke-opacity="0.3"/>
<rect x="401.40" y="73.30" width="156.00" height="341.70" fill="#242424"/>
<line x1="395.90" y1="73.30" x2="401.40" y2="73.30" stroke="#d0d0d0" stroke-width="1.4"/>
<text transform="translate(387.65 78.40) scale(1.0000 1)" font-size="14.83" fill="#d6d6d6">4</text>
<line x1="401.40" y1="116.01" x2="557.40" y2="116.01" stroke="#8e8e8e" stroke-width="1.2"/>
<line x1="395.90" y1="116.01" x2="401.40" y2="116.01" stroke="#d0d0d0" stroke-width="1.4"/>
<text transform="translate(387.65 121.11) scale(1.0000 1)" font-size="14.83" fill="#d6d6d6">3</text>
<line x1="401.40" y1="158.72" x2="557.40" y2="158.72" stroke="#8e8e8e" stroke-width="1.2"/>
<line x1="395.90" y1="158.72" x2="401.40" y2="158.72" stroke="#d0d0d0" stroke-width="1.4"/>
<text transform="translate(387.65 163.82) scale(1.0000 1)" font-size="14.83" fill="#d6d6d6">2</text>
<line x1="401.40" y1="201.44" x2="557.40" y2="201.44" stroke="#8e8e8e" stroke-width="1.2"/>
<line x1="395.90" y1="201.44" x2="401.40" y2="201.44" stroke="#d0d0d0" stroke-width="1.4"/>
<text transform="translate(387.65 206.54) scale(1.0000 1)" font-size="14.83" fill="#d6d6d6">1</text>
<line x1="401.40" y1="244.15" x2="557.40" y2="244.15" stroke="#8e8e8e" stroke-width="1.2"/>
<line x1="395.90" y1="244.15" x2="401.40" y2="244.15" stroke="#d0d0d0" stroke-width="1.4"/>
<text transform="translate(387.65 249.25) scale(1.0000 1)" font-size="14.83" fill="#d6d6d6">0</text>
<line x1="401.40" y1="286.86" x2="557.40" y2="286.86" stroke="#8e8e8e" stroke-width="1.2"/>
<line x1="395.90" y1="286.86" x2="401.40" y2="286.86" stroke="#d0d0d0" stroke-width="1.4"/>
<text transform="translate(382.72 291.96) scale(1.0000 1)" font-size="14.83" fill="#d6d6d6">-1</text>
<line x1="401.40" y1="329.57" x2="557.40" y2="329.57" stroke="#8e8e8e" stroke-width="1.2"/>
<line x1="395.90" y1="329.57" x2="401.40" y2="329.57" stroke="#d0d0d0" stroke-width="1.4"/>
<text transform="translate(382.72 334.68) scale(1.0000 1)" font-size="14.83" fill="#d6d6d6">-2</text>
<line x1="401.40" y1="372.29" x2="557.40" y2="372.29" stroke="#8e8e8e" stroke-width="1.2"/>
<line x1="395.90" y1="372.29" x2="401.40" y2="372.29" stroke="#d0d0d0" stroke-width="1.4"/>
<text transform="translate(382.72 377.39) scale(1.0000 1)" font-size="14.83" fill="#d6d6d6">-3</text>
<line x1="395.90" y1="415.00" x2="401.40" y2="415.00" stroke="#d0d0d0" stroke-width="1.4"/>
<text transform="translate(382.72 420.10) scale(1.0000 1)" font-size="14.83" fill="#d6d6d6">-4</text>
<rect x="401.40" y="73.30" width="156.00" height="341.70" fill="none" stroke="#8e8e8e" stroke-width="1.4"/>
<rect x="416.90" y="219.59" width="123.70" height="24.56" fill="url(#sal)" stroke="#000" stroke-width="1.3"/>
<text transform="translate(449.72 67.90) scale(0.9200 1)" font-size="15.55" fill="#d8d8d8">DeltaL</text>
<rect x="602.00" y="73.30" width="156.00" height="341.70" fill="#242424"/>
<line x1="596.50" y1="73.30" x2="602.00" y2="73.30" stroke="#d0d0d0" stroke-width="1.4"/>
<text transform="translate(588.25 78.40) scale(1.0000 1)" font-size="14.83" fill="#d6d6d6">4</text>
<line x1="602.00" y1="116.01" x2="758.00" y2="116.01" stroke="#8e8e8e" stroke-width="1.2"/>
<line x1="596.50" y1="116.01" x2="602.00" y2="116.01" stroke="#d0d0d0" stroke-width="1.4"/>
<text transform="translate(588.25 121.11) scale(1.0000 1)" font-size="14.83" fill="#d6d6d6">3</text>
<line x1="602.00" y1="158.72" x2="758.00" y2="158.72" stroke="#8e8e8e" stroke-width="1.2"/>
<line x1="596.50" y1="158.72" x2="602.00" y2="158.72" stroke="#d0d0d0" stroke-width="1.4"/>
<text transform="translate(588.25 163.82) scale(1.0000 1)" font-size="14.83" fill="#d6d6d6">2</text>
<line x1="602.00" y1="201.44" x2="758.00" y2="201.44" stroke="#8e8e8e" stroke-width="1.2"/>
<line x1="596.50" y1="201.44" x2="602.00" y2="201.44" stroke="#d0d0d0" stroke-width="1.4"/>
<text transform="translate(588.25 206.54) scale(1.0000 1)" font-size="14.83" fill="#d6d6d6">1</text>
<line x1="602.00" y1="244.15" x2="758.00" y2="244.15" stroke="#8e8e8e" stroke-width="1.2"/>
<line x1="596.50" y1="244.15" x2="602.00" y2="244.15" stroke="#d0d0d0" stroke-width="1.4"/>
<text transform="translate(588.25 249.25) scale(1.0000 1)" font-size="14.83" fill="#d6d6d6">0</text>
<line x1="602.00" y1="286.86" x2="758.00" y2="286.86" stroke="#8e8e8e" stroke-width="1.2"/>
<line x1="596.50" y1="286.86" x2="602.00" y2="286.86" stroke="#d0d0d0" stroke-width="1.4"/>
<text transform="translate(583.32 291.96) scale(1.0000 1)" font-size="14.83" fill="#d6d6d6">-1</text>
<line x1="602.00" y1="329.57" x2="758.00" y2="329.57" stroke="#8e8e8e" stroke-width="1.2"/>
<line x1="596.50" y1="329.57" x2="602.00" y2="329.57" stroke="#d0d0d0" stroke-width="1.4"/>
<text transform="translate(583.32 334.68) scale(1.0000 1)" font-size="14.83" fill="#d6d6d6">-2</text>
<line x1="602.00" y1="372.29" x2="758.00" y2="372.29" stroke="#8e8e8e" stroke-width="1.2"/>
<line x1="596.50" y1="372.29" x2="602.00" y2="372.29" stroke="#d0d0d0" stroke-width="1.4"/>
<text transform="translate(583.32 377.39) scale(1.0000 1)" font-size="14.83" fill="#d6d6d6">-3</text>
<line x1="596.50" y1="415.00" x2="602.00" y2="415.00" stroke="#d0d0d0" stroke-width="1.4"/>
<text transform="translate(583.32 420.10) scale(1.0000 1)" font-size="14.83" fill="#d6d6d6">-4</text>
<rect x="602.00" y="73.30" width="156.00" height="341.70" fill="none" stroke="#8e8e8e" stroke-width="1.4"/>
<rect x="617.50" y="162.14" width="123.70" height="82.01" fill="url(#sal)" stroke="#000" stroke-width="1.3"/>
<text transform="translate(649.13 67.90) scale(0.9200 1)" font-size="15.55" fill="#d8d8d8">DeltaC</text>
<rect x="802.00" y="73.30" width="156.00" height="341.70" fill="#242424"/>
<line x1="796.50" y1="73.30" x2="802.00" y2="73.30" stroke="#d0d0d0" stroke-width="1.4"/>
<text transform="translate(788.25 78.40) scale(1.0000 1)" font-size="14.83" fill="#d6d6d6">4</text>
<line x1="802.00" y1="116.01" x2="958.00" y2="116.01" stroke="#8e8e8e" stroke-width="1.2"/>
<line x1="796.50" y1="116.01" x2="802.00" y2="116.01" stroke="#d0d0d0" stroke-width="1.4"/>
<text transform="translate(788.25 121.11) scale(1.0000 1)" font-size="14.83" fill="#d6d6d6">3</text>
<line x1="802.00" y1="158.72" x2="958.00" y2="158.72" stroke="#8e8e8e" stroke-width="1.2"/>
<line x1="796.50" y1="158.72" x2="802.00" y2="158.72" stroke="#d0d0d0" stroke-width="1.4"/>
<text transform="translate(788.25 163.82) scale(1.0000 1)" font-size="14.83" fill="#d6d6d6">2</text>
<line x1="802.00" y1="201.44" x2="958.00" y2="201.44" stroke="#8e8e8e" stroke-width="1.2"/>
<line x1="796.50" y1="201.44" x2="802.00" y2="201.44" stroke="#d0d0d0" stroke-width="1.4"/>
<text transform="translate(788.25 206.54) scale(1.0000 1)" font-size="14.83" fill="#d6d6d6">1</text>
<line x1="802.00" y1="244.15" x2="958.00" y2="244.15" stroke="#8e8e8e" stroke-width="1.2"/>
<line x1="796.50" y1="244.15" x2="802.00" y2="244.15" stroke="#d0d0d0" stroke-width="1.4"/>
<text transform="translate(788.25 249.25) scale(1.0000 1)" font-size="14.83" fill="#d6d6d6">0</text>
<line x1="802.00" y1="286.86" x2="958.00" y2="286.86" stroke="#8e8e8e" stroke-width="1.2"/>
<line x1="796.50" y1="286.86" x2="802.00" y2="286.86" stroke="#d0d0d0" stroke-width="1.4"/>
<text transform="translate(783.32 291.96) scale(1.0000 1)" font-size="14.83" fill="#d6d6d6">-1</text>
<line x1="802.00" y1="329.57" x2="958.00" y2="329.57" stroke="#8e8e8e" stroke-width="1.2"/>
<line x1="796.50" y1="329.57" x2="802.00" y2="329.57" stroke="#d0d0d0" stroke-width="1.4"/>
<text transform="translate(783.32 334.68) scale(1.0000 1)" font-size="14.83" fill="#d6d6d6">-2</text>
<line x1="802.00" y1="372.29" x2="958.00" y2="372.29" stroke="#8e8e8e" stroke-width="1.2"/>
<line x1="796.50" y1="372.29" x2="802.00" y2="372.29" stroke="#d0d0d0" stroke-width="1.4"/>
<text transform="translate(783.32 377.39) scale(1.0000 1)" font-size="14.83" fill="#d6d6d6">-3</text>
<line x1="796.50" y1="415.00" x2="802.00" y2="415.00" stroke="#d0d0d0" stroke-width="1.4"/>
<text transform="translate(783.32 420.10) scale(1.0000 1)" font-size="14.83" fill="#d6d6d6">-4</text>
<rect x="802.00" y="73.30" width="156.00" height="341.70" fill="none" stroke="#8e8e8e" stroke-width="1.4"/>
<rect x="817.50" y="209.98" width="123.70" height="34.17" fill="url(#sal)" stroke="#000" stroke-width="1.3"/>
<text transform="translate(849.13 67.90) scale(0.9200 1)" font-size="15.55" fill="#d8d8d8">DeltaH</text>
<rect x="376.90" y="428.40" width="601.00" height="163.00" fill="#000"/>
<clipPath id="swc"><rect x="376.9" y="428.4" width="601" height="163"/></clipPath><g clip-path="url(#swc)">
<rect x="393.80" y="434.80" width="60.40" height="119.00" fill="#ffffff"/>
<rect x="395.00" y="436.00" width="58.00" height="116.60" fill="#c8c8c8"/>
<rect x="395.40" y="436.40" width="57.20" height="115.80" fill="url(#sw0)"/>
<text transform="translate(407.96 568.60) scale(0.9700 1)" font-size="12.94" fill="#f4f4f4">White</text>
<rect x="462.90" y="434.80" width="60.40" height="119.00" fill="#ffffff"/>
<rect x="464.10" y="436.00" width="58.00" height="116.60" fill="#c8c8c8"/>
<rect x="464.50" y="436.40" width="57.20" height="115.80" fill="url(#sw1)"/>
<text transform="translate(470.78 568.60) scale(0.9700 1)" font-size="12.94" fill="#f4f4f4">Gray 80</text>
<rect x="532.00" y="434.80" width="60.40" height="119.00" fill="#ffffff"/>
<rect x="533.20" y="436.00" width="58.00" height="116.60" fill="#c8c8c8"/>
<rect x="533.60" y="436.40" width="57.20" height="115.80" fill="url(#sw2)"/>
<text transform="translate(539.88 568.60) scale(0.9700 1)" font-size="12.94" fill="#f4f4f4">Gray 65</text>
<rect x="601.10" y="434.80" width="60.40" height="119.00" fill="#ffffff"/>
<rect x="602.30" y="436.00" width="58.00" height="116.60" fill="#c8c8c8"/>
<rect x="602.70" y="436.40" width="57.20" height="115.80" fill="url(#sw3)"/>
<text transform="translate(608.98 568.60) scale(0.9700 1)" font-size="12.94" fill="#f4f4f4">Gray 50</text>
<rect x="670.20" y="434.80" width="60.40" height="119.00" fill="#ffffff"/>
<rect x="671.40" y="436.00" width="58.00" height="116.60" fill="#c8c8c8"/>
<rect x="671.80" y="436.40" width="57.20" height="115.80" fill="url(#sw4)"/>
<text transform="translate(678.08 568.60) scale(0.9700 1)" font-size="12.94" fill="#f4f4f4">Gray 35</text>
<rect x="739.30" y="434.80" width="60.40" height="119.00" fill="#ffffff"/>
<rect x="740.50" y="436.00" width="58.00" height="116.60" fill="#c8c8c8"/>
<rect x="740.90" y="436.40" width="57.20" height="115.80" fill="url(#sw5)"/>
<text transform="translate(754.16 568.60) scale(0.9700 1)" font-size="12.94" fill="#f4f4f4">Black</text>
<rect x="808.40" y="434.80" width="60.40" height="119.00" fill="#ffffff"/>
<rect x="809.60" y="436.00" width="58.00" height="116.60" fill="#c8c8c8"/>
<rect x="810.00" y="436.40" width="57.20" height="115.80" fill="url(#sw6)"/>
<text transform="translate(811.40 568.60) scale(0.9700 1)" font-size="12.94" fill="#f4f4f4">Dark Skin</text>
<rect x="877.50" y="434.80" width="60.40" height="119.00" fill="#ffffff"/>
<rect x="878.70" y="436.00" width="58.00" height="116.60" fill="#c8c8c8"/>
<rect x="879.10" y="436.40" width="57.20" height="115.80" fill="url(#sw7)"/>
<text transform="translate(880.15 568.60) scale(0.9700 1)" font-size="12.94" fill="#f4f4f4">Light Skin</text>
<rect x="946.60" y="434.80" width="60.40" height="119.00" fill="#ffffff"/>
<rect x="947.80" y="436.00" width="58.00" height="116.60" fill="#c8c8c8"/>
<rect x="948.20" y="436.40" width="57.20" height="115.80" fill="url(#sw8)"/>
<text transform="translate(952.04 568.60) scale(0.9700 1)" font-size="12.94" fill="#f4f4f4">Blue Sky</text>
</g>
<g transform="translate(390.4 478.5) rotate(-90)"><text transform="translate(0.00 0.00) scale(0.9735 1)" font-size="12.94" fill="#f4f4f4">Actual</text></g>
<g transform="translate(390.4 545) rotate(-90)"><text transform="translate(0.00 0.00) scale(0.9596 1)" font-size="12.94" fill="#f4f4f4">Target</text></g>
<rect x="376.90" y="591.00" width="601.00" height="16.50" fill="#5f5f5f"/>
<rect x="377.50" y="592.00" width="14.50" height="14.50" fill="#787878" rx="3"/>
<path d="M387.6 594.5 L387.6 604.3 L382.3 599.4Z" fill="#3a3a3a"/>
<rect x="394.80" y="592.20" width="101.50" height="14.20" fill="#404040" rx="7"/>
<rect x="962.30" y="592.00" width="14.70" height="14.50" fill="#787878" rx="3"/>
<path d="M967 594.5 L967 604.3 L972.3 599.4Z" fill="#3a3a3a"/>
<rect x="988.50" y="45.50" width="697.00" height="559.00" fill="none" stroke="#cf8f66" stroke-width="7"/>
<rect x="1029.50" y="71.50" width="648.50" height="499.50" fill="#242424"/>
<g clip-path="url(#plot)"><g clip-path="url(#loc)" shape-rendering="crispEdges"><rect x="1056" y="83" width="71" height="2" fill="url(#g0)"/><rect x="1049" y="85" width="101" height="2" fill="url(#g1)"/><rect x="1045" y="87" width="125" height="2" fill="url(#g2)"/><rect x="1041" y="89" width="148" height="2" fill="url(#g3)"/><rect x="1039" y="91" width="168" height="2" fill="url(#g4)"/><rect x="1037" y="93" width="188" height="2" fill="url(#g5)"/><rect x="1036" y="95" width="207" height="2" fill="url(#g6)"/><rect x="1034" y="97" width="226" height="2" fill="url(#g7)"/><rect x="1033" y="99" width="245" height="2" fill="url(#g8)"/><rect x="1032" y="101" width="263" height="2" fill="url(#g9)"/><rect x="1032" y="103" width="280" height="2" fill="url(#g10)"/><rect x="1031" y="105" width="299" height="2" fill="url(#g11)"/><rect x="1030" y="107" width="317" height="2" fill="url(#g12)"/><rect x="1030" y="109" width="335" height="2" fill="url(#g13)"/><rect x="1030" y="111" width="352" height="2" fill="url(#g14)"/><rect x="1029" y="113" width="370" height="2" fill="url(#g15)"/><rect x="1029" y="115" width="388" height="2" fill="url(#g16)"/><rect x="1029" y="117" width="405" height="2" fill="url(#g17)"/><rect x="1029" y="119" width="422" height="2" fill="url(#g18)"/><rect x="1029" y="121" width="440" height="2" fill="url(#g19)"/><rect x="1029" y="123" width="457" height="2" fill="url(#g20)"/><rect x="1029" y="125" width="475" height="2" fill="url(#g21)"/><rect x="1029" y="127" width="492" height="2" fill="url(#g22)"/><rect x="1029" y="129" width="510" height="2" fill="url(#g23)"/><rect x="1029" y="131" width="527" height="2" fill="url(#g24)"/><rect x="1030" y="133" width="543" height="2" fill="url(#g25)"/><rect x="1030" y="135" width="561" height="2" fill="url(#g26)"/><rect x="1030" y="137" width="578" height="2" fill="url(#g27)"/><rect x="1030" y="139" width="596" height="2" fill="url(#g28)"/><rect x="1031" y="141" width="612" height="2" fill="url(#g29)"/><rect x="1031" y="143" width="629" height="2" fill="url(#g30)"/><rect x="1031" y="145" width="647" height="2" fill="url(#g31)"/><rect x="1032" y="147" width="647" height="2" fill="url(#g32)"/><rect x="1032" y="149" width="647" height="2" fill="url(#g33)"/><rect x="1033" y="151" width="646" height="2" fill="url(#g34)"/><rect x="1033" y="153" width="646" height="2" fill="url(#g35)"/><rect x="1033" y="155" width="646" height="2" fill="url(#g36)"/><rect x="1034" y="157" width="645" height="2" fill="url(#g37)"/><rect x="1034" y="159" width="645" height="2" fill="url(#g38)"/><rect x="1035" y="161" width="644" height="2" fill="url(#g39)"/><rect x="1035" y="163" width="644" height="2" fill="url(#g40)"/><rect x="1036" y="165" width="643" height="2" fill="url(#g41)"/><rect x="1036" y="167" width="643" height="2" fill="url(#g42)"/><rect x="1037" y="169" width="642" height="2" fill="url(#g43)"/><rect x="1037" y="171" width="642" height="2" fill="url(#g44)"/><rect x="1038" y="173" width="641" height="2" fill="url(#g45)"/><rect x="1039" y="175" width="640" height="2" fill="url(#g46)"/><rect x="1039" y="177" width="640" height="2" fill="url(#g47)"/><rect x="1040" y="179" width="637" height="2" fill="url(#g48)"/><rect x="1040" y="181" width="635" height="2" fill="url(#g49)"/><rect x="1041" y="183" width="632" height="2" fill="url(#g50)"/><rect x="1042" y="185" width="629" height="2" fill="url(#g51)"/><rect x="1042" y="187" width="627" height="2" fill="url(#g52)"/><rect x="1043" y="189" width="624" height="2" fill="url(#g53)"/><rect x="1044" y="191" width="621" height="2" fill="url(#g54)"/><rect x="1044" y="193" width="619" height="2" fill="url(#g55)"/><rect x="1045" y="195" width="616" height="2" fill="url(#g56)"/><rect x="1046" y="197" width="613" height="2" fill="url(#g57)"/><rect x="1047" y="199" width="610" height="2" fill="url(#g58)"/><rect x="1047" y="201" width="608" height="2" fill="url(#g59)"/><rect x="1048" y="203" width="605" height="2" fill="url(#g60)"/><rect x="1049" y="205" width="602" height="2" fill="url(#g61)"/><rect x="1049" y="207" width="600" height="2" fill="url(#g62)"/><rect x="1050" y="209" width="597" height="2" fill="url(#g63)"/><rect x="1051" y="211" width="594" height="2" fill="url(#g64)"/><rect x="1052" y="213" width="592" height="2" fill="url(#g65)"/><rect x="1052" y="215" width="590" height="2" fill="url(#g66)"/><rect x="1053" y="217" width="587" height="2" fill="url(#g67)"/><rect x="1054" y="219" width="584" height="2" fill="url(#g68)"/><rect x="1055" y="221" width="581" height="2" fill="url(#g69)"/><rect x="1056" y="223" width="578" height="2" fill="url(#g70)"/><rect x="1056" y="225" width="576" height="2" fill="url(#g71)"/><rect x="1057" y="227" width="573" height="2" fill="url(#g72)"/><rect x="1058" y="229" width="570" height="2" fill="url(#g73)"/><rect x="1059" y="231" width="567" height="2" fill="url(#g74)"/><rect x="1060" y="233" width="564" height="2" fill="url(#g75)"/><rect x="1060" y="235" width="562" height="2" fill="url(#g76)"/><rect x="1061" y="237" width="559" height="2" fill="url(#g77)"/><rect x="1062" y="239" width="556" height="2" fill="url(#g78)"/><rect x="1063" y="241" width="553" height="2" fill="url(#g79)"/><rect x="1064" y="243" width="550" height="2" fill="url(#g80)"/><rect x="1065" y="245" width="547" height="2" fill="url(#g81)"/><rect x="1066" y="247" width="544" height="2" fill="url(#g82)"/><rect x="1066" y="249" width="542" height="2" fill="url(#g83)"/><rect x="1067" y="251" width="540" height="2" fill="url(#g84)"/><rect x="1068" y="253" width="537" height="2" fill="url(#g85)"/><rect x="1069" y="255" width="534" height="2" fill="url(#g86)"/><rect x="1070" y="257" width="531" height="2" fill="url(#g87)"/><rect x="1071" y="259" width="528" height="2" fill="url(#g88)"/><rect x="1072" y="261" width="525" height="2" fill="url(#g89)"/><rect x="1073" y="263" width="522" height="2" fill="url(#g90)"/><rect x="1074" y="265" width="519" height="2" fill="url(#g91)"/><rect x="1075" y="267" width="516" height="2" fill="url(#g92)"/><rect x="1075" y="269" width="514" height="2" fill="url(#g93)"/><rect x="1076" y="271" width="511" height="2" fill="url(#g94)"/><rect x="1077" y="273" width="508" height="2" fill="url(#g95)"/><rect x="1078" y="275" width="505" height="2" fill="url(#g96)"/><rect x="1079" y="277" width="502" height="2" fill="url(#g97)"/><rect x="1080" y="279" width="499" height="2" fill="url(#g98)"/><rect x="1081" y="281" width="496" height="2" fill="url(#g99)"/><rect x="1082" y="283" width="493" height="2" fill="url(#g100)"/><rect x="1083" y="285" width="490" height="2" fill="url(#g101)"/><rect x="1084" y="287" width="488" height="2" fill="url(#g102)"/><rect x="1085" y="289" width="485" height="2" fill="url(#g103)"/><rect x="1086" y="291" width="482" height="2" fill="url(#g104)"/><rect x="1087" y="293" width="479" height="2" fill="url(#g105)"/><rect x="1088" y="295" width="476" height="2" fill="url(#g106)"/><rect x="1089" y="297" width="473" height="2" fill="url(#g107)"/><rect x="1090" y="299" width="470" height="2" fill="url(#g108)"/><rect x="1091" y="301" width="467" height="2" fill="url(#g109)"/><rect x="1093" y="303" width="463" height="2" fill="url(#g110)"/><rect x="1094" y="305" width="460" height="2" fill="url(#g111)"/><rect x="1095" y="307" width="457" height="2" fill="url(#g112)"/><rect x="1096" y="309" width="454" height="2" fill="url(#g113)"/><rect x="1097" y="311" width="451" height="2" fill="url(#g114)"/><rect x="1098" y="313" width="448" height="2" fill="url(#g115)"/><rect x="1099" y="315" width="445" height="2" fill="url(#g116)"/><rect x="1100" y="317" width="442" height="2" fill="url(#g117)"/><rect x="1101" y="319" width="439" height="2" fill="url(#g118)"/><rect x="1103" y="321" width="435" height="2" fill="url(#g119)"/><rect x="1104" y="323" width="433" height="2" fill="url(#g120)"/><rect x="1105" y="325" width="430" height="2" fill="url(#g121)"/><rect x="1106" y="327" width="427" height="2" fill="url(#g122)"/><rect x="1107" y="329" width="424" height="2" fill="url(#g123)"/><rect x="1108" y="331" width="421" height="2" fill="url(#g124)"/><rect x="1109" y="333" width="418" height="2" fill="url(#g125)"/><rect x="1111" y="335" width="414" height="2" fill="url(#g126)"/><rect x="1112" y="337" width="411" height="2" fill="url(#g127)"/><rect x="1113" y="339" width="408" height="2" fill="url(#g128)"/><rect x="1114" y="341" width="405" height="2" fill="url(#g129)"/><rect x="1115" y="343" width="402" height="2" fill="url(#g130)"/><rect x="1116" y="345" width="399" height="2" fill="url(#g131)"/><rect x="1118" y="347" width="395" height="2" fill="url(#g132)"/><rect x="1119" y="349" width="392" height="2" fill="url(#g133)"/><rect x="1120" y="351" width="389" height="2" fill="url(#g134)"/><rect x="1121" y="353" width="386" height="2" fill="url(#g135)"/><rect x="1122" y="355" width="383" height="2" fill="url(#g136)"/><rect x="1124" y="357" width="379" height="2" fill="url(#g137)"/><rect x="1125" y="359" width="377" height="2" fill="url(#g138)"/><rect x="1126" y="361" width="374" height="2" fill="url(#g139)"/><rect x="1127" y="363" width="371" height="2" fill="url(#g140)"/><rect x="1128" y="365" width="368" height="2" fill="url(#g141)"/><rect x="1130" y="367" width="364" height="2" fill="url(#g142)"/><rect x="1131" y="369" width="361" height="2" fill="url(#g143)"/><rect x="1132" y="371" width="358" height="2" fill="url(#g144)"/><rect x="1133" y="373" width="355" height="2" fill="url(#g145)"/><rect x="1135" y="375" width="351" height="2" fill="url(#g146)"/><rect x="1136" y="377" width="348" height="2" fill="url(#g147)"/><rect x="1137" y="379" width="345" height="2" fill="url(#g148)"/><rect x="1138" y="381" width="342" height="2" fill="url(#g149)"/><rect x="1140" y="383" width="338" height="2" fill="url(#g150)"/><rect x="1141" y="385" width="335" height="2" fill="url(#g151)"/><rect x="1142" y="387" width="332" height="2" fill="url(#g152)"/><rect x="1143" y="389" width="329" height="2" fill="url(#g153)"/><rect x="1145" y="391" width="325" height="2" fill="url(#g154)"/><rect x="1146" y="393" width="322" height="2" fill="url(#g155)"/><rect x="1147" y="395" width="319" height="2" fill="url(#g156)"/><rect x="1149" y="397" width="316" height="2" fill="url(#g157)"/><rect x="1150" y="399" width="313" height="2" fill="url(#g158)"/><rect x="1151" y="401" width="310" height="2" fill="url(#g159)"/><rect x="1153" y="403" width="306" height="2" fill="url(#g160)"/><rect x="1154" y="405" width="303" height="2" fill="url(#g161)"/><rect x="1155" y="407" width="300" height="2" fill="url(#g162)"/><rect x="1157" y="409" width="296" height="2" fill="url(#g163)"/><rect x="1158" y="411" width="293" height="2" fill="url(#g164)"/><rect x="1159" y="413" width="290" height="2" fill="url(#g165)"/><rect x="1161" y="415" width="286" height="2" fill="url(#g166)"/><rect x="1162" y="417" width="283" height="2" fill="url(#g167)"/><rect x="1164" y="419" width="279" height="2" fill="url(#g168)"/><rect x="1165" y="421" width="276" height="2" fill="url(#g169)"/><rect x="1166" y="423" width="273" height="2" fill="url(#g170)"/><rect x="1168" y="425" width="269" height="2" fill="url(#g171)"/><rect x="1169" y="427" width="266" height="2" fill="url(#g172)"/><rect x="1171" y="429" width="262" height="2" fill="url(#g173)"/><rect x="1172" y="431" width="259" height="2" fill="url(#g174)"/><rect x="1174" y="433" width="256" height="2" fill="url(#g175)"/><rect x="1175" y="435" width="253" height="2" fill="url(#g176)"/><rect x="1177" y="437" width="249" height="2" fill="url(#g177)"/><rect x="1178" y="439" width="246" height="2" fill="url(#g178)"/><rect x="1180" y="441" width="242" height="2" fill="url(#g179)"/><rect x="1181" y="443" width="239" height="2" fill="url(#g180)"/><rect x="1183" y="445" width="235" height="2" fill="url(#g181)"/><rect x="1184" y="447" width="232" height="2" fill="url(#g182)"/><rect x="1186" y="449" width="228" height="2" fill="url(#g183)"/><rect x="1187" y="451" width="225" height="2" fill="url(#g184)"/><rect x="1189" y="453" width="221" height="2" fill="url(#g185)"/><rect x="1190" y="455" width="218" height="2" fill="url(#g186)"/><rect x="1192" y="457" width="214" height="2" fill="url(#g187)"/><rect x="1194" y="459" width="210" height="2" fill="url(#g188)"/><rect x="1195" y="461" width="207" height="2" fill="url(#g189)"/><rect x="1197" y="463" width="203" height="2" fill="url(#g190)"/><rect x="1199" y="465" width="199" height="2" fill="url(#g191)"/><rect x="1200" y="467" width="196" height="2" fill="url(#g192)"/><rect x="1202" y="469" width="193" height="2" fill="url(#g193)"/><rect x="1204" y="471" width="189" height="2" fill="url(#g194)"/><rect x="1206" y="473" width="185" height="2" fill="url(#g195)"/><rect x="1207" y="475" width="182" height="2" fill="url(#g196)"/><rect x="1209" y="477" width="178" height="2" fill="url(#g197)"/><rect x="1211" y="479" width="174" height="2" fill="url(#g198)"/><rect x="1213" y="481" width="170" height="2" fill="url(#g199)"/><rect x="1214" y="483" width="167" height="2" fill="url(#g200)"/><rect x="1216" y="485" width="163" height="2" fill="url(#g201)"/><rect x="1218" y="487" width="159" height="2" fill="url(#g202)"/><rect x="1220" y="489" width="155" height="2" fill="url(#g203)"/><rect x="1222" y="491" width="151" height="2" fill="url(#g204)"/><rect x="1224" y="493" width="147" height="2" fill="url(#g205)"/><rect x="1226" y="495" width="143" height="2" fill="url(#g206)"/><rect x="1228" y="497" width="139" height="2" fill="url(#g207)"/><rect x="1230" y="499" width="135" height="2" fill="url(#g208)"/><rect x="1233" y="501" width="130" height="2" fill="url(#g209)"/><rect x="1235" y="503" width="126" height="2" fill="url(#g210)"/><rect x="1237" y="505" width="122" height="2" fill="url(#g211)"/><rect x="1239" y="507" width="119" height="2" fill="url(#g212)"/><rect x="1241" y="509" width="115" height="2" fill="url(#g213)"/><rect x="1244" y="511" width="110" height="2" fill="url(#g214)"/><rect x="1246" y="513" width="106" height="2" fill="url(#g215)"/><rect x="1248" y="515" width="102" height="2" fill="url(#g216)"/><rect x="1251" y="517" width="97" height="2" fill="url(#g217)"/><rect x="1253" y="519" width="93" height="2" fill="url(#g218)"/><rect x="1255" y="521" width="89" height="2" fill="url(#g219)"/><rect x="1258" y="523" width="84" height="2" fill="url(#g220)"/><rect x="1260" y="525" width="80" height="2" fill="url(#g221)"/><rect x="1263" y="527" width="75" height="2" fill="url(#g222)"/><rect x="1265" y="529" width="71" height="2" fill="url(#g223)"/><rect x="1268" y="531" width="66" height="2" fill="url(#g224)"/><rect x="1270" y="533" width="62" height="2" fill="url(#g225)"/><rect x="1272" y="535" width="58" height="2" fill="url(#g226)"/><rect x="1275" y="537" width="53" height="2" fill="url(#g227)"/><rect x="1277" y="539" width="49" height="2" fill="url(#g228)"/><rect x="1280" y="541" width="44" height="2" fill="url(#g229)"/><rect x="1282" y="543" width="41" height="2" fill="url(#g230)"/><rect x="1284" y="545" width="37" height="2" fill="url(#g231)"/><rect x="1287" y="547" width="32" height="2" fill="url(#g232)"/><rect x="1289" y="549" width="28" height="2" fill="url(#g233)"/><rect x="1292" y="551" width="23" height="2" fill="url(#g234)"/><rect x="1294" y="553" width="19" height="2" fill="url(#g235)"/><rect x="1297" y="555" width="14" height="2" fill="url(#g236)"/><rect x="1300" y="557" width="9" height="2" fill="url(#g237)"/></g><path d="M1306.7 557.7 L1306.7 557.7 L1306.7 557.7 L1306.6 557.7 L1306.6 557.7 L1306.5 557.7 L1306.4 557.8 L1306.4 557.9 L1306.3 558.0 L1306.2 558.0 L1306.1 558.0 L1306.1 558.0 L1306.0 558.0 L1305.9 558.0 L1305.8 558.1 L1305.7 558.2 L1305.5 558.2 L1305.4 558.3 L1305.3 558.3 L1305.1 558.3 L1305.0 558.2 L1304.8 558.2 L1304.7 558.2 L1304.5 558.2 L1304.3 558.2 L1304.1 558.3 L1303.9 558.3 L1303.7 558.3 L1303.4 558.3 L1303.1 558.1 L1302.7 558.0 L1302.3 557.7 L1301.8 557.5 L1301.2 557.1 L1300.5 556.7 L1299.8 556.2 L1299.0 555.6 L1298.1 555.0 L1297.2 554.3 L1296.3 553.5 L1295.2 552.7 L1294.0 551.7 L1292.6 550.6 L1291.2 549.5 L1289.7 548.2 L1288.1 546.9 L1286.5 545.5 L1284.7 544.0 L1282.8 542.4 L1280.8 540.7 L1278.7 539.0 L1276.5 537.1 L1274.1 535.2 L1271.5 533.0 L1268.7 530.7 L1265.8 528.3 L1262.7 525.8 L1259.5 523.1 L1256.1 520.4 L1252.6 517.5 L1248.9 514.3 L1245.0 510.9 L1240.9 507.2 L1236.6 503.3 L1232.0 499.0 L1227.3 494.5 L1222.5 489.8 L1217.4 484.5 L1211.7 478.4 L1205.6 471.4 L1199.0 463.6 L1192.0 455.1 L1184.8 445.9 L1177.3 435.9 L1169.4 425.1 L1161.3 413.6 L1153.0 401.5 L1144.6 388.5 L1135.9 374.8 L1127.2 360.6 L1118.6 346.2 L1110.0 331.5 L1101.4 316.4 L1093.1 301.3 L1085.4 286.4 L1078.2 271.7 L1071.4 257.0 L1065.2 242.6 L1059.5 229.0 L1054.3 216.0 L1049.6 203.4 L1045.5 191.6 L1041.9 180.6 L1038.8 170.5 L1036.3 161.2 L1034.3 152.6 L1032.8 144.6 L1031.6 137.4 L1030.9 130.9 L1030.5 125.0 L1030.6 119.6 L1030.9 114.6 L1031.6 110.1 L1032.7 106.1 L1034.0 102.4 L1035.7 99.1 L1037.6 96.2 L1039.9 93.7 L1042.3 91.5 L1044.9 89.6 L1047.8 88.1 L1050.8 86.9 L1054.0 85.9 L1057.3 85.1 L1060.8 84.5 L1064.3 84.2 L1067.9 83.8 L1071.6 83.6 L1075.4 83.4 L1079.3 83.4 L1083.1 83.3 L1087.0 83.3 L1090.8 83.3 L1094.7 83.4 L1098.6 83.5 L1102.5 83.7 L1106.5 83.8 L1110.6 84.0 L1114.7 84.3 L1118.9 84.5 L1123.2 84.8 L1127.6 85.2 L1132.0 85.5 L1136.6 85.9 L1141.2 86.3 L1146.0 86.8 L1150.9 87.2 L1155.9 87.7 L1161.0 88.2 L1166.2 88.8 L1171.6 89.3 L1177.1 89.9 L1182.8 90.5 L1188.6 91.1 L1194.6 91.8 L1200.7 92.5 L1207.0 93.1 L1213.4 93.9 L1220.0 94.6 L1226.8 95.4 L1233.7 96.2 L1240.8 97.0 L1248.1 97.8 L1255.6 98.6 L1263.2 99.5 L1271.0 100.4 L1279.0 101.3 L1287.2 102.3 L1295.5 103.2 L1304.0 104.2 L1312.7 105.2 L1321.6 106.2 L1330.6 107.3 L1339.8 108.3 L1349.1 109.4 L1358.5 110.5 L1368.1 111.6 L1377.8 112.7 L1387.5 113.8 L1397.4 114.9 L1407.3 116.1 L1417.2 117.2 L1427.1 118.4 L1436.7 119.5 L1446.3 120.6 L1455.9 121.7 L1465.4 122.8 L1474.8 123.9 L1484.3 124.9 L1493.6 126.0 L1502.6 127.1 L1511.4 128.1 L1520.0 129.0 L1528.3 130.0 L1536.4 130.9 L1544.2 131.8 L1551.9 132.7 L1559.2 133.5 L1566.3 134.4 L1573.0 135.1 L1579.5 135.9 L1585.7 136.6 L1591.7 137.3 L1597.3 137.9 L1602.8 138.6 L1607.9 139.1 L1612.9 139.7 L1617.7 140.3 L1622.2 140.8 L1626.6 141.3 L1630.9 141.8 L1635.0 142.3 L1638.9 142.7 L1642.7 143.2 L1646.4 143.6 L1649.9 144.0 L1653.3 144.4 L1656.5 144.7 L1659.6 145.1 L1662.4 145.4 L1665.2 145.7 L1667.8 146.0 L1670.2 146.3 L1672.5 146.5 L1674.6 146.8 L1676.6 147.0 L1678.4 147.2 L1680.2 147.4 L1681.9 147.6 L1683.4 147.8 L1684.9 148.0 L1686.2 148.1 L1687.5 148.3 L1688.6 148.4 L1689.7 148.5 L1690.6 148.6 L1691.4 148.7 L1692.1 148.8 L1692.8 148.9 L1693.5 149.0 L1694.2 149.1 L1694.8 149.1 L1695.4 149.2 L1695.9 149.3 L1696.4 149.3 L1696.9 149.4 L1697.4 149.4 L1697.9 149.5 L1698.4 149.5 L1698.9 149.6 L1699.4 149.7 L1699.9 149.7 L1700.3 149.8 L1700.8 149.8 L1701.2 149.9 L1701.5 149.9 L1701.8 149.9 L1702.1 150.0 L1702.3 150.0 L1702.5 150.0 L1702.7 150.0 L1702.8 150.1 L1702.9 150.1 L1703.0 150.1 L1703.1 150.1 L1703.2 150.1 L1703.2 150.1Z M1565.8 134.2 L1135.6 90.9 L1218.7 440.1Z" fill="#000" fill-opacity="0.40" fill-rule="evenodd"/></g>
<rect x="1029.20" y="71.20" width="649.10" height="500.10" fill="none" stroke="#9a9a9a" stroke-width="1.5"/>
<text transform="translate(1293.80 66.30) scale(0.9552 1)" font-size="15.26" fill="#d8d8d8">CIE 1976 u'v'</text>
<line x1="1029.50" y1="571.00" x2="1029.50" y2="577.50" stroke="#d8d8d8" stroke-width="1.8"/>
<text transform="translate(1025.42 593.40) scale(1.0000 1)" font-size="14.68" fill="#d6d6d6">0</text>
<line x1="1023.50" y1="571.20" x2="1029.50" y2="571.20" stroke="#d8d8d8" stroke-width="1.8"/>
<text transform="translate(1014.84 578.60) scale(1.0000 1)" font-size="14.68" fill="#d6d6d6">0</text>
<line x1="1083.50" y1="571.00" x2="1083.50" y2="577.50" stroke="#d8d8d8" stroke-width="1.8"/>
<text transform="translate(1069.21 593.40) scale(1.0000 1)" font-size="14.68" fill="#d6d6d6">0,05</text>
<line x1="1023.50" y1="529.72" x2="1029.50" y2="529.72" stroke="#d8d8d8" stroke-width="1.8"/>
<text transform="translate(994.43 535.42) scale(1.0000 1)" font-size="14.68" fill="#d6d6d6">0,05</text>
<line x1="1137.50" y1="571.00" x2="1137.50" y2="577.50" stroke="#d8d8d8" stroke-width="1.8"/>
<text transform="translate(1127.30 593.40) scale(1.0000 1)" font-size="14.68" fill="#d6d6d6">0,1</text>
<line x1="1023.50" y1="488.24" x2="1029.50" y2="488.24" stroke="#d8d8d8" stroke-width="1.8"/>
<text transform="translate(1002.59 493.94) scale(1.0000 1)" font-size="14.68" fill="#d6d6d6">0,1</text>
<line x1="1191.50" y1="571.00" x2="1191.50" y2="577.50" stroke="#d8d8d8" stroke-width="1.8"/>
<text transform="translate(1177.21 593.40) scale(1.0000 1)" font-size="14.68" fill="#d6d6d6">0,15</text>
<line x1="1023.50" y1="446.76" x2="1029.50" y2="446.76" stroke="#d8d8d8" stroke-width="1.8"/>
<text transform="translate(994.43 452.46) scale(1.0000 1)" font-size="14.68" fill="#d6d6d6">0,15</text>
<line x1="1245.50" y1="571.00" x2="1245.50" y2="577.50" stroke="#d8d8d8" stroke-width="1.8"/>
<text transform="translate(1235.30 593.40) scale(1.0000 1)" font-size="14.68" fill="#d6d6d6">0,2</text>
<line x1="1023.50" y1="405.28" x2="1029.50" y2="405.28" stroke="#d8d8d8" stroke-width="1.8"/>
<text transform="translate(1002.59 410.98) scale(1.0000 1)" font-size="14.68" fill="#d6d6d6">0,2</text>
<line x1="1299.50" y1="571.00" x2="1299.50" y2="577.50" stroke="#d8d8d8" stroke-width="1.8"/>
<text transform="translate(1285.21 593.40) scale(1.0000 1)" font-size="14.68" fill="#d6d6d6">0,25</text>
<line x1="1023.50" y1="363.80" x2="1029.50" y2="363.80" stroke="#d8d8d8" stroke-width="1.8"/>
<text transform="translate(994.43 369.50) scale(1.0000 1)" font-size="14.68" fill="#d6d6d6">0,25</text>
<line x1="1353.50" y1="571.00" x2="1353.50" y2="577.50" stroke="#d8d8d8" stroke-width="1.8"/>
<text transform="translate(1343.30 593.40) scale(1.0000 1)" font-size="14.68" fill="#d6d6d6">0,3</text>
<line x1="1023.50" y1="322.32" x2="1029.50" y2="322.32" stroke="#d8d8d8" stroke-width="1.8"/>
<text transform="translate(1002.59 328.02) scale(1.0000 1)" font-size="14.68" fill="#d6d6d6">0,3</text>
<line x1="1407.50" y1="571.00" x2="1407.50" y2="577.50" stroke="#d8d8d8" stroke-width="1.8"/>
<text transform="translate(1393.21 593.40) scale(1.0000 1)" font-size="14.68" fill="#d6d6d6">0,35</text>
<line x1="1023.50" y1="280.84" x2="1029.50" y2="280.84" stroke="#d8d8d8" stroke-width="1.8"/>
<text transform="translate(994.43 286.54) scale(1.0000 1)" font-size="14.68" fill="#d6d6d6">0,35</text>
<line x1="1461.50" y1="571.00" x2="1461.50" y2="577.50" stroke="#d8d8d8" stroke-width="1.8"/>
<text transform="translate(1451.30 593.40) scale(1.0000 1)" font-size="14.68" fill="#d6d6d6">0,4</text>
<line x1="1023.50" y1="239.36" x2="1029.50" y2="239.36" stroke="#d8d8d8" stroke-width="1.8"/>
<text transform="translate(1002.59 245.06) scale(1.0000 1)" font-size="14.68" fill="#d6d6d6">0,4</text>
<line x1="1515.50" y1="571.00" x2="1515.50" y2="577.50" stroke="#d8d8d8" stroke-width="1.8"/>
<text transform="translate(1501.21 593.40) scale(1.0000 1)" font-size="14.68" fill="#d6d6d6">0,45</text>
<line x1="1023.50" y1="197.88" x2="1029.50" y2="197.88" stroke="#d8d8d8" stroke-width="1.8"/>
<text transform="translate(994.43 203.58) scale(1.0000 1)" font-size="14.68" fill="#d6d6d6">0,45</text>
<line x1="1569.50" y1="571.00" x2="1569.50" y2="577.50" stroke="#d8d8d8" stroke-width="1.8"/>
<text transform="translate(1559.30 593.40) scale(1.0000 1)" font-size="14.68" fill="#d6d6d6">0,5</text>
<line x1="1023.50" y1="156.40" x2="1029.50" y2="156.40" stroke="#d8d8d8" stroke-width="1.8"/>
<text transform="translate(1002.59 162.10) scale(1.0000 1)" font-size="14.68" fill="#d6d6d6">0,5</text>
<line x1="1623.50" y1="571.00" x2="1623.50" y2="577.50" stroke="#d8d8d8" stroke-width="1.8"/>
<text transform="translate(1609.21 593.40) scale(1.0000 1)" font-size="14.68" fill="#d6d6d6">0,55</text>
<line x1="1023.50" y1="114.92" x2="1029.50" y2="114.92" stroke="#d8d8d8" stroke-width="1.8"/>
<text transform="translate(994.43 120.62) scale(1.0000 1)" font-size="14.68" fill="#d6d6d6">0,55</text>
<g>
<rect x="1129.7" y="83.2" width="13.5" height="13.5" fill="#fff" fill-opacity="0.14" stroke="#ffffff" stroke-opacity="0.85" stroke-width="1.7"/>
<rect x="1243.5" y="94.2" width="13.5" height="13.5" fill="#fff" fill-opacity="0.14" stroke="#ffffff" stroke-opacity="0.85" stroke-width="1.7"/>
<rect x="1220.8" y="109.5" width="13.5" height="13.5" fill="#fff" fill-opacity="0.14" stroke="#ffffff" stroke-opacity="0.85" stroke-width="1.7"/>
<rect x="1270.2" y="107.5" width="13.5" height="13.5" fill="#fff" fill-opacity="0.14" stroke="#ffffff" stroke-opacity="0.85" stroke-width="1.7"/>
<rect x="1183.2" y="119.0" width="13.5" height="13.5" fill="#fff" fill-opacity="0.14" stroke="#ffffff" stroke-opacity="0.85" stroke-width="1.7"/>
<rect x="1217.8" y="132.8" width="13.5" height="13.5" fill="#fff" fill-opacity="0.14" stroke="#ffffff" stroke-opacity="0.85" stroke-width="1.7"/>
<rect x="1190.2" y="168.6" width="13.5" height="13.5" fill="#fff" fill-opacity="0.14" stroke="#ffffff" stroke-opacity="0.85" stroke-width="1.7"/>
<rect x="1152.8" y="186.7" width="13.5" height="13.5" fill="#fff" fill-opacity="0.14" stroke="#ffffff" stroke-opacity="0.85" stroke-width="1.7"/>
<rect x="1210.8" y="214.7" width="13.5" height="13.5" fill="#fff" fill-opacity="0.14" stroke="#ffffff" stroke-opacity="0.85" stroke-width="1.7"/>
<rect x="1231.8" y="219.2" width="13.5" height="13.5" fill="#fff" fill-opacity="0.14" stroke="#ffffff" stroke-opacity="0.85" stroke-width="1.7"/>
<rect x="1169.5" y="221.7" width="13.5" height="13.5" fill="#fff" fill-opacity="0.14" stroke="#ffffff" stroke-opacity="0.85" stroke-width="1.7"/>
<rect x="1267.8" y="240.8" width="13.5" height="13.5" fill="#fff" fill-opacity="0.14" stroke="#ffffff" stroke-opacity="0.85" stroke-width="1.7"/>
<rect x="1297.8" y="113.5" width="13.5" height="13.5" fill="#fff" fill-opacity="0.14" stroke="#ffffff" stroke-opacity="0.85" stroke-width="1.7"/>
<rect x="1292.8" y="134.7" width="13.5" height="13.5" fill="#fff" fill-opacity="0.14" stroke="#ffffff" stroke-opacity="0.85" stroke-width="1.7"/>
<rect x="1312.2" y="127.8" width="13.5" height="13.5" fill="#fff" fill-opacity="0.14" stroke="#ffffff" stroke-opacity="0.85" stroke-width="1.7"/>
<rect x="1325.7" y="125.8" width="13.5" height="13.5" fill="#fff" fill-opacity="0.14" stroke="#ffffff" stroke-opacity="0.85" stroke-width="1.7"/>
<rect x="1339.8" y="130.7" width="13.5" height="13.5" fill="#fff" fill-opacity="0.14" stroke="#ffffff" stroke-opacity="0.85" stroke-width="1.7"/>
<rect x="1346.5" y="119.0" width="13.5" height="13.5" fill="#fff" fill-opacity="0.14" stroke="#ffffff" stroke-opacity="0.85" stroke-width="1.7"/>
<rect x="1351.8" y="120.8" width="13.5" height="13.5" fill="#fff" fill-opacity="0.14" stroke="#ffffff" stroke-opacity="0.85" stroke-width="1.7"/>
<rect x="1272.7" y="145.2" width="13.5" height="13.5" fill="#fff" fill-opacity="0.14" stroke="#ffffff" stroke-opacity="0.85" stroke-width="1.7"/>
<rect x="1273.8" y="154.7" width="13.5" height="13.5" fill="#fff" fill-opacity="0.14" stroke="#ffffff" stroke-opacity="0.85" stroke-width="1.7"/>
<rect x="1287.8" y="142.1" width="13.5" height="13.5" fill="#fff" fill-opacity="0.14" stroke="#ffffff" stroke-opacity="0.85" stroke-width="1.7"/>
<rect x="1292.5" y="150.4" width="13.5" height="13.5" fill="#fff" fill-opacity="0.14" stroke="#ffffff" stroke-opacity="0.85" stroke-width="1.7"/>
<rect x="1302.5" y="142.1" width="13.5" height="13.5" fill="#fff" fill-opacity="0.14" stroke="#ffffff" stroke-opacity="0.85" stroke-width="1.7"/>
<rect x="1308.8" y="143.1" width="13.5" height="13.5" fill="#fff" fill-opacity="0.14" stroke="#ffffff" stroke-opacity="0.85" stroke-width="1.7"/>
<rect x="1318.3" y="140.4" width="13.5" height="13.5" fill="#fff" fill-opacity="0.14" stroke="#ffffff" stroke-opacity="0.85" stroke-width="1.7"/>
<rect x="1298.2" y="139.2" width="13.5" height="13.5" fill="#fff" fill-opacity="0.14" stroke="#ffffff" stroke-opacity="0.85" stroke-width="1.7"/>
<rect x="1313.2" y="136.2" width="13.5" height="13.5" fill="#fff" fill-opacity="0.14" stroke="#ffffff" stroke-opacity="0.85" stroke-width="1.7"/>
<rect x="1361.8" y="161.8" width="13.5" height="13.5" fill="#fff" fill-opacity="0.14" stroke="#ffffff" stroke-opacity="0.85" stroke-width="1.7"/>
<rect x="1435.8" y="146.7" width="13.5" height="13.5" fill="#fff" fill-opacity="0.14" stroke="#ffffff" stroke-opacity="0.85" stroke-width="1.7"/>
<rect x="1558.8" y="125.8" width="13.5" height="13.5" fill="#fff" fill-opacity="0.14" stroke="#ffffff" stroke-opacity="0.85" stroke-width="1.7"/>
<rect x="1335.5" y="211.8" width="13.5" height="13.5" fill="#fff" fill-opacity="0.14" stroke="#ffffff" stroke-opacity="0.85" stroke-width="1.7"/>
<rect x="1212.3" y="271.1" width="13.5" height="13.5" fill="#fff" fill-opacity="0.14" stroke="#ffffff" stroke-opacity="0.85" stroke-width="1.7"/>
<rect x="1373.7" y="290.8" width="13.5" height="13.5" fill="#fff" fill-opacity="0.14" stroke="#ffffff" stroke-opacity="0.85" stroke-width="1.7"/>
<rect x="1214.7" y="326.4" width="13.5" height="13.5" fill="#fff" fill-opacity="0.14" stroke="#ffffff" stroke-opacity="0.85" stroke-width="1.7"/>
<rect x="1212.3" y="432.6" width="13.5" height="13.5" fill="#fff" fill-opacity="0.14" stroke="#ffffff" stroke-opacity="0.85" stroke-width="1.7"/>
<rect x="1236" y="174.9" width="13" height="13" fill="none" stroke="#000" stroke-width="2.6"/><rect x="1237.6" y="176.5" width="9.8" height="9.8" fill="none" stroke="#fff" stroke-width="1"/>
<circle cx="1135.1" cy="90.1" r="4.0" fill="#08e808" stroke="#000" stroke-width="1.1"/>
<circle cx="1250.9" cy="100.9" r="4.0" fill="#f4f010" stroke="#000" stroke-width="1.1"/>
<circle cx="1226.0" cy="116.0" r="4.0" fill="#a0b460" stroke="#000" stroke-width="1.1"/>
<circle cx="1278.5" cy="115.0" r="4.0" fill="#dcb058" stroke="#000" stroke-width="1.1"/>
<circle cx="1186.9" cy="124.5" r="4.0" fill="#5c8c50" stroke="#000" stroke-width="1.1"/>
<circle cx="1222.9" cy="139.8" r="4.0" fill="#5a6c44" stroke="#000" stroke-width="1.1"/>
<circle cx="1196.9" cy="176.8" r="4.0" fill="#84b8a8" stroke="#000" stroke-width="1.1"/>
<circle cx="1159.5" cy="192.1" r="4.0" fill="#08ecf0" stroke="#000" stroke-width="1.1"/>
<circle cx="1239.9" cy="213.9" r="4.0" fill="#000000" stroke="#000" stroke-width="1.1"/>
<circle cx="1217.4" cy="223.8" r="4.0" fill="#6880a0" stroke="#000" stroke-width="1.1"/>
<circle cx="1240.9" cy="230.9" r="4.0" fill="#8686b0" stroke="#000" stroke-width="1.1"/>
<circle cx="1177.6" cy="231.6" r="4.0" fill="#3c86a4" stroke="#000" stroke-width="1.1"/>
<circle cx="1275.5" cy="242.9" r="4.0" fill="#5c4270" stroke="#000" stroke-width="1.1"/>
<circle cx="1304.4" cy="119.1" r="4.0" fill="#d4a054" stroke="#000" stroke-width="1.1"/>
<circle cx="1338.2" cy="136.9" r="4.0" fill="#6e4a32" stroke="#000" stroke-width="1.1"/>
<circle cx="1329.3" cy="135.1" r="4.0" fill="#80583a" stroke="#000" stroke-width="1.1"/>
<circle cx="1319.8" cy="136.2" r="4.0" fill="#a0704a" stroke="#000" stroke-width="1.1"/>
<circle cx="1300.4" cy="139.3" r="4.0" fill="#c09070" stroke="#000" stroke-width="1.1"/>
<circle cx="1354.2" cy="126.2" r="4.0" fill="#b07848" stroke="#000" stroke-width="1.1"/>
<circle cx="1358.4" cy="128.8" r="4.0" fill="#a06838" stroke="#000" stroke-width="1.1"/>
<circle cx="1281.0" cy="151.6" r="4.0" fill="#f0c0a0" stroke="#000" stroke-width="1.1"/>
<circle cx="1282.4" cy="161.9" r="4.0" fill="#f0c8b0" stroke="#000" stroke-width="1.1"/>
<circle cx="1295.2" cy="149.8" r="4.0" fill="#b08060" stroke="#000" stroke-width="1.1"/>
<circle cx="1294.1" cy="147.4" r="4.0" fill="#c89878" stroke="#000" stroke-width="1.1"/>
<circle cx="1309.8" cy="146.1" r="4.0" fill="#c09070" stroke="#000" stroke-width="1.1"/>
<circle cx="1302.0" cy="146.7" r="4.0" fill="#d0a080" stroke="#000" stroke-width="1.1"/>
<circle cx="1327.7" cy="142.2" r="4.0" fill="#c89070" stroke="#000" stroke-width="1.1"/>
<circle cx="1315.8" cy="148.0" r="4.0" fill="#d09878" stroke="#000" stroke-width="1.1"/>
<circle cx="1325.6" cy="146.7" r="4.0" fill="#e0a888" stroke="#000" stroke-width="1.1"/>
<circle cx="1320.0" cy="140.6" r="4.0" fill="#d09c78" stroke="#000" stroke-width="1.1"/>
<circle cx="1298.0" cy="157.7" r="4.0" fill="#6c4e40" stroke="#000" stroke-width="1.1"/>
<circle cx="1372.6" cy="167.4" r="4.0" fill="#b4687a" stroke="#000" stroke-width="1.1"/>
<circle cx="1435.9" cy="155.1" r="4.0" fill="#a04848" stroke="#000" stroke-width="1.1"/>
<circle cx="1561.4" cy="134.1" r="4.0" fill="#f00808" stroke="#400000" stroke-width="1.1"/>
<circle cx="1346.0" cy="220.9" r="4.0" fill="#b06898" stroke="#000" stroke-width="1.1"/>
<circle cx="1222.9" cy="284.9" r="4.0" fill="#5868a0" stroke="#000" stroke-width="1.1"/>
<circle cx="1390.0" cy="301.0" r="4.0" fill="#f020f0" stroke="#500050" stroke-width="1.1"/>
<circle cx="1227.0" cy="338.4" r="4.0" fill="#384088" stroke="#000" stroke-width="1.1"/>
<circle cx="1225.8" cy="461.2" r="4.0" fill="#0808e0" stroke="#000060" stroke-width="1.1"/>
<circle cx="1243.2" cy="180.6" r="3.9" fill="#d8d8d8" stroke="#000" stroke-width="1.1"/>
<circle cx="1244.1" cy="182.3" r="4.0" fill="#a4a4a4" stroke="#000" stroke-width="1.1"/>
</g>
<rect x="1471.20" y="396.60" width="200.30" height="131.40" fill="url(#ins)" stroke="#7c7c7c" stroke-width="2.2"/>
<clipPath id="insc"><rect x="1472.3" y="397.7" width="198" height="129.2"/></clipPath><g clip-path="url(#insc)">
<rect x="1488.0" y="425.9" width="14.0" height="14.0" fill="#fff" fill-opacity="0.00" stroke="#ffffff" stroke-opacity="0.90" stroke-width="1.6"/>
<rect x="1616.6" y="410.6" width="14.0" height="14.0" fill="#fff" fill-opacity="0.00" stroke="#ffffff" stroke-opacity="0.90" stroke-width="1.6"/>
<rect x="1563.8" y="455.0" width="14.0" height="14.0" fill="#fff" fill-opacity="0.00" stroke="#ffffff" stroke-opacity="0.90" stroke-width="1.6"/>
<rect x="1577.5" y="470.3" width="14.0" height="14.0" fill="#fff" fill-opacity="0.00" stroke="#ffffff" stroke-opacity="0.90" stroke-width="1.6"/>
<rect x="1482.3" y="474.1" width="14.0" height="14.0" fill="#fff" fill-opacity="0.00" stroke="#ffffff" stroke-opacity="0.90" stroke-width="1.6"/>
<rect x="1491.8" y="489.4" width="14.0" height="14.0" fill="#fff" fill-opacity="0.00" stroke="#ffffff" stroke-opacity="0.90" stroke-width="1.6"/>
<rect x="1548.0" y="489.7" width="14.0" height="14.0" fill="#fff" fill-opacity="0.00" stroke="#ffffff" stroke-opacity="0.90" stroke-width="1.6"/>
<rect x="1458.5" y="476.0" width="14.0" height="14.0" fill="#fff" fill-opacity="0.00" stroke="#ffffff" stroke-opacity="0.90" stroke-width="1.6"/>
<circle cx="1507.5" cy="423.5" r="4.4" fill="#b08058" stroke="#000" stroke-width="1.1"/>
<circle cx="1607.8" cy="432.9" r="4.4" fill="#805838" stroke="#000" stroke-width="1.1"/>
<circle cx="1666.1" cy="429.9" r="4.4" fill="#704830" stroke="#000" stroke-width="1.1"/>
<circle cx="1587.5" cy="454.2" r="4.4" fill="#b07848" stroke="#000" stroke-width="1.1"/>
<circle cx="1605.5" cy="473.1" r="4.4" fill="#c08858" stroke="#000" stroke-width="1.1"/>
<circle cx="1477.0" cy="478.7" r="4.4" fill="#f0b090" stroke="#000" stroke-width="1.1"/>
<circle cx="1509.9" cy="476.8" r="4.4" fill="#c09070" stroke="#000" stroke-width="1.1"/>
<circle cx="1521.0" cy="492.6" r="4.4" fill="#b88058" stroke="#000" stroke-width="1.1"/>
<circle cx="1567.7" cy="496.2" r="4.4" fill="#e8a888" stroke="#000" stroke-width="1.1"/>
</g>
<rect x="1419.40" y="538.90" width="256.20" height="27.40" fill="#2e2e2e"/>
<text transform="translate(1421.30 559.20) scale(1.0009 1)" font-size="19.91" fill="#f2f2f2">RGB Triplet: 207, 143, 102</text>
<text transform="translate(48.20 638.80) scale(1.0496 1)" font-size="28.34" fill="#f2f2f2">Avg dE2000: 1,08</text>
<text transform="translate(43.90 680.80) scale(1.0650 1)" font-size="28.34" fill="#f2f2f2">Max dE2000: 4,54</text>
<text transform="translate(11.30 728.10) scale(1.0936 1)" font-size="27.62" fill="#f2f2f2">Current Reading</text>
<text transform="translate(11.30 765.20) scale(1.1095 1)" font-size="22.67" fill="#f2f2f2">x: 0,4534</text>
<text transform="translate(170.00 765.20) scale(1.1180 1)" font-size="22.67" fill="#f2f2f2">y: 0,3869</text>
<text transform="translate(11.30 806.00) scale(1.1014 1)" font-size="22.67" fill="#f2f2f2">fL: 53,38</text>
<text transform="translate(11.30 841.70) scale(1.1591 1)" font-size="22.67" fill="#f2f2f2">cd/m²: 182,91</text>
<rect x="331.00" y="623.20" width="1354.00" height="24.90" fill="url(#thd)"/>
<rect x="331.00" y="647.90" width="1354.00" height="23.85" fill="#3e3e3e"/>
<rect x="331.00" y="671.55" width="1354.00" height="23.85" fill="#797979"/>
<rect x="331.00" y="695.20" width="1354.00" height="23.85" fill="#3e3e3e"/>
<rect x="331.00" y="718.85" width="1354.00" height="23.85" fill="#797979"/>
<rect x="331.00" y="742.50" width="1354.00" height="23.85" fill="#3e3e3e"/>
<rect x="331.00" y="766.15" width="1354.00" height="23.85" fill="#797979"/>
<rect x="331.00" y="789.80" width="1354.00" height="23.85" fill="#3e3e3e"/>
<rect x="331.00" y="813.45" width="1354.00" height="23.85" fill="#797979"/>
<rect x="322.00" y="623.20" width="9.30" height="213.90" fill="url(#tls)"/>
<rect x="322.00" y="623.20" width="9.30" height="24.70" fill="#000"/>
<clipPath id="tbc"><rect x="322" y="620" width="1363" height="220"/></clipPath><g clip-path="url(#tbc)">
<text transform="translate(399.90 641.20) scale(0.6588 1)" font-size="14.39" fill="#ffffff" font-weight="bold">White</text>
<text transform="translate(435.00 641.20) scale(0.5890 1)" font-size="14.39" fill="#ffffff" font-weight="bold">Gray 80</text>
<text transform="translate(470.50 641.20) scale(0.5890 1)" font-size="14.39" fill="#ffffff" font-weight="bold">Gray 65</text>
<text transform="translate(506.40 641.20) scale(0.5966 1)" font-size="14.39" fill="#ffffff" font-weight="bold">Gray 50</text>
<text transform="translate(542.40 641.20) scale(0.5871 1)" font-size="14.39" fill="#ffffff" font-weight="bold">Gray 35</text>
<text transform="translate(578.70 641.20) scale(0.5573 1)" font-size="14.39" fill="#ffffff" font-weight="bold">Black</text>
<text transform="translate(607.70 641.20) scale(0.5664 1)" font-size="14.39" fill="#ffffff" font-weight="bold">Dark Skin</text>
<text transform="translate(650.90 641.20) scale(0.5450 1)" font-size="14.39" fill="#ffffff" font-weight="bold">Light Skin</text>
<text transform="translate(694.10 641.20) scale(0.5511 1)" font-size="14.39" fill="#ffffff" font-weight="bold">Blue Sky</text>
<text transform="translate(732.40 641.20) scale(0.5698 1)" font-size="14.39" fill="#ffffff" font-weight="bold">Foliage</text>
<text transform="translate(766.30 641.20) scale(0.5849 1)" font-size="14.39" fill="#ffffff" font-weight="bold">Blue Flower</text>
<text transform="translate(818.80 641.20) scale(0.5717 1)" font-size="14.39" fill="#ffffff" font-weight="bold">Bluish Green</text>
<text transform="translate(874.90 641.20) scale(0.5836 1)" font-size="14.39" fill="#ffffff" font-weight="bold">Orange</text>
<text transform="translate(909.60 641.20) scale(0.5704 1)" font-size="14.39" fill="#ffffff" font-weight="bold">Purplish Blue</text>
<text transform="translate(967.70 641.20) scale(0.6043 1)" font-size="14.39" fill="#ffffff" font-weight="bold">Moderate Red</text>
<text transform="translate(1030.50 641.20) scale(0.5806 1)" font-size="14.39" fill="#ffffff" font-weight="bold">Purple</text>
<text transform="translate(1061.40 641.20) scale(0.5843 1)" font-size="14.39" fill="#ffffff" font-weight="bold">Yellow Green</text>
<text transform="translate(1119.50 641.20) scale(0.5834 1)" font-size="14.39" fill="#ffffff" font-weight="bold">Orange Yellow</text>
<text transform="translate(1182.10 641.20) scale(0.5740 1)" font-size="14.39" fill="#ffffff" font-weight="bold">Blue</text>
<text transform="translate(1211.40 641.20) scale(0.5963 1)" font-size="14.39" fill="#ffffff" font-weight="bold">Green</text>
<text transform="translate(1246.30 641.20) scale(0.5555 1)" font-size="14.39" fill="#ffffff" font-weight="bold">Red</text>
<text transform="translate(1275.60 641.20) scale(0.5716 1)" font-size="14.39" fill="#ffffff" font-weight="bold">Yellow</text>
<text transform="translate(1310.60 641.20) scale(0.6048 1)" font-size="14.39" fill="#ffffff" font-weight="bold">Magenta</text>
<text transform="translate(1351.20 641.20) scale(0.5542 1)" font-size="14.39" fill="#ffffff" font-weight="bold">Cyan</text>
<text transform="translate(1380.90 641.20) scale(0.5736 1)" font-size="14.39" fill="#ffffff" font-weight="bold">100% Red</text>
<text transform="translate(1425.60 641.20) scale(0.5923 1)" font-size="14.39" fill="#ffffff" font-weight="bold">100% Green</text>
<text transform="translate(1480.10 641.20) scale(0.5751 1)" font-size="14.39" fill="#ffffff" font-weight="bold">100% Blue</text>
<text transform="translate(1527.20 641.20) scale(0.5777 1)" font-size="14.39" fill="#ffffff" font-weight="bold">100% Cyan</text>
<text transform="translate(1576.40 641.20) scale(0.6030 1)" font-size="14.39" fill="#ffffff" font-weight="bold">100% Magenta</text>
<text transform="translate(1641.50 641.20) scale(0.5900 1)" font-size="14.39" fill="#ffffff" font-weight="bold">100% Yellow</text>
<text transform="translate(333.30 666.30) scale(0.5710 1)" font-size="15.12" fill="#e4e4e4">x: CIE31</text>
<text transform="translate(399.90 666.30) scale(0.6300 1)" font-size="15.12" fill="#e4e4e4">0,31</text>
<text transform="translate(435.00 666.30) scale(0.6300 1)" font-size="15.12" fill="#e4e4e4">0,31</text>
<text transform="translate(470.50 666.30) scale(0.6300 1)" font-size="15.12" fill="#e4e4e4">0,31</text>
<text transform="translate(506.40 666.30) scale(0.6300 1)" font-size="15.12" fill="#e4e4e4">0,31</text>
<text transform="translate(542.40 666.30) scale(0.6300 1)" font-size="15.12" fill="#e4e4e4">0,31</text>
<text transform="translate(578.70 666.30) scale(0.6300 1)" font-size="15.12" fill="#e4e4e4">0,28</text>
<text transform="translate(607.70 666.30) scale(0.6300 1)" font-size="15.12" fill="#e4e4e4">0,40</text>
<text transform="translate(650.90 666.30) scale(0.6300 1)" font-size="15.12" fill="#e4e4e4">0,38</text>
<text transform="translate(694.10 666.30) scale(0.6300 1)" font-size="15.12" fill="#e4e4e4">0,25</text>
<text transform="translate(732.40 666.30) scale(0.6300 1)" font-size="15.12" fill="#e4e4e4">0,34</text>
<text transform="translate(766.30 666.30) scale(0.6300 1)" font-size="15.12" fill="#e4e4e4">0,27</text>
<text transform="translate(818.80 666.30) scale(0.6300 1)" font-size="15.12" fill="#e4e4e4">0,26</text>
<text transform="translate(874.90 666.30) scale(0.6300 1)" font-size="15.12" fill="#e4e4e4">0,51</text>
<text transform="translate(909.60 666.30) scale(0.6300 1)" font-size="15.12" fill="#e4e4e4">0,21</text>
<text transform="translate(967.70 666.30) scale(0.6300 1)" font-size="15.12" fill="#e4e4e4">0,47</text>
<text transform="translate(1030.50 666.30) scale(0.6300 1)" font-size="15.12" fill="#e4e4e4">0,29</text>
<text transform="translate(1061.40 666.30) scale(0.6300 1)" font-size="15.12" fill="#e4e4e4">0,38</text>
<text transform="translate(1119.50 666.30) scale(0.6300 1)" font-size="15.12" fill="#e4e4e4">0,47</text>
<text transform="translate(1182.10 666.30) scale(0.6300 1)" font-size="15.12" fill="#e4e4e4">0,19</text>
<text transform="translate(1211.40 666.30) scale(0.6300 1)" font-size="15.12" fill="#e4e4e4">0,31</text>
<text transform="translate(1246.30 666.30) scale(0.6300 1)" font-size="15.12" fill="#e4e4e4">0,54</text>
<text transform="translate(1275.60 666.30) scale(0.6300 1)" font-size="15.12" fill="#e4e4e4">0,45</text>
<text transform="translate(1310.60 666.30) scale(0.6300 1)" font-size="15.12" fill="#e4e4e4">0,37</text>
<text transform="translate(1351.20 666.30) scale(0.6300 1)" font-size="15.12" fill="#e4e4e4">0,20</text>
<text transform="translate(1380.90 666.30) scale(0.6300 1)" font-size="15.12" fill="#e4e4e4">0,68</text>
<text transform="translate(1425.60 666.30) scale(0.6300 1)" font-size="15.12" fill="#e4e4e4">0,26</text>
<text transform="translate(1480.10 666.30) scale(0.6300 1)" font-size="15.12" fill="#e4e4e4">0,15</text>
<text transform="translate(1527.20 666.30) scale(0.6300 1)" font-size="15.12" fill="#e4e4e4">0,20</text>
<text transform="translate(1576.40 666.30) scale(0.6300 1)" font-size="15.12" fill="#e4e4e4">0,34</text>
<text transform="translate(1641.50 666.30) scale(0.6300 1)" font-size="15.12" fill="#e4e4e4">0,44</text>
<text transform="translate(333.30 689.90) scale(0.5710 1)" font-size="15.12" fill="#e4e4e4">y: CIE31</text>
<text transform="translate(399.90 689.90) scale(0.6300 1)" font-size="15.12" fill="#e4e4e4">0,33</text>
<text transform="translate(435.00 689.90) scale(0.6300 1)" font-size="15.12" fill="#e4e4e4">0,33</text>
<text transform="translate(470.50 689.90) scale(0.6300 1)" font-size="15.12" fill="#e4e4e4">0,33</text>
<text transform="translate(506.40 689.90) scale(0.6300 1)" font-size="15.12" fill="#e4e4e4">0,33</text>
<text transform="translate(542.40 689.90) scale(0.6300 1)" font-size="15.12" fill="#e4e4e4">0,33</text>
<text transform="translate(578.70 689.90) scale(0.6300 1)" font-size="15.12" fill="#e4e4e4">0,27</text>
<text transform="translate(607.70 689.90) scale(0.6300 1)" font-size="15.12" fill="#e4e4e4">0,36</text>
<text transform="translate(650.90 689.90) scale(0.6300 1)" font-size="15.12" fill="#e4e4e4">0,35</text>
<text transform="translate(694.10 689.90) scale(0.6300 1)" font-size="15.12" fill="#e4e4e4">0,26</text>
<text transform="translate(732.40 689.90) scale(0.6300 1)" font-size="15.12" fill="#e4e4e4">0,43</text>
<text transform="translate(766.30 689.90) scale(0.6300 1)" font-size="15.12" fill="#e4e4e4">0,25</text>
<text transform="translate(818.80 689.90) scale(0.6300 1)" font-size="15.12" fill="#e4e4e4">0,35</text>
<text transform="translate(874.90 689.90) scale(0.6300 1)" font-size="15.12" fill="#e4e4e4">0,41</text>
<text transform="translate(909.60 689.90) scale(0.6300 1)" font-size="15.12" fill="#e4e4e4">0,18</text>
<text transform="translate(967.70 689.90) scale(0.6300 1)" font-size="15.12" fill="#e4e4e4">0,32</text>
<text transform="translate(1030.50 689.90) scale(0.6300 1)" font-size="15.12" fill="#e4e4e4">0,22</text>
<text transform="translate(1061.40 689.90) scale(0.6300 1)" font-size="15.12" fill="#e4e4e4">0,50</text>
<text transform="translate(1119.50 689.90) scale(0.6300 1)" font-size="15.12" fill="#e4e4e4">0,45</text>
<text transform="translate(1182.10 689.90) scale(0.6300 1)" font-size="15.12" fill="#e4e4e4">0,13</text>
<text transform="translate(1211.40 689.90) scale(0.6300 1)" font-size="15.12" fill="#e4e4e4">0,50</text>
<text transform="translate(1246.30 689.90) scale(0.6300 1)" font-size="15.12" fill="#e4e4e4">0,32</text>
<text transform="translate(1275.60 689.90) scale(0.6300 1)" font-size="15.12" fill="#e4e4e4">0,48</text>
<text transform="translate(1310.60 689.90) scale(0.6300 1)" font-size="15.12" fill="#e4e4e4">0,24</text>
<text transform="translate(1351.20 689.90) scale(0.6300 1)" font-size="15.12" fill="#e4e4e4">0,26</text>
<text transform="translate(1380.90 689.90) scale(0.6300 1)" font-size="15.12" fill="#e4e4e4">0,32</text>
<text transform="translate(1425.60 689.90) scale(0.6300 1)" font-size="15.12" fill="#e4e4e4">0,69</text>
<text transform="translate(1480.10 689.90) scale(0.6300 1)" font-size="15.12" fill="#e4e4e4">0,05</text>
<text transform="translate(1527.20 689.90) scale(0.6300 1)" font-size="15.12" fill="#e4e4e4">0,33</text>
<text transform="translate(1576.40 689.90) scale(0.6300 1)" font-size="15.12" fill="#e4e4e4">0,15</text>
<text transform="translate(1641.50 689.90) scale(0.6300 1)" font-size="15.12" fill="#e4e4e4">0,54</text>
<text transform="translate(333.30 713.50) scale(0.4562 1)" font-size="15.12" fill="#e4e4e4">Y</text>
<text transform="translate(399.90 713.50) scale(0.6300 1)" font-size="15.12" fill="#e4e4e4">511,86</text>
<text transform="translate(435.00 713.50) scale(0.6300 1)" font-size="15.12" fill="#e4e4e4">415,75</text>
<text transform="translate(470.50 713.50) scale(0.6300 1)" font-size="15.12" fill="#e4e4e4">335,01</text>
<text transform="translate(506.40 713.50) scale(0.6300 1)" font-size="15.12" fill="#e4e4e4">259,57</text>
<text transform="translate(542.40 713.50) scale(0.6300 1)" font-size="15.12" fill="#e4e4e4">179,29</text>
<text transform="translate(578.70 713.50) scale(0.6300 1)" font-size="15.12" fill="#e4e4e4">0,52</text>
<text transform="translate(607.70 713.50) scale(0.6300 1)" font-size="15.12" fill="#e4e4e4">49,33</text>
<text transform="translate(650.90 713.50) scale(0.6300 1)" font-size="15.12" fill="#e4e4e4">180,82</text>
<text transform="translate(694.10 713.50) scale(0.6300 1)" font-size="15.12" fill="#e4e4e4">95,94</text>
<text transform="translate(732.40 713.50) scale(0.6300 1)" font-size="15.12" fill="#e4e4e4">66,29</text>
<text transform="translate(766.30 713.50) scale(0.6300 1)" font-size="15.12" fill="#e4e4e4">118,49</text>
<text transform="translate(818.80 713.50) scale(0.6300 1)" font-size="15.12" fill="#e4e4e4">219,90</text>
<text transform="translate(874.90 713.50) scale(0.6300 1)" font-size="15.12" fill="#e4e4e4">150,73</text>
<text transform="translate(909.60 713.50) scale(0.6300 1)" font-size="15.12" fill="#e4e4e4">57,51</text>
<text transform="translate(967.70 713.50) scale(0.6300 1)" font-size="15.12" fill="#e4e4e4">96,13</text>
<text transform="translate(1030.50 713.50) scale(0.6300 1)" font-size="15.12" fill="#e4e4e4">33,69</text>
<text transform="translate(1061.40 713.50) scale(0.6300 1)" font-size="15.12" fill="#e4e4e4">229,61</text>
<text transform="translate(1119.50 713.50) scale(0.6300 1)" font-size="15.12" fill="#e4e4e4">231,54</text>
<text transform="translate(1182.10 713.50) scale(0.6300 1)" font-size="15.12" fill="#e4e4e4">30,06</text>
<text transform="translate(1211.40 713.50) scale(0.6300 1)" font-size="15.12" fill="#e4e4e4">119,20</text>
<text transform="translate(1246.30 713.50) scale(0.6300 1)" font-size="15.12" fill="#e4e4e4">60,00</text>
<text transform="translate(1275.60 713.50) scale(0.6300 1)" font-size="15.12" fill="#e4e4e4">317,95</text>
<text transform="translate(1310.60 713.50) scale(0.6300 1)" font-size="15.12" fill="#e4e4e4">95,51</text>
<text transform="translate(1351.20 713.50) scale(0.6300 1)" font-size="15.12" fill="#e4e4e4">95,22</text>
<text transform="translate(1380.90 713.50) scale(0.6300 1)" font-size="15.12" fill="#e4e4e4">122,56</text>
<text transform="translate(1425.60 713.50) scale(0.6300 1)" font-size="15.12" fill="#e4e4e4">363,56</text>
<text transform="translate(1480.10 713.50) scale(0.6300 1)" font-size="15.12" fill="#e4e4e4">31,89</text>
<text transform="translate(1527.20 713.50) scale(0.6300 1)" font-size="15.12" fill="#e4e4e4">394,09</text>
<text transform="translate(1576.40 713.50) scale(0.6300 1)" font-size="15.12" fill="#e4e4e4">153,05</text>
<text transform="translate(1641.50 713.50) scale(0.6300 1)" font-size="15.12" fill="#e4e4e4">482,43</text>
<text transform="translate(333.30 737.10) scale(0.6051 1)" font-size="15.12" fill="#e4e4e4">Target x:CIE31</text>
<text transform="translate(399.90 737.10) scale(0.6300 1)" font-size="15.12" fill="#e4e4e4">0,31</text>
<text transform="translate(435.00 737.10) scale(0.6300 1)" font-size="15.12" fill="#e4e4e4">0,31</text>
<text transform="translate(470.50 737.10) scale(0.6300 1)" font-size="15.12" fill="#e4e4e4">0,31</text>
<text transform="translate(506.40 737.10) scale(0.6300 1)" font-size="15.12" fill="#e4e4e4">0,31</text>
<text transform="translate(542.40 737.10) scale(0.6300 1)" font-size="15.12" fill="#e4e4e4">0,31</text>
<text transform="translate(578.70 737.10) scale(0.6300 1)" font-size="15.12" fill="#e4e4e4">0,31</text>
<text transform="translate(607.70 737.10) scale(0.6300 1)" font-size="15.12" fill="#e4e4e4">0,41</text>
<text transform="translate(650.90 737.10) scale(0.6300 1)" font-size="15.12" fill="#e4e4e4">0,38</text>
<text transform="translate(694.10 737.10) scale(0.6300 1)" font-size="15.12" fill="#e4e4e4">0,25</text>
<text transform="translate(732.40 737.10) scale(0.6300 1)" font-size="15.12" fill="#e4e4e4">0,34</text>
<text transform="translate(766.30 737.10) scale(0.6300 1)" font-size="15.12" fill="#e4e4e4">0,27</text>
<text transform="translate(818.80 737.10) scale(0.6300 1)" font-size="15.12" fill="#e4e4e4">0,26</text>
<text transform="translate(874.90 737.10) scale(0.6300 1)" font-size="15.12" fill="#e4e4e4">0,51</text>
<text transform="translate(909.60 737.10) scale(0.6300 1)" font-size="15.12" fill="#e4e4e4">0,21</text>
<text transform="translate(967.70 737.10) scale(0.6300 1)" font-size="15.12" fill="#e4e4e4">0,46</text>
<text transform="translate(1030.50 737.10) scale(0.6300 1)" font-size="15.12" fill="#e4e4e4">0,29</text>
<text transform="translate(1061.40 737.10) scale(0.6300 1)" font-size="15.12" fill="#e4e4e4">0,38</text>
<text transform="translate(1119.50 737.10) scale(0.6300 1)" font-size="15.12" fill="#e4e4e4">0,47</text>
<text transform="translate(1182.10 737.10) scale(0.6300 1)" font-size="15.12" fill="#e4e4e4">0,19</text>
<text transform="translate(1211.40 737.10) scale(0.6300 1)" font-size="15.12" fill="#e4e4e4">0,31</text>
<text transform="translate(1246.30 737.10) scale(0.6300 1)" font-size="15.12" fill="#e4e4e4">0,55</text>
<text transform="translate(1275.60 737.10) scale(0.6300 1)" font-size="15.12" fill="#e4e4e4">0,45</text>
<text transform="translate(1310.60 737.10) scale(0.6300 1)" font-size="15.12" fill="#e4e4e4">0,37</text>
<text transform="translate(1351.20 737.10) scale(0.6300 1)" font-size="15.12" fill="#e4e4e4">0,20</text>
<text transform="translate(1380.90 737.10) scale(0.6300 1)" font-size="15.12" fill="#e4e4e4">0,68</text>
<text transform="translate(1425.60 737.10) scale(0.6300 1)" font-size="15.12" fill="#e4e4e4">0,27</text>
<text transform="translate(1480.10 737.10) scale(0.6300 1)" font-size="15.12" fill="#e4e4e4">0,15</text>
<text transform="translate(1527.20 737.10) scale(0.6300 1)" font-size="15.12" fill="#e4e4e4">0,20</text>
<text transform="translate(1576.40 737.10) scale(0.6300 1)" font-size="15.12" fill="#e4e4e4">0,34</text>
<text transform="translate(1641.50 737.10) scale(0.6300 1)" font-size="15.12" fill="#e4e4e4">0,44</text>
<text transform="translate(333.30 760.70) scale(0.6051 1)" font-size="15.12" fill="#e4e4e4">Target y:CIE31</text>
<text transform="translate(399.90 760.70) scale(0.6300 1)" font-size="15.12" fill="#e4e4e4">0,33</text>
<text transform="translate(435.00 760.70) scale(0.6300 1)" font-size="15.12" fill="#e4e4e4">0,33</text>
<text transform="translate(470.50 760.70) scale(0.6300 1)" font-size="15.12" fill="#e4e4e4">0,33</text>
<text transform="translate(506.40 760.70) scale(0.6300 1)" font-size="15.12" fill="#e4e4e4">0,33</text>
<text transform="translate(542.40 760.70) scale(0.6300 1)" font-size="15.12" fill="#e4e4e4">0,33</text>
<text transform="translate(578.70 760.70) scale(0.6300 1)" font-size="15.12" fill="#e4e4e4">0,33</text>
<text transform="translate(607.70 760.70) scale(0.6300 1)" font-size="15.12" fill="#e4e4e4">0,36</text>
<text transform="translate(650.90 760.70) scale(0.6300 1)" font-size="15.12" fill="#e4e4e4">0,35</text>
<text transform="translate(694.10 760.70) scale(0.6300 1)" font-size="15.12" fill="#e4e4e4">0,27</text>
<text transform="translate(732.40 760.70) scale(0.6300 1)" font-size="15.12" fill="#e4e4e4">0,43</text>
<text transform="translate(766.30 760.70) scale(0.6300 1)" font-size="15.12" fill="#e4e4e4">0,25</text>
<text transform="translate(818.80 760.70) scale(0.6300 1)" font-size="15.12" fill="#e4e4e4">0,36</text>
<text transform="translate(874.90 760.70) scale(0.6300 1)" font-size="15.12" fill="#e4e4e4">0,41</text>
<text transform="translate(909.60 760.70) scale(0.6300 1)" font-size="15.12" fill="#e4e4e4">0,19</text>
<text transform="translate(967.70 760.70) scale(0.6300 1)" font-size="15.12" fill="#e4e4e4">0,31</text>
<text transform="translate(1030.50 760.70) scale(0.6300 1)" font-size="15.12" fill="#e4e4e4">0,22</text>
<text transform="translate(1061.40 760.70) scale(0.6300 1)" font-size="15.12" fill="#e4e4e4">0,50</text>
<text transform="translate(1119.50 760.70) scale(0.6300 1)" font-size="15.12" fill="#e4e4e4">0,45</text>
<text transform="translate(1182.10 760.70) scale(0.6300 1)" font-size="15.12" fill="#e4e4e4">0,13</text>
<text transform="translate(1211.40 760.70) scale(0.6300 1)" font-size="15.12" fill="#e4e4e4">0,49</text>
<text transform="translate(1246.30 760.70) scale(0.6300 1)" font-size="15.12" fill="#e4e4e4">0,32</text>
<text transform="translate(1275.60 760.70) scale(0.6300 1)" font-size="15.12" fill="#e4e4e4">0,48</text>
<text transform="translate(1310.60 760.70) scale(0.6300 1)" font-size="15.12" fill="#e4e4e4">0,24</text>
<text transform="translate(1351.20 760.70) scale(0.6300 1)" font-size="15.12" fill="#e4e4e4">0,26</text>
<text transform="translate(1380.90 760.70) scale(0.6300 1)" font-size="15.12" fill="#e4e4e4">0,32</text>
<text transform="translate(1425.60 760.70) scale(0.6300 1)" font-size="15.12" fill="#e4e4e4">0,69</text>
<text transform="translate(1480.10 760.70) scale(0.6300 1)" font-size="15.12" fill="#e4e4e4">0,06</text>
<text transform="translate(1527.20 760.70) scale(0.6300 1)" font-size="15.12" fill="#e4e4e4">0,33</text>
<text transform="translate(1576.40 760.70) scale(0.6300 1)" font-size="15.12" fill="#e4e4e4">0,15</text>
<text transform="translate(1641.50 760.70) scale(0.6300 1)" font-size="15.12" fill="#e4e4e4">0,54</text>
<text transform="translate(333.30 784.30) scale(0.6265 1)" font-size="15.12" fill="#e4e4e4">Target Y</text>
<text transform="translate(399.90 784.30) scale(0.6300 1)" font-size="15.12" fill="#e4e4e4">511,86</text>
<text transform="translate(435.00 784.30) scale(0.6300 1)" font-size="15.12" fill="#e4e4e4">408,05</text>
<text transform="translate(470.50 784.30) scale(0.6300 1)" font-size="15.12" fill="#e4e4e4">330,67</text>
<text transform="translate(506.40 784.30) scale(0.6300 1)" font-size="15.12" fill="#e4e4e4">256,00</text>
<text transform="translate(542.40 784.30) scale(0.6300 1)" font-size="15.12" fill="#e4e4e4">178,97</text>
<text transform="translate(578.70 784.30) scale(0.6300 1)" font-size="15.12" fill="#e4e4e4">0,52</text>
<text transform="translate(607.70 784.30) scale(0.6300 1)" font-size="15.12" fill="#e4e4e4">50,41</text>
<text transform="translate(650.90 784.30) scale(0.6300 1)" font-size="15.12" fill="#e4e4e4">178,82</text>
<text transform="translate(694.10 784.30) scale(0.6300 1)" font-size="15.12" fill="#e4e4e4">98,22</text>
<text transform="translate(732.40 784.30) scale(0.6300 1)" font-size="15.12" fill="#e4e4e4">67,78</text>
<text transform="translate(766.30 784.30) scale(0.6300 1)" font-size="15.12" fill="#e4e4e4">120,76</text>
<text transform="translate(818.80 784.30) scale(0.6300 1)" font-size="15.12" fill="#e4e4e4">217,22</text>
<text transform="translate(874.90 784.30) scale(0.6300 1)" font-size="15.12" fill="#e4e4e4">147,68</text>
<text transform="translate(909.60 784.30) scale(0.6300 1)" font-size="15.12" fill="#e4e4e4">60,42</text>
<text transform="translate(967.70 784.30) scale(0.6300 1)" font-size="15.12" fill="#e4e4e4">96,27</text>
<text transform="translate(1030.50 784.30) scale(0.6300 1)" font-size="15.12" fill="#e4e4e4">34,19</text>
<text transform="translate(1061.40 784.30) scale(0.6300 1)" font-size="15.12" fill="#e4e4e4">224,35</text>
<text transform="translate(1119.50 784.30) scale(0.6300 1)" font-size="15.12" fill="#e4e4e4">224,35</text>
<text transform="translate(1182.10 784.30) scale(0.6300 1)" font-size="15.12" fill="#e4e4e4">31,31</text>
<text transform="translate(1211.40 784.30) scale(0.6300 1)" font-size="15.12" fill="#e4e4e4">118,24</text>
<text transform="translate(1246.30 784.30) scale(0.6300 1)" font-size="15.12" fill="#e4e4e4">59,00</text>
<text transform="translate(1275.60 784.30) scale(0.6300 1)" font-size="15.12" fill="#e4e4e4">307,89</text>
<text transform="translate(1310.60 784.30) scale(0.6300 1)" font-size="15.12" fill="#e4e4e4">96,70</text>
<text transform="translate(1351.20 784.30) scale(0.6300 1)" font-size="15.12" fill="#e4e4e4">97,75</text>
<text transform="translate(1380.90 784.30) scale(0.6300 1)" font-size="15.12" fill="#e4e4e4">117,61</text>
<text transform="translate(1425.60 784.30) scale(0.6300 1)" font-size="15.12" fill="#e4e4e4">354,23</text>
<text transform="translate(1480.10 784.30) scale(0.6300 1)" font-size="15.12" fill="#e4e4e4">41,06</text>
<text transform="translate(1527.20 784.30) scale(0.6300 1)" font-size="15.12" fill="#e4e4e4">394,77</text>
<text transform="translate(1576.40 784.30) scale(0.6300 1)" font-size="15.12" fill="#e4e4e4">158,15</text>
<text transform="translate(1641.50 784.30) scale(0.6300 1)" font-size="15.12" fill="#e4e4e4">471,33</text>
<text transform="translate(333.30 807.90) scale(0.6120 1)" font-size="15.12" fill="#e4e4e4">ΔE 2000</text>
<text transform="translate(399.90 807.90) scale(0.6300 1)" font-size="15.12" fill="#e4e4e4">1,98</text>
<text transform="translate(435.00 807.90) scale(0.6300 1)" font-size="15.12" fill="#e4e4e4">1,55</text>
<text transform="translate(470.50 807.90) scale(0.6300 1)" font-size="15.12" fill="#e4e4e4">1,95</text>
<text transform="translate(506.40 807.90) scale(0.6300 1)" font-size="15.12" fill="#e4e4e4">1,50</text>
<text transform="translate(542.40 807.90) scale(0.6300 1)" font-size="15.12" fill="#e4e4e4">0,93</text>
<text transform="translate(578.70 807.90) scale(0.6300 1)" font-size="15.12" fill="#e4e4e4">0,93</text>
<text transform="translate(607.70 807.90) scale(0.6300 1)" font-size="15.12" fill="#e4e4e4">1,08</text>
<text transform="translate(650.90 807.90) scale(0.6300 1)" font-size="15.12" fill="#e4e4e4">0,41</text>
<text transform="translate(694.10 807.90) scale(0.6300 1)" font-size="15.12" fill="#e4e4e4">1,24</text>
<text transform="translate(732.40 807.90) scale(0.6300 1)" font-size="15.12" fill="#e4e4e4">0,53</text>
<text transform="translate(766.30 807.90) scale(0.6300 1)" font-size="15.12" fill="#e4e4e4">1,37</text>
<text transform="translate(818.80 807.90) scale(0.6300 1)" font-size="15.12" fill="#e4e4e4">0,63</text>
<text transform="translate(874.90 807.90) scale(0.6300 1)" font-size="15.12" fill="#e4e4e4">0,99</text>
<text transform="translate(909.60 807.90) scale(0.6300 1)" font-size="15.12" fill="#e4e4e4">1,93</text>
<text transform="translate(967.70 807.90) scale(0.6300 1)" font-size="15.12" fill="#e4e4e4">0,66</text>
<text transform="translate(1030.50 807.90) scale(0.6300 1)" font-size="15.12" fill="#e4e4e4">0,78</text>
<text transform="translate(1061.40 807.90) scale(0.6300 1)" font-size="15.12" fill="#e4e4e4">0,84</text>
<text transform="translate(1119.50 807.90) scale(0.6300 1)" font-size="15.12" fill="#e4e4e4">0,80</text>
<text transform="translate(1182.10 807.90) scale(0.6300 1)" font-size="15.12" fill="#e4e4e4">1,47</text>
<text transform="translate(1211.40 807.90) scale(0.6300 1)" font-size="15.12" fill="#e4e4e4">0,57</text>
<text transform="translate(1246.30 807.90) scale(0.6300 1)" font-size="15.12" fill="#e4e4e4">0,75</text>
<text transform="translate(1275.60 807.90) scale(0.6300 1)" font-size="15.12" fill="#e4e4e4">0,82</text>
<text transform="translate(1310.60 807.90) scale(0.6300 1)" font-size="15.12" fill="#e4e4e4">0,81</text>
<text transform="translate(1351.20 807.90) scale(0.6300 1)" font-size="15.12" fill="#e4e4e4">1,50</text>
<text transform="translate(1380.90 807.90) scale(0.6300 1)" font-size="15.12" fill="#e4e4e4">1,20</text>
<text transform="translate(1425.60 807.90) scale(0.6300 1)" font-size="15.12" fill="#e4e4e4">0,71</text>
<text transform="translate(1480.10 807.90) scale(0.6300 1)" font-size="15.12" fill="#e4e4e4">4,54</text>
<text transform="translate(1527.20 807.90) scale(0.6300 1)" font-size="15.12" fill="#e4e4e4">0,25</text>
<text transform="translate(1576.40 807.90) scale(0.6300 1)" font-size="15.12" fill="#e4e4e4">1,14</text>
<text transform="translate(1641.50 807.90) scale(0.6300 1)" font-size="15.12" fill="#e4e4e4">0,61</text>
<text transform="translate(333.30 831.50) scale(0.5666 1)" font-size="15.12" fill="#e4e4e4">dEITP</text>
<text transform="translate(399.90 831.50) scale(0.6300 1)" font-size="15.12" fill="#e4e4e4">1,68</text>
<text transform="translate(435.00 831.50) scale(0.6300 1)" font-size="15.12" fill="#e4e4e4">1,95</text>
<text transform="translate(470.50 831.50) scale(0.6300 1)" font-size="15.12" fill="#e4e4e4">1,73</text>
<text transform="translate(506.40 831.50) scale(0.6300 1)" font-size="15.12" fill="#e4e4e4">1,59</text>
<text transform="translate(542.40 831.50) scale(0.6300 1)" font-size="15.12" fill="#e4e4e4">0,84</text>
<text transform="translate(578.70 831.50) scale(0.6300 1)" font-size="15.12" fill="#e4e4e4">10,97</text>
<text transform="translate(607.70 831.50) scale(0.6300 1)" font-size="15.12" fill="#e4e4e4">2,89</text>
<text transform="translate(650.90 831.50) scale(0.6300 1)" font-size="15.12" fill="#e4e4e4">1,26</text>
<text transform="translate(694.10 831.50) scale(0.6300 1)" font-size="15.12" fill="#e4e4e4">2,50</text>
<text transform="translate(732.40 831.50) scale(0.6300 1)" font-size="15.12" fill="#e4e4e4">1,84</text>
<text transform="translate(766.30 831.50) scale(0.6300 1)" font-size="15.12" fill="#e4e4e4">3,15</text>
<text transform="translate(818.80 831.50) scale(0.6300 1)" font-size="15.12" fill="#e4e4e4">1,43</text>
<text transform="translate(874.90 831.50) scale(0.6300 1)" font-size="15.12" fill="#e4e4e4">2,91</text>
<text transform="translate(909.60 831.50) scale(0.6300 1)" font-size="15.12" fill="#e4e4e4">5,22</text>
<text transform="translate(967.70 831.50) scale(0.6300 1)" font-size="15.12" fill="#e4e4e4">3,57</text>
<text transform="translate(1030.50 831.50) scale(0.6300 1)" font-size="15.12" fill="#e4e4e4">2,74</text>
<text transform="translate(1061.40 831.50) scale(0.6300 1)" font-size="15.12" fill="#e4e4e4">2,96</text>
<text transform="translate(1119.50 831.50) scale(0.6300 1)" font-size="15.12" fill="#e4e4e4">2,56</text>
<text transform="translate(1182.10 831.50) scale(0.6300 1)" font-size="15.12" fill="#e4e4e4">5,02</text>
<text transform="translate(1211.40 831.50) scale(0.6300 1)" font-size="15.12" fill="#e4e4e4">2,28</text>
<text transform="translate(1246.30 831.50) scale(0.6300 1)" font-size="15.12" fill="#e4e4e4">4,84</text>
<text transform="translate(1275.60 831.50) scale(0.6300 1)" font-size="15.12" fill="#e4e4e4">2,72</text>
<text transform="translate(1310.60 831.50) scale(0.6300 1)" font-size="15.12" fill="#e4e4e4">4,56</text>
<text transform="translate(1351.20 831.50) scale(0.6300 1)" font-size="15.12" fill="#e4e4e4">2,68</text>
<text transform="translate(1380.90 831.50) scale(0.6300 1)" font-size="15.12" fill="#e4e4e4">5,65</text>
<text transform="translate(1425.60 831.50) scale(0.6300 1)" font-size="15.12" fill="#e4e4e4">2,81</text>
<text transform="translate(1480.10 831.50) scale(0.6300 1)" font-size="15.12" fill="#e4e4e4">14,91</text>
<text transform="translate(1527.20 831.50) scale(0.6300 1)" font-size="15.12" fill="#e4e4e4">0,51</text>
<text transform="translate(1576.40 831.50) scale(0.6300 1)" font-size="15.12" fill="#e4e4e4">11,75</text>
<text transform="translate(1641.50 831.50) scale(0.6300 1)" font-size="15.12" fill="#e4e4e4">2,09</text>
</g>
<rect x="331.00" y="837.10" width="1354.00" height="14.70" fill="#474747"/>
<rect x="331.50" y="838.00" width="8.50" height="13.00" fill="#7a7a7a"/>
<path d="M337.5 840.5 L337.5 848.5 L333 844.5Z" fill="#2c2c2c"/>
<rect x="342.00" y="838.30" width="938.00" height="12.30" fill="#3a3a3a" rx="6"/>
<rect x="1677.00" y="838.00" width="8.00" height="13.00" fill="#7a7a7a"/>
<path d="M1679.5 840.5 L1679.5 848.5 L1684 844.5Z" fill="#2c2c2c"/>
<rect x="0.00" y="889.00" width="1685.00" height="64.00" fill="#3c3c3c"/>
<clipPath id="tlc"><rect x="0" y="888" width="1366.7" height="66"/></clipPath><g clip-path="url(#tlc)">
<path d="M-2.9 938.5 L-2.9 893.5 Q-2.9 890 0.6 890 L43.2 890 Q46.7 890 46.7 893.5 L46.7 938.5Z" fill="url(#tile)"/>
<rect x="1.70" y="895.00" width="40.60" height="24.40" fill="#5a5a5a" rx="3.2" fill-opacity="0.55"/>
<rect x="2.10" y="895.30" width="40.00" height="23.80" fill="#ffffff" rx="2.8"/>
<text transform="translate(7.22 933.90) scale(1.0000 1)" font-size="11.48" fill="#242424" stroke="#242424" stroke-width="0.3">White</text>
<path d="M49.1 938.5 L49.1 893.5 Q49.1 890 52.6 890 L95.2 890 Q98.7 890 98.7 893.5 L98.7 938.5Z" fill="url(#tile)"/>
<rect x="53.70" y="895.00" width="40.60" height="24.40" fill="#5a5a5a" rx="3.2" fill-opacity="0.55"/>
<rect x="54.10" y="895.30" width="40.00" height="23.80" fill="#e6e6e6" rx="2.8"/>
<text transform="translate(53.48 933.90) scale(1.0000 1)" font-size="11.48" fill="#242424" stroke="#242424" stroke-width="0.3">Gray 80</text>
<path d="M101.1 938.5 L101.1 893.5 Q101.1 890 104.6 890 L147.2 890 Q150.7 890 150.7 893.5 L150.7 938.5Z" fill="url(#tile)"/>
<rect x="105.70" y="895.00" width="40.60" height="24.40" fill="#5a5a5a" rx="3.2" fill-opacity="0.55"/>
<rect x="106.10" y="895.30" width="40.00" height="23.80" fill="#d0d0d0" rx="2.8"/>
<text transform="translate(105.48 933.90) scale(1.0000 1)" font-size="11.48" fill="#242424" stroke="#242424" stroke-width="0.3">Gray 65</text>
<path d="M153.1 938.5 L153.1 893.5 Q153.1 890 156.6 890 L199.2 890 Q202.7 890 202.7 893.5 L202.7 938.5Z" fill="url(#tile)"/>
<rect x="157.70" y="895.00" width="40.60" height="24.40" fill="#5a5a5a" rx="3.2" fill-opacity="0.55"/>
<rect x="158.10" y="895.30" width="40.00" height="23.80" fill="#bababa" rx="2.8"/>
<text transform="translate(157.48 933.90) scale(1.0000 1)" font-size="11.48" fill="#242424" stroke="#242424" stroke-width="0.3">Gray 50</text>
<path d="M205.1 938.5 L205.1 893.5 Q205.1 890 208.6 890 L251.2 890 Q254.7 890 254.7 893.5 L254.7 938.5Z" fill="url(#tile)"/>
<rect x="209.70" y="895.00" width="40.60" height="24.40" fill="#5a5a5a" rx="3.2" fill-opacity="0.55"/>
<rect x="210.10" y="895.30" width="40.00" height="23.80" fill="#a0a0a0" rx="2.8"/>
<text transform="translate(209.48 933.90) scale(1.0000 1)" font-size="11.48" fill="#242424" stroke="#242424" stroke-width="0.3">Gray 35</text>
<path d="M257.1 938.5 L257.1 893.5 Q257.1 890 260.6 890 L303.2 890 Q306.7 890 306.7 893.5 L306.7 938.5Z" fill="url(#tile)"/>
<rect x="261.70" y="895.00" width="40.60" height="24.40" fill="#5a5a5a" rx="3.2" fill-opacity="0.55"/>
<rect x="262.10" y="895.30" width="40.00" height="23.80" fill="#000000" rx="2.8"/>
<text transform="translate(267.86 933.90) scale(1.0000 1)" font-size="11.48" fill="#242424" stroke="#242424" stroke-width="0.3">Black</text>
<path d="M309.1 938.5 L309.1 893.5 Q309.1 890 312.6 890 L355.2 890 Q358.7 890 358.7 893.5 L358.7 938.5Z" fill="url(#tile)"/>
<rect x="313.70" y="895.00" width="40.60" height="24.40" fill="#5a5a5a" rx="3.2" fill-opacity="0.55"/>
<rect x="314.10" y="895.30" width="40.00" height="23.80" fill="#755548" rx="2.8"/>
<text transform="translate(309.01 933.90) scale(1.0000 1)" font-size="11.48" fill="#242424" stroke="#242424" stroke-width="0.3">Dark Skin</text>
<path d="M361.1 938.5 L361.1 893.5 Q361.1 890 364.6 890 L407.2 890 Q410.7 890 410.7 893.5 L410.7 938.5Z" fill="url(#tile)"/>
<rect x="365.70" y="895.00" width="40.60" height="24.40" fill="#5a5a5a" rx="3.2" fill-opacity="0.55"/>
<rect x="366.10" y="895.30" width="40.00" height="23.80" fill="#c49a84" rx="2.8"/>
<text transform="translate(360.69 933.90) scale(1.0000 1)" font-size="11.48" fill="#242424" stroke="#242424" stroke-width="0.3">Light Skin</text>
<path d="M413.1 938.5 L413.1 893.5 Q413.1 890 416.6 890 L459.2 890 Q462.7 890 462.7 893.5 L462.7 938.5Z" fill="url(#tile)"/>
<rect x="417.70" y="895.00" width="40.60" height="24.40" fill="#5a5a5a" rx="3.2" fill-opacity="0.55"/>
<rect x="418.10" y="895.30" width="40.00" height="23.80" fill="#5f7ba1" rx="2.8"/>
<text transform="translate(415.24 933.90) scale(1.0000 1)" font-size="11.48" fill="#242424" stroke="#242424" stroke-width="0.3">Blue Sky</text>
<path d="M465.1 938.5 L465.1 893.5 Q465.1 890 468.6 890 L511.2 890 Q514.7 890 514.7 893.5 L514.7 938.5Z" fill="url(#tile)"/>
<rect x="469.70" y="895.00" width="40.60" height="24.40" fill="#5a5a5a" rx="3.2" fill-opacity="0.55"/>
<rect x="470.10" y="895.30" width="40.00" height="23.80" fill="#5a6e42" rx="2.8"/>
<text transform="translate(471.07 933.90) scale(1.0000 1)" font-size="11.48" fill="#242424" stroke="#242424" stroke-width="0.3">Foliage</text>
<path d="M517.1 938.5 L517.1 893.5 Q517.1 890 520.6 890 L563.2 890 Q566.7 890 566.7 893.5 L566.7 938.5Z" fill="url(#tile)"/>
<rect x="521.70" y="895.00" width="40.60" height="13.10" fill="#5a5a5a" rx="3.2" fill-opacity="0.55"/>
<rect x="522.10" y="895.30" width="40.00" height="12.50" fill="#8580b1" rx="2.8"/>
<text transform="translate(524.67 922.00) scale(1.0000 1)" font-size="11.48" fill="#242424" stroke="#242424" stroke-width="0.3">Blue</text>
<text transform="translate(524.67 934.20) scale(1.0000 1)" font-size="11.48" fill="#242424" stroke="#242424" stroke-width="0.3">Flower</text>
<path d="M569.1 938.5 L569.1 893.5 Q569.1 890 572.6 890 L615.2 890 Q618.7 890 618.7 893.5 L618.7 938.5Z" fill="url(#tile)"/>
<rect x="573.70" y="895.00" width="40.60" height="13.10" fill="#5a5a5a" rx="3.2" fill-opacity="0.55"/>
<rect x="574.10" y="895.30" width="40.00" height="12.50" fill="#70c0ad" rx="2.8"/>
<text transform="translate(577.94 922.00) scale(1.0000 1)" font-size="11.48" fill="#242424" stroke="#242424" stroke-width="0.3">Bluish</text>
<text transform="translate(577.94 934.20) scale(1.0000 1)" font-size="11.48" fill="#242424" stroke="#242424" stroke-width="0.3">Green</text>
<path d="M621.1 938.5 L621.1 893.5 Q621.1 890 624.6 890 L667.2 890 Q670.7 890 670.7 893.5 L670.7 938.5Z" fill="url(#tile)"/>
<rect x="625.70" y="895.00" width="40.60" height="24.40" fill="#5a5a5a" rx="3.2" fill-opacity="0.55"/>
<rect x="626.10" y="895.30" width="40.00" height="23.80" fill="#dd8240" rx="2.8"/>
<text transform="translate(626.75 933.90) scale(1.0000 1)" font-size="11.48" fill="#242424" stroke="#242424" stroke-width="0.3">Orange</text>
<path d="M673.1 938.5 L673.1 893.5 Q673.1 890 676.6 890 L719.2 890 Q722.7 890 722.7 893.5 L722.7 938.5Z" fill="url(#tile)"/>
<rect x="677.70" y="895.00" width="40.60" height="13.10" fill="#5a5a5a" rx="3.2" fill-opacity="0.55"/>
<rect x="678.10" y="895.30" width="40.00" height="12.50" fill="#4a5cb4" rx="2.8"/>
<text transform="translate(677.16 922.00) scale(1.0000 1)" font-size="11.48" fill="#242424" stroke="#242424" stroke-width="0.3">Purplish</text>
<text transform="translate(677.16 934.20) scale(1.0000 1)" font-size="11.48" fill="#242424" stroke="#242424" stroke-width="0.3">Blue</text>
<path d="M725.1 938.5 L725.1 893.5 Q725.1 890 728.6 890 L771.2 890 Q774.7 890 774.7 893.5 L774.7 938.5Z" fill="url(#tile)"/>
<rect x="729.70" y="895.00" width="40.60" height="13.10" fill="#5a5a5a" rx="3.2" fill-opacity="0.55"/>
<rect x="730.10" y="895.30" width="40.00" height="12.50" fill="#c8606c" rx="2.8"/>
<text transform="translate(725.64 922.00) scale(1.0000 1)" font-size="11.48" fill="#242424" stroke="#242424" stroke-width="0.3">Moderate</text>
<text transform="translate(725.64 934.20) scale(1.0000 1)" font-size="11.48" fill="#242424" stroke="#242424" stroke-width="0.3">Red</text>
<path d="M777.1 938.5 L777.1 893.5 Q777.1 890 780.6 890 L823.2 890 Q826.7 890 826.7 893.5 L826.7 938.5Z" fill="url(#tile)"/>
<rect x="781.70" y="895.00" width="40.60" height="24.40" fill="#5a5a5a" rx="3.2" fill-opacity="0.55"/>
<rect x="782.10" y="895.30" width="40.00" height="23.80" fill="#5c4173" rx="2.8"/>
<text transform="translate(785.30 933.90) scale(1.0000 1)" font-size="11.48" fill="#242424" stroke="#242424" stroke-width="0.3">Purple</text>
<path d="M829.1 938.5 L829.1 893.5 Q829.1 890 832.6 890 L875.2 890 Q878.7 890 878.7 893.5 L878.7 938.5Z" fill="url(#tile)"/>
<rect x="833.70" y="895.00" width="40.60" height="13.10" fill="#5a5a5a" rx="3.2" fill-opacity="0.55"/>
<rect x="834.10" y="895.30" width="40.00" height="12.50" fill="#a8c455" rx="2.8"/>
<text transform="translate(837.51 922.00) scale(1.0000 1)" font-size="11.48" fill="#242424" stroke="#242424" stroke-width="0.3">Yellow</text>
<text transform="translate(837.51 934.20) scale(1.0000 1)" font-size="11.48" fill="#242424" stroke="#242424" stroke-width="0.3">Green</text>
<path d="M881.1 938.5 L881.1 893.5 Q881.1 890 884.6 890 L927.2 890 Q930.7 890 930.7 893.5 L930.7 938.5Z" fill="url(#tile)"/>
<rect x="885.70" y="895.00" width="40.60" height="13.10" fill="#5a5a5a" rx="3.2" fill-opacity="0.55"/>
<rect x="886.10" y="895.30" width="40.00" height="12.50" fill="#e4a84a" rx="2.8"/>
<text transform="translate(886.75 922.00) scale(1.0000 1)" font-size="11.48" fill="#242424" stroke="#242424" stroke-width="0.3">Orange</text>
<text transform="translate(886.75 934.20) scale(1.0000 1)" font-size="11.48" fill="#242424" stroke="#242424" stroke-width="0.3">Yellow</text>
<path d="M933.1 938.5 L933.1 893.5 Q933.1 890 936.6 890 L979.2 890 Q982.7 890 982.7 893.5 L982.7 938.5Z" fill="url(#tile)"/>
<rect x="937.70" y="895.00" width="40.60" height="24.40" fill="#5a5a5a" rx="3.2" fill-opacity="0.55"/>
<rect x="938.10" y="895.30" width="40.00" height="23.80" fill="#393c94" rx="2.8"/>
<text transform="translate(946.41 933.90) scale(1.0000 1)" font-size="11.48" fill="#242424" stroke="#242424" stroke-width="0.3">Blue</text>
<path d="M985.1 938.5 L985.1 893.5 Q985.1 890 988.6 890 L1031.2 890 Q1034.7 890 1034.7 893.5 L1034.7 938.5Z" fill="url(#tile)"/>
<rect x="989.70" y="895.00" width="40.60" height="24.40" fill="#5a5a5a" rx="3.2" fill-opacity="0.55"/>
<rect x="990.10" y="895.30" width="40.00" height="23.80" fill="#599c56" rx="2.8"/>
<text transform="translate(993.94 933.90) scale(1.0000 1)" font-size="11.48" fill="#242424" stroke="#242424" stroke-width="0.3">Green</text>
<path d="M1037.1 938.5 L1037.1 893.5 Q1037.1 890 1040.6 890 L1083.2 890 Q1086.7 890 1086.7 893.5 L1086.7 938.5Z" fill="url(#tile)"/>
<rect x="1041.70" y="895.00" width="40.60" height="24.40" fill="#5a5a5a" rx="3.2" fill-opacity="0.55"/>
<rect x="1042.10" y="895.30" width="40.00" height="23.80" fill="#a83a3e" rx="2.8"/>
<text transform="translate(1051.37 933.90) scale(1.0000 1)" font-size="11.48" fill="#242424" stroke="#242424" stroke-width="0.3">Red</text>
<path d="M1089.1 938.5 L1089.1 893.5 Q1089.1 890 1092.6 890 L1135.2 890 Q1138.7 890 1138.7 893.5 L1138.7 938.5Z" fill="url(#tile)"/>
<rect x="1093.70" y="895.00" width="40.60" height="24.40" fill="#5a5a5a" rx="3.2" fill-opacity="0.55"/>
<rect x="1094.10" y="895.30" width="40.00" height="23.80" fill="#ecce55" rx="2.8"/>
<text transform="translate(1097.51 933.90) scale(1.0000 1)" font-size="11.48" fill="#242424" stroke="#242424" stroke-width="0.3">Yellow</text>
<path d="M1141.1 938.5 L1141.1 893.5 Q1141.1 890 1144.6 890 L1187.2 890 Q1190.7 890 1190.7 893.5 L1190.7 938.5Z" fill="url(#tile)"/>
<rect x="1145.70" y="895.00" width="40.60" height="24.40" fill="#5a5a5a" rx="3.2" fill-opacity="0.55"/>
<rect x="1146.10" y="895.30" width="40.00" height="23.80" fill="#b45c9a" rx="2.8"/>
<text transform="translate(1143.56 933.90) scale(1.0000 1)" font-size="11.48" fill="#242424" stroke="#242424" stroke-width="0.3">Magenta</text>
<path d="M1193.1 938.5 L1193.1 893.5 Q1193.1 890 1196.6 890 L1239.2 890 Q1242.7 890 1242.7 893.5 L1242.7 938.5Z" fill="url(#tile)"/>
<rect x="1197.70" y="895.00" width="40.60" height="24.40" fill="#5a5a5a" rx="3.2" fill-opacity="0.55"/>
<rect x="1198.10" y="895.30" width="40.00" height="23.80" fill="#2d88ae" rx="2.8"/>
<text transform="translate(1204.50 933.90) scale(1.0000 1)" font-size="11.48" fill="#242424" stroke="#242424" stroke-width="0.3">Cyan</text>
<path d="M1245.1 938.5 L1245.1 893.5 Q1245.1 890 1248.6 890 L1291.2 890 Q1294.7 890 1294.7 893.5 L1294.7 938.5Z" fill="url(#tile)"/>
<rect x="1249.70" y="895.00" width="40.60" height="24.40" fill="#5a5a5a" rx="3.2" fill-opacity="0.55"/>
<rect x="1250.10" y="895.30" width="40.00" height="23.80" fill="#ff0000" rx="2.8"/>
<text transform="translate(1243.09 933.90) scale(1.0000 1)" font-size="11.48" fill="#242424" stroke="#242424" stroke-width="0.3">100% Red</text>
<path d="M1297.1 938.5 L1297.1 893.5 Q1297.1 890 1300.6 890 L1343.2 890 Q1346.7 890 1346.7 893.5 L1346.7 938.5Z" fill="url(#tile)"/>
<rect x="1301.70" y="895.00" width="40.60" height="13.10" fill="#5a5a5a" rx="3.2" fill-opacity="0.55"/>
<rect x="1302.10" y="895.30" width="40.00" height="12.50" fill="#00ff00" rx="2.8"/>
<text transform="translate(1305.94 922.00) scale(1.0000 1)" font-size="11.48" fill="#242424" stroke="#242424" stroke-width="0.3">100%</text>
<text transform="translate(1305.94 934.20) scale(1.0000 1)" font-size="11.48" fill="#242424" stroke="#242424" stroke-width="0.3">Green</text>
<path d="M1349.1 938.5 L1349.1 893.5 Q1349.1 890 1352.6 890 L1395.2 890 Q1398.7 890 1398.7 893.5 L1398.7 938.5Z" fill="url(#tile)"/>
<rect x="1353.70" y="895.00" width="40.60" height="13.10" fill="#5a5a5a" rx="3.2" fill-opacity="0.55"/>
<rect x="1354.10" y="895.30" width="40.00" height="12.50" fill="#0000ff" rx="2.8"/>
<text transform="translate(1359.22 922.00) scale(1.0000 1)" font-size="11.48" fill="#242424" stroke="#242424" stroke-width="0.3">100%</text>
<text transform="translate(1359.22 934.20) scale(1.0000 1)" font-size="11.48" fill="#242424" stroke="#242424" stroke-width="0.3">Blue</text>
</g>
<rect x="0.00" y="938.50" width="1366.70" height="12.50" fill="#4c4c4c"/>
<rect x="0.00" y="939.30" width="7.80" height="11.00" fill="#a0a0a0"/>
<path d="M5.5 941 L5.5 949 L1.2 945Z" fill="#2a2a2a"/>
<rect x="10.50" y="939.60" width="752.00" height="10.60" fill="#3e3e3e" rx="5.3"/>
<rect x="1354.50" y="939.30" width="10.50" height="11.00" fill="#8c8c8c"/>
<path d="M1358 941 L1358 949 L1362.5 945Z" fill="#444"/>
<rect x="0.00" y="951.00" width="1685.00" height="2.00" fill="#2a2a2a"/>
<rect x="1366.70" y="889.80" width="48.10" height="18.20" fill="url(#up)" rx="3"/>
<circle cx="1391.5" cy="898.7" r="7.2" fill="url(#cir)"/><path d="M1386.8 900.6 L1396.2 900.6 L1391.5 895.6Z" fill="#2a2a2a"/>
<rect x="1366.70" y="908.60" width="48.10" height="42.00" fill="url(#big)" rx="2"/>
<rect x="1376.30" y="915.20" width="29.00" height="29.00" fill="url(#bigi)" rx="3.5" stroke="#2e2e2e" stroke-width="2.2"/>
<rect x="1384.00" y="923.00" width="13.70" height="13.40" fill="#080808"/>
<rect x="1416.50" y="889.80" width="45.00" height="30.00" fill="url(#btn)" rx="2.5"/>
<circle cx="1439.0" cy="905" r="9.8" fill="url(#cir)"/>
<rect x="1462.50" y="889.80" width="44.40" height="30.00" fill="url(#btn)" rx="2.5"/>
<circle cx="1484.7" cy="905" r="9.8" fill="url(#cir)"/>
<rect x="1507.90" y="889.80" width="44.10" height="30.00" fill="url(#btn)" rx="2.5"/>
<circle cx="1530.0" cy="905" r="9.8" fill="url(#cir)"/>
<rect x="1553.00" y="889.80" width="43.70" height="30.00" fill="url(#btn)" rx="2.5"/>
<circle cx="1574.8" cy="905" r="9.8" fill="url(#cir)"/>
<rect x="1597.70" y="889.80" width="44.20" height="30.00" fill="url(#btd)" rx="2.5"/>
<circle cx="1619.8" cy="905" r="9.8" fill="url(#cird)"/>
<rect x="1642.90" y="889.80" width="46.60" height="30.00" fill="url(#btd)" rx="2.5"/>
<circle cx="1665.0" cy="905" r="9.8" fill="url(#cird)"/>
<rect x="1434.80" y="901.00" width="8.20" height="8.20" fill="#2c2c2c"/>
<path d="M1481.5 900.3 L1481.5 909.9 L1490 905.1Z" fill="#2c2c2c"/>
<path d="M1527 900.6 H1524.6 V910.6 H1527 M1532.9 900.6 H1535.3 V910.6 H1532.9" fill="none" stroke="#2c2c2c" stroke-width="1.9"/>
<rect x="1527.60" y="904.10" width="1.70" height="1.70" fill="#2c2c2c"/>
<rect x="1530.60" y="904.10" width="1.70" height="1.70" fill="#2c2c2c"/>
<path d="M1575.1 905 C1573.4 903 1572 902.5 1570.8 902.5 C1569.2 902.5 1568.3 903.6 1568.3 905 C1568.3 906.4 1569.2 907.5 1570.8 907.5 C1572 907.5 1573.4 907 1575.1 905 C1576.8 903 1578.2 902.5 1579.4 902.5 C1581 902.5 1581.9 903.6 1581.9 905 C1581.9 906.4 1581 907.5 1579.4 907.5 C1578.2 907.5 1576.8 907 1575.1 905 Z" fill="none" stroke="#2c2c2c" stroke-width="1.7"/>
<path d="M1614.5 903.5 A5.6 5.6 0 0 1 1624.6 902 M1625.3 906.5 A5.6 5.6 0 0 1 1615.2 908" fill="none" stroke="#1c1c1c" stroke-width="2.2"/><path d="M1622.5 903.8 L1627.3 903.8 L1627.3 899Z M1617.3 906.2 L1612.5 906.2 L1612.5 911Z" fill="#1c1c1c"/>
<rect x="1416.50" y="921.10" width="135.50" height="29.40" fill="url(#btn)" rx="3"/>
<rect x="1553.00" y="921.10" width="140.00" height="29.40" fill="url(#btn)" rx="3"/>
<circle cx="1447.2" cy="936.3" r="9.6" fill="url(#cir)"/><circle cx="1660.5" cy="936.3" r="9.6" fill="url(#cir)"/>
<path d="M1446.6 931.6 L1442.4 936.3 L1446.6 941 M1451.6 931.6 L1447.4 936.3 L1451.6 941" fill="none" stroke="#2c2c2c" stroke-width="1.5"/>
<path d="M1656.2 931.6 L1660.4 936.3 L1656.2 941 M1661.2 931.6 L1665.4 936.3 L1661.2 941" fill="none" stroke="#2c2c2c" stroke-width="1.5"/>
<rect x="36.50" y="951.80" width="1360.50" height="1.20" fill="#f0f0f0"/>
<text transform="translate(1473.80 943.70) scale(1.0274 1)" font-size="21.80" fill="#303030" stroke="#303030" stroke-width="0.5">Back</text>
<text transform="translate(1580.50 943.70) scale(1.1399 1)" font-size="21.80" fill="#303030" stroke="#303030" stroke-width="0.5">Next</text>
</svg>
</body></html>
